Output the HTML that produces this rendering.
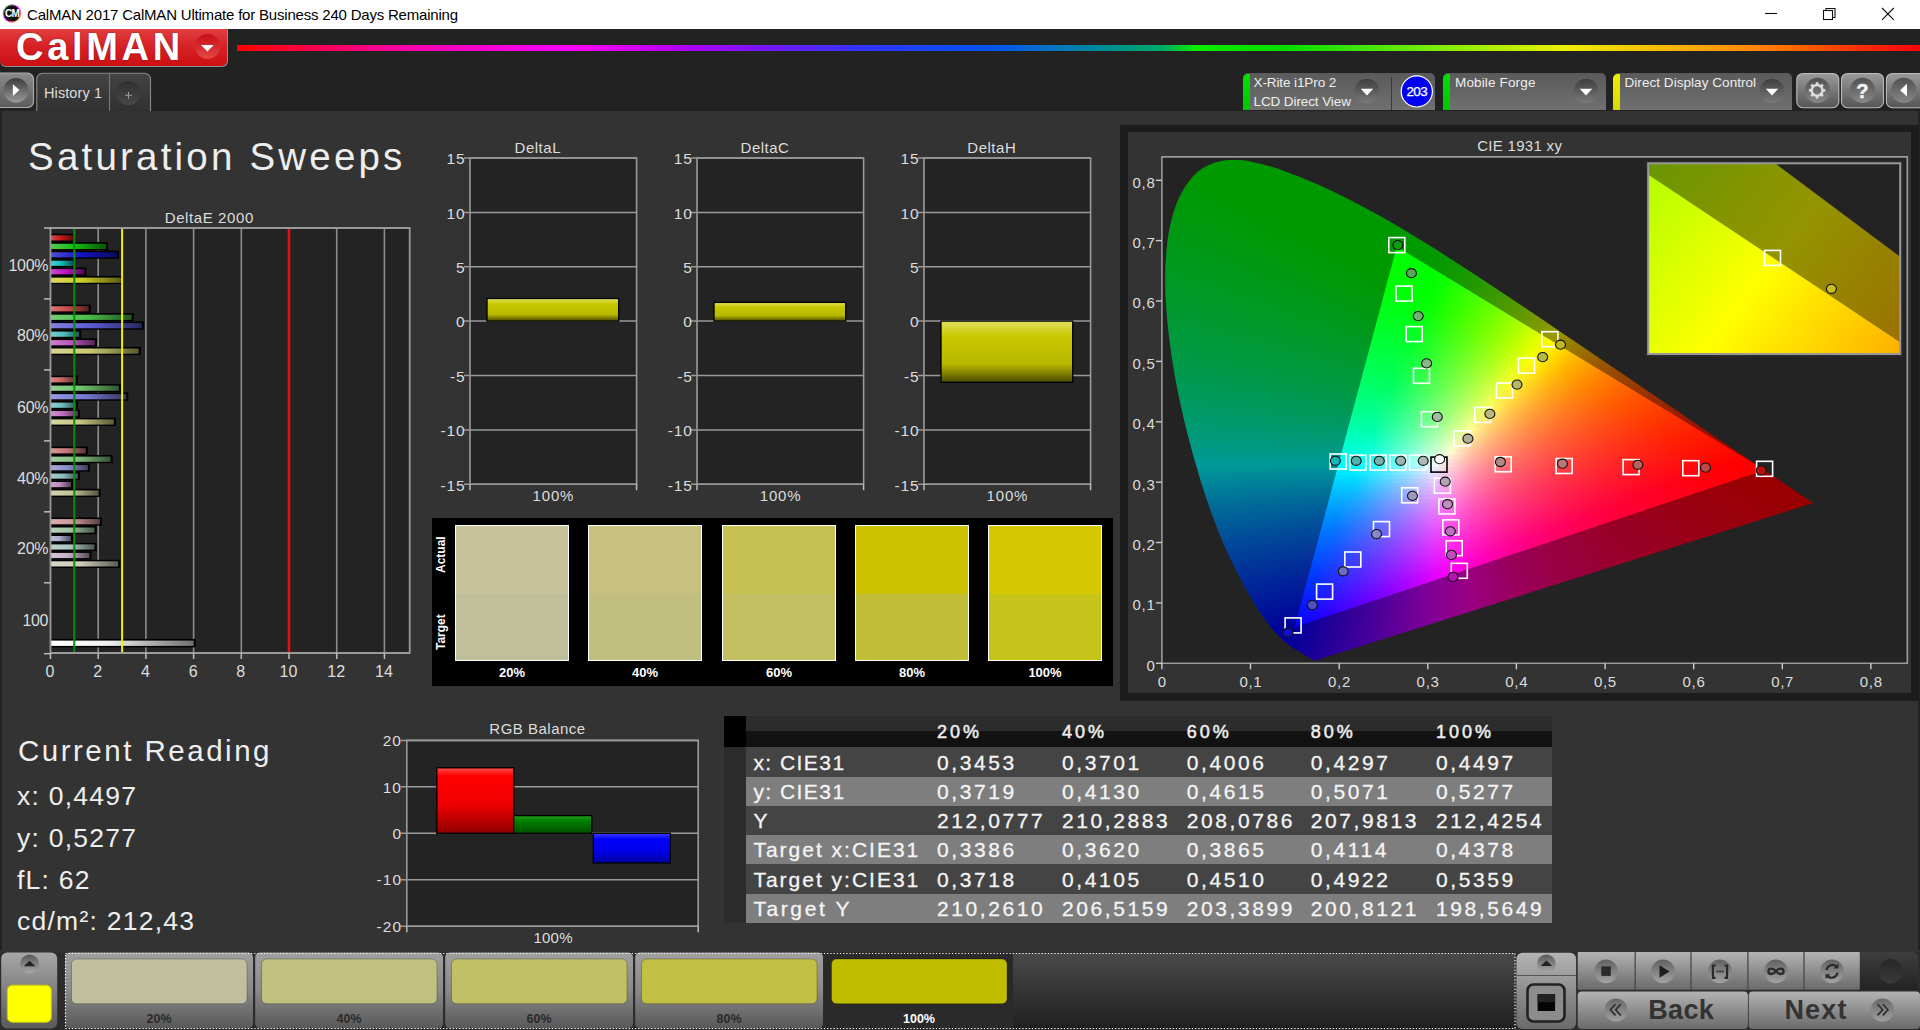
<!DOCTYPE html><html><head><meta charset="utf-8"><style>
html,body{margin:0;padding:0;width:1920px;height:1030px;overflow:hidden;background:#222;}
body{font-family:"Liberation Sans", sans-serif;position:relative;}
.t{position:absolute;white-space:nowrap;}
svg{position:absolute;left:0;top:0;}
</style></head><body>
<div style="position:absolute;left:0px;top:0px;width:1920px;height:29px;background:#fff;"></div>
<svg width="30" height="29" style="left:0;top:0"><defs><linearGradient id="icg" x1="0" y1="0" x2="1" y2="1"><stop offset="0" stop-color="#0f0"/><stop offset=".5" stop-color="#f0f"/><stop offset="1" stop-color="#ff0"/></linearGradient></defs><circle cx="12" cy="13.5" r="9.3" fill="url(#icg)"/><circle cx="12" cy="13.5" r="8" fill="#111"/><text x="12" y="17.3" font-size="10" font-weight="bold" fill="#fff" text-anchor="middle" font-family="Liberation Sans" letter-spacing="-0.8">CM</text></svg>
<div class="t" style="left:27.0px;top:7.3px;font-size:15px;line-height:15px;color:#000;letter-spacing:-0.2px;font-weight:normal;">CalMAN 2017 CalMAN Ultimate for Business 240 Days Remaining</div>
<svg width="160" height="29" style="left:1760px;top:0"><path d="M5 13.5h12" stroke="#111" stroke-width="1.1"/><rect x="63.5" y="10.5" width="9" height="9" fill="none" stroke="#111" stroke-width="1.1"/><path d="M66 10.5v-2h9v9h-2.5" fill="none" stroke="#111" stroke-width="1.1"/><path d="M122 8l11.8 11.8M133.8 8l-11.8 11.8" stroke="#111" stroke-width="1.15"/></svg>
<div style="position:absolute;left:0px;top:29px;width:1920px;height:82px;background:#222;"></div>
<div style="position:absolute;left:0px;top:29px;width:227px;height:37px;background:linear-gradient(#e23e40,#d82226 45%,#cc1014);border-radius:0 0 6px 6px;border-right:1.2px solid #8c9090;border-bottom:1.2px solid #8c9090;"></div>
<div class="t" style="left:16.0px;top:28.3px;font-size:38px;line-height:38px;color:#fff;letter-spacing:3.7px;font-weight:bold;text-shadow:0 0 2px rgba(0,0,0,.35);">CalMAN</div>
<svg width="30" height="30" style="left:193px;top:32px"><defs><linearGradient id="lgd" x1="0" y1="0" x2="0" y2="1"><stop offset="0" stop-color="#c80c18"/><stop offset="1" stop-color="#e24848"/></linearGradient></defs><circle cx="14.5" cy="14.4" r="12.5" fill="url(#lgd)"/><path d="M8 12.9h12.8l-6.4 6.6z" fill="#fff"/></svg>
<div style="position:absolute;left:237.4px;top:45px;width:1683px;height:6px;background:linear-gradient(90deg,#f00 0%,#f0a 10%,#f0f 20%,#a0f 27%,#33f 37%,#05e 45%,#0a6 55%,#0e0 57%,#0d0 62%,#8e0 72%,#ee0 79%,#f80 90%,#f00 100%);"></div>
<svg width="160" height="40" style="left:0;top:72px"><defs><linearGradient id="tb1" x1="0" y1="0" x2="0" y2="1"><stop offset="0" stop-color="#8a8a8a"/><stop offset="1" stop-color="#5c5c5c"/></linearGradient><linearGradient id="tbc" x1="0" y1="0" x2="0" y2="1"><stop offset="0" stop-color="#3c3c3c"/><stop offset="1" stop-color="#9a9a9a"/></linearGradient><linearGradient id="tb2" x1="0" y1="0" x2="0" y2="1"><stop offset="0" stop-color="#444"/><stop offset="1" stop-color="#303030"/></linearGradient><linearGradient id="tbc2" x1="0" y1="0" x2="0" y2="1"><stop offset="0" stop-color="#303030"/><stop offset="1" stop-color="#484848"/></linearGradient></defs><rect x="-6" y="1.2" width="39.5" height="34.3" rx="6" fill="url(#tb1)" stroke="#aaa" stroke-width="1.2"/><circle cx="16" cy="18.3" r="12.3" fill="url(#tbc)"/><path d="M12.9 12.2v11.8l6.5-5.9z" fill="#fff"/><path d="M36.8 40V7.2a6 6 0 0 1 6-6H144.5a6 6 0 0 1 6 6V40" fill="url(#tb2)" stroke="#8a8a8a" stroke-width="1.1"/><path d="M109.5 1v39" stroke="#777" stroke-width="1.1"/><circle cx="128.5" cy="21" r="12" fill="url(#tbc2)"/><path d="M125 23.3h7M128.5 19.8v7" stroke="#999" stroke-width="1"/></svg>
<div class="t" style="left:44.0px;top:86.2px;font-size:14.5px;line-height:14.5px;color:#ddd;letter-spacing:0.1px;font-weight:normal;">History 1</div>
<div style="position:absolute;left:1243px;top:73px;width:192px;height:37px;background:linear-gradient(#5a5a5a,#707070);border-radius:5px 5px 0 0;"></div>
<div style="position:absolute;left:1243px;top:74px;width:7px;height:36px;background:linear-gradient(#00e000,#00c800);border-radius:5px 0 0 0;"></div>
<svg width="30" height="30" style="left:1352px;top:76.4px"><defs><linearGradient id="dd1243" x1="0" y1="0" x2="0" y2="1"><stop offset="0" stop-color="#3e3e3e"/><stop offset="1" stop-color="#7a7a7a"/></linearGradient></defs><circle cx="15" cy="15" r="12.3" fill="url(#dd1243)"/><path d="M8.8 12.8h12.4l-6.2 6.6z" fill="#fff"/></svg>
<div class="t" style="left:1253.5px;top:76.0px;font-size:13.5px;line-height:13.5px;color:#eee;letter-spacing:-0.1px;font-weight:normal;">X-Rite i1Pro 2</div>
<div class="t" style="left:1253.5px;top:94.8px;font-size:13.5px;line-height:13.5px;color:#eee;letter-spacing:-0.1px;font-weight:normal;">LCD Direct View</div>
<div style="position:absolute;left:1391px;top:77px;width:1.2px;height:33px;background:#3a3a3a;"></div>
<svg width="40" height="40" style="left:1397px;top:72px"><circle cx="19.8" cy="19.4" r="15.6" fill="#0000f0" stroke="#fff" stroke-width="1.2"/><text x="19.8" y="24.2" font-size="13.5" fill="#fff" stroke="#fff" stroke-width="0.25" text-anchor="middle" font-family="Liberation Sans" letter-spacing="-0.6">203</text></svg>
<div style="position:absolute;left:1443px;top:73px;width:163px;height:37px;background:linear-gradient(#5a5a5a,#707070);border-radius:5px 5px 0 0;"></div>
<div style="position:absolute;left:1443px;top:74px;width:7px;height:36px;background:linear-gradient(#00e000,#00c800);border-radius:5px 0 0 0;"></div>
<svg width="30" height="30" style="left:1570.5px;top:76.4px"><defs><linearGradient id="dd1443" x1="0" y1="0" x2="0" y2="1"><stop offset="0" stop-color="#3e3e3e"/><stop offset="1" stop-color="#7a7a7a"/></linearGradient></defs><circle cx="15" cy="15" r="12.3" fill="url(#dd1443)"/><path d="M8.8 12.8h12.4l-6.2 6.6z" fill="#fff"/></svg>
<div class="t" style="left:1455.0px;top:76.0px;font-size:13.5px;line-height:13.5px;color:#eee;letter-spacing:0.15px;font-weight:normal;">Mobile Forge</div>
<div style="position:absolute;left:1613px;top:73px;width:179px;height:37px;background:linear-gradient(#5a5a5a,#707070);border-radius:5px 5px 0 0;"></div>
<div style="position:absolute;left:1613px;top:74px;width:7px;height:36px;background:linear-gradient(#f0f000,#d8d800);border-radius:5px 0 0 0;"></div>
<svg width="30" height="30" style="left:1757px;top:76.4px"><defs><linearGradient id="dd1613" x1="0" y1="0" x2="0" y2="1"><stop offset="0" stop-color="#3e3e3e"/><stop offset="1" stop-color="#7a7a7a"/></linearGradient></defs><circle cx="15" cy="15" r="12.3" fill="url(#dd1613)"/><path d="M8.8 12.8h12.4l-6.2 6.6z" fill="#fff"/></svg>
<div class="t" style="left:1624.5px;top:76.0px;font-size:13.5px;line-height:13.5px;color:#eee;letter-spacing:0.05px;font-weight:normal;">Direct Display Control</div>
<svg width="130" height="40" style="left:1795px;top:72px"><defs><linearGradient id="bg1" x1="0" y1="0" x2="0" y2="1"><stop offset="0" stop-color="#9a9a9a"/><stop offset="1" stop-color="#555"/></linearGradient><linearGradient id="bgc" x1="0" y1="0" x2="0" y2="1"><stop offset="0" stop-color="#505050"/><stop offset="1" stop-color="#888"/></linearGradient></defs><rect x="1.8" y="1.5" width="42" height="34.2" rx="6" fill="url(#bg1)" stroke="#bbb" stroke-width="1.1"/><rect x="46.5" y="1.5" width="42" height="34.2" rx="6" fill="url(#bg1)" stroke="#bbb" stroke-width="1.1"/><rect x="91.4" y="1.5" width="45" height="34.2" rx="6" fill="url(#bg1)" stroke="#bbb" stroke-width="1.1"/><circle cx="22.5" cy="18.4" r="12.6" fill="url(#bgc)"/><circle cx="67.5" cy="18.4" r="12.6" fill="url(#bgc)"/><circle cx="108.7" cy="18.4" r="12.6" fill="url(#bgc)"/><g transform="translate(22.1 18.4)" fill="#ddd"><circle r="5.4" fill="none" stroke="#ddd" stroke-width="2.4"/><rect x="-1.3" y="-8.2" width="2.6" height="3.4" transform="rotate(0)"/><rect x="-1.3" y="-8.2" width="2.6" height="3.4" transform="rotate(45)"/><rect x="-1.3" y="-8.2" width="2.6" height="3.4" transform="rotate(90)"/><rect x="-1.3" y="-8.2" width="2.6" height="3.4" transform="rotate(135)"/><rect x="-1.3" y="-8.2" width="2.6" height="3.4" transform="rotate(180)"/><rect x="-1.3" y="-8.2" width="2.6" height="3.4" transform="rotate(225)"/><rect x="-1.3" y="-8.2" width="2.6" height="3.4" transform="rotate(270)"/><rect x="-1.3" y="-8.2" width="2.6" height="3.4" transform="rotate(315)"/></g><text x="67.3" y="25.6" font-size="20" font-weight="bold" fill="#f2f2f2" stroke="#f2f2f2" stroke-width="0.6" text-anchor="middle" font-family="Liberation Sans">?</text><path d="M112 11.8v12.6l-6.9-6.1z" fill="#fff"/></svg>
<div style="position:absolute;left:2px;top:111px;width:1916px;height:839px;background:#333;"></div>
<div class="t" style="left:28.0px;top:138.1px;font-size:38.5px;line-height:38.5px;color:#eee;letter-spacing:3.2px;font-weight:normal;">Saturation Sweeps</div>
<svg width="440" height="700" style="left:0;top:0"><defs><linearGradient id="de1"><stop offset="0" stop-color="rgb(213, 82, 82)"/><stop offset=".45" stop-color="rgb(200, 25, 25)"/><stop offset="1" stop-color="rgb(90, 11, 11)"/></linearGradient><linearGradient id="de2"><stop offset="0" stop-color="rgb(78, 206, 78)"/><stop offset=".45" stop-color="rgb(20, 190, 20)"/><stop offset="1" stop-color="rgb(9, 85, 9)"/></linearGradient><linearGradient id="de3"><stop offset="0" stop-color="rgb(78, 78, 213)"/><stop offset=".45" stop-color="rgb(20, 20, 200)"/><stop offset="1" stop-color="rgb(9, 9, 90)"/></linearGradient><linearGradient id="de4"><stop offset="0" stop-color="rgb(78, 206, 206)"/><stop offset=".45" stop-color="rgb(20, 190, 190)"/><stop offset="1" stop-color="rgb(9, 85, 85)"/></linearGradient><linearGradient id="de5"><stop offset="0" stop-color="rgb(206, 78, 206)"/><stop offset=".45" stop-color="rgb(190, 20, 190)"/><stop offset="1" stop-color="rgb(85, 9, 85)"/></linearGradient><linearGradient id="de6"><stop offset="0" stop-color="rgb(217, 217, 93)"/><stop offset=".45" stop-color="rgb(205, 205, 40)"/><stop offset="1" stop-color="rgb(92, 92, 18)"/></linearGradient><linearGradient id="de7"><stop offset="0" stop-color="rgb(213, 120, 120)"/><stop offset=".45" stop-color="rgb(200, 75, 75)"/><stop offset="1" stop-color="rgb(90, 33, 33)"/></linearGradient><linearGradient id="de8"><stop offset="0" stop-color="rgb(120, 206, 120)"/><stop offset=".45" stop-color="rgb(75, 190, 75)"/><stop offset="1" stop-color="rgb(33, 85, 33)"/></linearGradient><linearGradient id="de9"><stop offset="0" stop-color="rgb(131, 131, 221)"/><stop offset=".45" stop-color="rgb(90, 90, 210)"/><stop offset="1" stop-color="rgb(40, 40, 94)"/></linearGradient><linearGradient id="de10"><stop offset="0" stop-color="rgb(123, 206, 206)"/><stop offset=".45" stop-color="rgb(80, 190, 190)"/><stop offset="1" stop-color="rgb(36, 85, 85)"/></linearGradient><linearGradient id="de11"><stop offset="0" stop-color="rgb(206, 127, 206)"/><stop offset=".45" stop-color="rgb(190, 85, 190)"/><stop offset="1" stop-color="rgb(85, 38, 85)"/></linearGradient><linearGradient id="de12"><stop offset="0" stop-color="rgb(213, 213, 146)"/><stop offset=".45" stop-color="rgb(200, 200, 110)"/><stop offset="1" stop-color="rgb(90, 90, 49)"/></linearGradient><linearGradient id="de13"><stop offset="0" stop-color="rgb(213, 138, 138)"/><stop offset=".45" stop-color="rgb(200, 100, 100)"/><stop offset="1" stop-color="rgb(90, 45, 45)"/></linearGradient><linearGradient id="de14"><stop offset="0" stop-color="rgb(146, 210, 146)"/><stop offset=".45" stop-color="rgb(110, 195, 110)"/><stop offset="1" stop-color="rgb(49, 87, 49)"/></linearGradient><linearGradient id="de15"><stop offset="0" stop-color="rgb(153, 153, 225)"/><stop offset=".45" stop-color="rgb(120, 120, 215)"/><stop offset="1" stop-color="rgb(54, 54, 96)"/></linearGradient><linearGradient id="de16"><stop offset="0" stop-color="rgb(146, 206, 206)"/><stop offset=".45" stop-color="rgb(110, 190, 190)"/><stop offset="1" stop-color="rgb(49, 85, 85)"/></linearGradient><linearGradient id="de17"><stop offset="0" stop-color="rgb(206, 146, 206)"/><stop offset=".45" stop-color="rgb(190, 110, 190)"/><stop offset="1" stop-color="rgb(85, 49, 85)"/></linearGradient><linearGradient id="de18"><stop offset="0" stop-color="rgb(213, 213, 161)"/><stop offset=".45" stop-color="rgb(200, 200, 130)"/><stop offset="1" stop-color="rgb(90, 90, 58)"/></linearGradient><linearGradient id="de19"><stop offset="0" stop-color="rgb(213, 153, 153)"/><stop offset=".45" stop-color="rgb(200, 120, 120)"/><stop offset="1" stop-color="rgb(90, 54, 54)"/></linearGradient><linearGradient id="de20"><stop offset="0" stop-color="rgb(161, 206, 161)"/><stop offset=".45" stop-color="rgb(130, 190, 130)"/><stop offset="1" stop-color="rgb(58, 85, 58)"/></linearGradient><linearGradient id="de21"><stop offset="0" stop-color="rgb(168, 168, 217)"/><stop offset=".45" stop-color="rgb(140, 140, 205)"/><stop offset="1" stop-color="rgb(63, 63, 92)"/></linearGradient><linearGradient id="de22"><stop offset="0" stop-color="rgb(168, 206, 206)"/><stop offset=".45" stop-color="rgb(140, 190, 190)"/><stop offset="1" stop-color="rgb(63, 85, 85)"/></linearGradient><linearGradient id="de23"><stop offset="0" stop-color="rgb(206, 168, 206)"/><stop offset=".45" stop-color="rgb(190, 140, 190)"/><stop offset="1" stop-color="rgb(85, 63, 85)"/></linearGradient><linearGradient id="de24"><stop offset="0" stop-color="rgb(210, 210, 176)"/><stop offset=".45" stop-color="rgb(195, 195, 150)"/><stop offset="1" stop-color="rgb(87, 87, 67)"/></linearGradient><linearGradient id="de25"><stop offset="0" stop-color="rgb(217, 176, 176)"/><stop offset=".45" stop-color="rgb(205, 150, 150)"/><stop offset="1" stop-color="rgb(92, 67, 67)"/></linearGradient><linearGradient id="de26"><stop offset="0" stop-color="rgb(183, 210, 183)"/><stop offset=".45" stop-color="rgb(160, 195, 160)"/><stop offset="1" stop-color="rgb(72, 87, 72)"/></linearGradient><linearGradient id="de27"><stop offset="0" stop-color="rgb(191, 191, 217)"/><stop offset=".45" stop-color="rgb(170, 170, 205)"/><stop offset="1" stop-color="rgb(76, 76, 92)"/></linearGradient><linearGradient id="de28"><stop offset="0" stop-color="rgb(191, 210, 206)"/><stop offset=".45" stop-color="rgb(170, 195, 190)"/><stop offset="1" stop-color="rgb(76, 87, 85)"/></linearGradient><linearGradient id="de29"><stop offset="0" stop-color="rgb(213, 195, 213)"/><stop offset=".45" stop-color="rgb(200, 175, 200)"/><stop offset="1" stop-color="rgb(90, 78, 90)"/></linearGradient><linearGradient id="de30"><stop offset="0" stop-color="rgb(217, 217, 202)"/><stop offset=".45" stop-color="rgb(205, 205, 185)"/><stop offset="1" stop-color="rgb(92, 92, 83)"/></linearGradient><linearGradient id="dew"><stop offset="0" stop-color="#fff"/><stop offset=".4" stop-color="#f0f0f0"/><stop offset="1" stop-color="#707070"/></linearGradient></defs><rect x="50.5" y="228" width="359.2" height="425" fill="#232323"/><path d="M98.2 228V653" stroke="#8c8c8c" stroke-width="1.6"/><path d="M145.9 228V653" stroke="#8c8c8c" stroke-width="1.6"/><path d="M193.6 228V653" stroke="#8c8c8c" stroke-width="1.6"/><path d="M241.3 228V653" stroke="#8c8c8c" stroke-width="1.6"/><path d="M289.0 228V653" stroke="#8c8c8c" stroke-width="1.6"/><path d="M336.7 228V653" stroke="#8c8c8c" stroke-width="1.6"/><path d="M384.4 228V653" stroke="#8c8c8c" stroke-width="1.6"/><rect x="50.5" y="233.7" width="24.7" height="8.2" fill="#000"/><rect x="50.5" y="235.3" width="22.7" height="5.2" fill="url(#de1)"/><rect x="50.5" y="242.1" width="57.6" height="8.2" fill="#000"/><rect x="50.5" y="243.8" width="55.6" height="5.2" fill="url(#de2)"/><rect x="50.5" y="250.6" width="68.5" height="8.2" fill="#000"/><rect x="50.5" y="252.2" width="66.5" height="5.2" fill="url(#de3)"/><rect x="50.5" y="259.1" width="24.7" height="8.2" fill="#000"/><rect x="50.5" y="260.7" width="22.7" height="5.2" fill="url(#de4)"/><rect x="50.5" y="267.5" width="35.9" height="8.2" fill="#000"/><rect x="50.5" y="269.1" width="33.9" height="5.2" fill="url(#de5)"/><rect x="50.5" y="275.9" width="72.4" height="8.2" fill="#000"/><rect x="50.5" y="277.6" width="70.4" height="5.2" fill="url(#de6)"/><rect x="50.5" y="304.6" width="40.2" height="8.2" fill="#000"/><rect x="50.5" y="306.2" width="38.2" height="5.2" fill="url(#de7)"/><rect x="50.5" y="313.1" width="83.1" height="8.2" fill="#000"/><rect x="50.5" y="314.7" width="81.1" height="5.2" fill="url(#de8)"/><rect x="50.5" y="321.5" width="93.3" height="8.2" fill="#000"/><rect x="50.5" y="323.1" width="91.3" height="5.2" fill="url(#de9)"/><rect x="50.5" y="330.0" width="30.6" height="8.2" fill="#000"/><rect x="50.5" y="331.6" width="28.6" height="5.2" fill="url(#de10)"/><rect x="50.5" y="338.4" width="46.4" height="8.2" fill="#000"/><rect x="50.5" y="340.1" width="44.4" height="5.2" fill="url(#de11)"/><rect x="50.5" y="346.9" width="90.2" height="8.2" fill="#000"/><rect x="50.5" y="348.5" width="88.2" height="5.2" fill="url(#de12)"/><rect x="50.5" y="375.6" width="27.3" height="8.2" fill="#000"/><rect x="50.5" y="377.2" width="25.3" height="5.2" fill="url(#de13)"/><rect x="50.5" y="384.0" width="70.4" height="8.2" fill="#000"/><rect x="50.5" y="385.6" width="68.4" height="5.2" fill="url(#de14)"/><rect x="50.5" y="392.5" width="77.8" height="8.2" fill="#000"/><rect x="50.5" y="394.1" width="75.8" height="5.2" fill="url(#de15)"/><rect x="50.5" y="400.9" width="27.3" height="8.2" fill="#000"/><rect x="50.5" y="402.6" width="25.3" height="5.2" fill="url(#de16)"/><rect x="50.5" y="409.4" width="29.4" height="8.2" fill="#000"/><rect x="50.5" y="411.0" width="27.4" height="5.2" fill="url(#de17)"/><rect x="50.5" y="417.8" width="65.4" height="8.2" fill="#000"/><rect x="50.5" y="419.4" width="63.4" height="5.2" fill="url(#de18)"/><rect x="50.5" y="446.6" width="37.3" height="8.2" fill="#000"/><rect x="50.5" y="448.2" width="35.3" height="5.2" fill="url(#de19)"/><rect x="50.5" y="455.0" width="62.1" height="8.2" fill="#000"/><rect x="50.5" y="456.6" width="60.1" height="5.2" fill="url(#de20)"/><rect x="50.5" y="463.4" width="39.4" height="8.2" fill="#000"/><rect x="50.5" y="465.1" width="37.4" height="5.2" fill="url(#de21)"/><rect x="50.5" y="471.9" width="29.4" height="8.2" fill="#000"/><rect x="50.5" y="473.5" width="27.4" height="5.2" fill="url(#de22)"/><rect x="50.5" y="480.4" width="22.5" height="8.2" fill="#000"/><rect x="50.5" y="482.0" width="20.5" height="5.2" fill="url(#de23)"/><rect x="50.5" y="488.8" width="50.2" height="8.2" fill="#000"/><rect x="50.5" y="490.4" width="48.2" height="5.2" fill="url(#de24)"/><rect x="50.5" y="517.5" width="51.4" height="8.2" fill="#000"/><rect x="50.5" y="519.1" width="49.4" height="5.2" fill="url(#de25)"/><rect x="50.5" y="526.0" width="46.1" height="8.2" fill="#000"/><rect x="50.5" y="527.5" width="44.1" height="5.2" fill="url(#de26)"/><rect x="50.5" y="534.4" width="22.5" height="8.2" fill="#000"/><rect x="50.5" y="536.0" width="20.5" height="5.2" fill="url(#de27)"/><rect x="50.5" y="542.9" width="46.1" height="8.2" fill="#000"/><rect x="50.5" y="544.4" width="44.1" height="5.2" fill="url(#de28)"/><rect x="50.5" y="551.3" width="40.9" height="8.2" fill="#000"/><rect x="50.5" y="552.9" width="38.9" height="5.2" fill="url(#de29)"/><rect x="50.5" y="559.8" width="69.7" height="8.2" fill="#000"/><rect x="50.5" y="561.3" width="67.7" height="5.2" fill="url(#de30)"/><rect x="50.5" y="638.8" width="145.1" height="8.6" fill="#000"/><rect x="50.5" y="640.6" width="143.1" height="5.3" fill="url(#dew)"/><path d="M74.3 228V653" stroke="#0a8a0a" stroke-width="2"/><path d="M122.1 228V653" stroke="#f0f000" stroke-width="2"/><path d="M289.0 228V653" stroke="#e01010" stroke-width="2.6"/><path d="M50.5 228H409.7V653H50.5Z" fill="none" stroke="#999" stroke-width="1.8"/><path d="M44 228.0H50.5" stroke="#bbb" stroke-width="1.5"/><path d="M44 298.9H50.5" stroke="#bbb" stroke-width="1.5"/><path d="M44 369.9H50.5" stroke="#bbb" stroke-width="1.5"/><path d="M44 440.9H50.5" stroke="#bbb" stroke-width="1.5"/><path d="M44 511.8H50.5" stroke="#bbb" stroke-width="1.5"/><path d="M44 582.8H50.5" stroke="#bbb" stroke-width="1.5"/><path d="M44 653.7H50.5" stroke="#bbb" stroke-width="1.5"/><path d="M50.5 653V659" stroke="#bbb" stroke-width="1.5"/><path d="M98.2 653V659" stroke="#bbb" stroke-width="1.5"/><path d="M145.9 653V659" stroke="#bbb" stroke-width="1.5"/><path d="M193.6 653V659" stroke="#bbb" stroke-width="1.5"/><path d="M241.3 653V659" stroke="#bbb" stroke-width="1.5"/><path d="M289.0 653V659" stroke="#bbb" stroke-width="1.5"/><path d="M336.7 653V659" stroke="#bbb" stroke-width="1.5"/><path d="M384.4 653V659" stroke="#bbb" stroke-width="1.5"/></svg>
<div class="t" style="left:-290.7px;width:1000px;text-align:center;top:210.3px;font-size:15px;line-height:15px;color:#ddd;letter-spacing:0.6px;font-weight:normal;">DeltaE 2000</div>
<div class="t" style="left:-951.8px;width:1000px;text-align:right;top:257.5px;font-size:16px;line-height:16px;color:#ddd;letter-spacing:-0.3px;font-weight:normal;">100%</div>
<div class="t" style="left:-951.8px;width:1000px;text-align:right;top:328.0px;font-size:16px;line-height:16px;color:#ddd;letter-spacing:-0.3px;font-weight:normal;">80%</div>
<div class="t" style="left:-951.8px;width:1000px;text-align:right;top:399.5px;font-size:16px;line-height:16px;color:#ddd;letter-spacing:-0.3px;font-weight:normal;">60%</div>
<div class="t" style="left:-951.8px;width:1000px;text-align:right;top:470.5px;font-size:16px;line-height:16px;color:#ddd;letter-spacing:-0.3px;font-weight:normal;">40%</div>
<div class="t" style="left:-951.8px;width:1000px;text-align:right;top:541.0px;font-size:16px;line-height:16px;color:#ddd;letter-spacing:-0.3px;font-weight:normal;">20%</div>
<div class="t" style="left:-951.8px;width:1000px;text-align:right;top:612.5px;font-size:16px;line-height:16px;color:#ddd;letter-spacing:-0.3px;font-weight:normal;">100</div>
<div class="t" style="left:-450.0px;width:1000px;text-align:center;top:663.5px;font-size:16px;line-height:16px;color:#ddd;letter-spacing:0px;font-weight:normal;">0</div>
<div class="t" style="left:-402.3px;width:1000px;text-align:center;top:663.5px;font-size:16px;line-height:16px;color:#ddd;letter-spacing:0px;font-weight:normal;">2</div>
<div class="t" style="left:-354.6px;width:1000px;text-align:center;top:663.5px;font-size:16px;line-height:16px;color:#ddd;letter-spacing:0px;font-weight:normal;">4</div>
<div class="t" style="left:-306.9px;width:1000px;text-align:center;top:663.5px;font-size:16px;line-height:16px;color:#ddd;letter-spacing:0px;font-weight:normal;">6</div>
<div class="t" style="left:-259.2px;width:1000px;text-align:center;top:663.5px;font-size:16px;line-height:16px;color:#ddd;letter-spacing:0px;font-weight:normal;">8</div>
<div class="t" style="left:-211.5px;width:1000px;text-align:center;top:663.5px;font-size:16px;line-height:16px;color:#ddd;letter-spacing:0px;font-weight:normal;">10</div>
<div class="t" style="left:-163.8px;width:1000px;text-align:center;top:663.5px;font-size:16px;line-height:16px;color:#ddd;letter-spacing:0px;font-weight:normal;">12</div>
<div class="t" style="left:-116.1px;width:1000px;text-align:center;top:663.5px;font-size:16px;line-height:16px;color:#ddd;letter-spacing:0px;font-weight:normal;">14</div>
<svg width="230" height="380" style="left:429.7px;top:130px"><defs><linearGradient id="dg469.7" x1="0" y1="0" x2="0" y2="1"><stop offset="0" stop-color="#e0e060"/><stop offset=".25" stop-color="#c8c800"/><stop offset=".7" stop-color="#b8b800"/><stop offset="1" stop-color="#4a4a00"/></linearGradient></defs><rect x="40" y="28" width="166.6" height="326.3" fill="#232323"/><path d="M34 354.3H206.6" stroke="#9a9a9a" stroke-width="1.5"/><path d="M34 299.9H206.6" stroke="#9a9a9a" stroke-width="1.5"/><path d="M34 245.5H206.6" stroke="#9a9a9a" stroke-width="1.5"/><path d="M34 191.1H206.6" stroke="#9a9a9a" stroke-width="1.5"/><path d="M34 136.8H206.6" stroke="#9a9a9a" stroke-width="1.5"/><path d="M34 82.4H206.6" stroke="#9a9a9a" stroke-width="1.5"/><path d="M34 28.0H206.6" stroke="#9a9a9a" stroke-width="1.5"/><path d="M40 28H206.6V354.3H40Z" fill="none" stroke="#9a9a9a" stroke-width="1.6"/><path d="M40 354.3v6M206.6 354.3v6" stroke="#bbb" stroke-width="1.5"/><rect x="57.0" y="168.5" width="131.7" height="22.6" fill="url(#dg469.7)" stroke="#000" stroke-width="1.3"/></svg>
<div class="t" style="left:37.8px;width:1000px;text-align:center;top:139.8px;font-size:15px;line-height:15px;color:#ddd;letter-spacing:0.5px;font-weight:normal;">DeltaL</div>
<div class="t" style="left:-534.4px;width:1000px;text-align:right;top:477.5px;font-size:15.5px;line-height:15.5px;color:#ddd;letter-spacing:0.9px;font-weight:normal;">-15</div>
<div class="t" style="left:-534.4px;width:1000px;text-align:right;top:423.1px;font-size:15.5px;line-height:15.5px;color:#ddd;letter-spacing:0.9px;font-weight:normal;">-10</div>
<div class="t" style="left:-534.4px;width:1000px;text-align:right;top:368.7px;font-size:15.5px;line-height:15.5px;color:#ddd;letter-spacing:0.9px;font-weight:normal;">-5</div>
<div class="t" style="left:-534.4px;width:1000px;text-align:right;top:314.3px;font-size:15.5px;line-height:15.5px;color:#ddd;letter-spacing:0.9px;font-weight:normal;">0</div>
<div class="t" style="left:-534.4px;width:1000px;text-align:right;top:259.9px;font-size:15.5px;line-height:15.5px;color:#ddd;letter-spacing:0.9px;font-weight:normal;">5</div>
<div class="t" style="left:-534.4px;width:1000px;text-align:right;top:205.6px;font-size:15.5px;line-height:15.5px;color:#ddd;letter-spacing:0.9px;font-weight:normal;">10</div>
<div class="t" style="left:-534.4px;width:1000px;text-align:right;top:151.2px;font-size:15.5px;line-height:15.5px;color:#ddd;letter-spacing:0.9px;font-weight:normal;">15</div>
<div class="t" style="left:53.4px;width:1000px;text-align:center;top:488.3px;font-size:15px;line-height:15px;color:#ddd;letter-spacing:0.8px;font-weight:normal;">100%</div>
<svg width="230" height="380" style="left:656.9px;top:130px"><defs><linearGradient id="dg696.9" x1="0" y1="0" x2="0" y2="1"><stop offset="0" stop-color="#e0e060"/><stop offset=".25" stop-color="#c8c800"/><stop offset=".7" stop-color="#b8b800"/><stop offset="1" stop-color="#4a4a00"/></linearGradient></defs><rect x="40" y="28" width="166.6" height="326.3" fill="#232323"/><path d="M34 354.3H206.6" stroke="#9a9a9a" stroke-width="1.5"/><path d="M34 299.9H206.6" stroke="#9a9a9a" stroke-width="1.5"/><path d="M34 245.5H206.6" stroke="#9a9a9a" stroke-width="1.5"/><path d="M34 191.1H206.6" stroke="#9a9a9a" stroke-width="1.5"/><path d="M34 136.8H206.6" stroke="#9a9a9a" stroke-width="1.5"/><path d="M34 82.4H206.6" stroke="#9a9a9a" stroke-width="1.5"/><path d="M34 28.0H206.6" stroke="#9a9a9a" stroke-width="1.5"/><path d="M40 28H206.6V354.3H40Z" fill="none" stroke="#9a9a9a" stroke-width="1.6"/><path d="M40 354.3v6M206.6 354.3v6" stroke="#bbb" stroke-width="1.5"/><rect x="57.0" y="172.4" width="131.7" height="18.7" fill="url(#dg696.9)" stroke="#000" stroke-width="1.3"/></svg>
<div class="t" style="left:265.0px;width:1000px;text-align:center;top:139.8px;font-size:15px;line-height:15px;color:#ddd;letter-spacing:0.5px;font-weight:normal;">DeltaC</div>
<div class="t" style="left:-307.2px;width:1000px;text-align:right;top:477.5px;font-size:15.5px;line-height:15.5px;color:#ddd;letter-spacing:0.9px;font-weight:normal;">-15</div>
<div class="t" style="left:-307.2px;width:1000px;text-align:right;top:423.1px;font-size:15.5px;line-height:15.5px;color:#ddd;letter-spacing:0.9px;font-weight:normal;">-10</div>
<div class="t" style="left:-307.2px;width:1000px;text-align:right;top:368.7px;font-size:15.5px;line-height:15.5px;color:#ddd;letter-spacing:0.9px;font-weight:normal;">-5</div>
<div class="t" style="left:-307.2px;width:1000px;text-align:right;top:314.3px;font-size:15.5px;line-height:15.5px;color:#ddd;letter-spacing:0.9px;font-weight:normal;">0</div>
<div class="t" style="left:-307.2px;width:1000px;text-align:right;top:259.9px;font-size:15.5px;line-height:15.5px;color:#ddd;letter-spacing:0.9px;font-weight:normal;">5</div>
<div class="t" style="left:-307.2px;width:1000px;text-align:right;top:205.6px;font-size:15.5px;line-height:15.5px;color:#ddd;letter-spacing:0.9px;font-weight:normal;">10</div>
<div class="t" style="left:-307.2px;width:1000px;text-align:right;top:151.2px;font-size:15.5px;line-height:15.5px;color:#ddd;letter-spacing:0.9px;font-weight:normal;">15</div>
<div class="t" style="left:280.6px;width:1000px;text-align:center;top:488.3px;font-size:15px;line-height:15px;color:#ddd;letter-spacing:0.8px;font-weight:normal;">100%</div>
<svg width="230" height="380" style="left:883.7px;top:130px"><defs><linearGradient id="dg923.7" x1="0" y1="0" x2="0" y2="1"><stop offset="0" stop-color="#e0e060"/><stop offset=".25" stop-color="#c8c800"/><stop offset=".7" stop-color="#b8b800"/><stop offset="1" stop-color="#4a4a00"/></linearGradient></defs><rect x="40" y="28" width="166.6" height="326.3" fill="#232323"/><path d="M34 354.3H206.6" stroke="#9a9a9a" stroke-width="1.5"/><path d="M34 299.9H206.6" stroke="#9a9a9a" stroke-width="1.5"/><path d="M34 245.5H206.6" stroke="#9a9a9a" stroke-width="1.5"/><path d="M34 191.1H206.6" stroke="#9a9a9a" stroke-width="1.5"/><path d="M34 136.8H206.6" stroke="#9a9a9a" stroke-width="1.5"/><path d="M34 82.4H206.6" stroke="#9a9a9a" stroke-width="1.5"/><path d="M34 28.0H206.6" stroke="#9a9a9a" stroke-width="1.5"/><path d="M40 28H206.6V354.3H40Z" fill="none" stroke="#9a9a9a" stroke-width="1.6"/><path d="M40 354.3v6M206.6 354.3v6" stroke="#bbb" stroke-width="1.5"/><rect x="57.0" y="191.1" width="131.7" height="61.2" fill="url(#dg923.7)" stroke="#000" stroke-width="1.3"/></svg>
<div class="t" style="left:491.8px;width:1000px;text-align:center;top:139.8px;font-size:15px;line-height:15px;color:#ddd;letter-spacing:0.5px;font-weight:normal;">DeltaH</div>
<div class="t" style="left:-80.4px;width:1000px;text-align:right;top:477.5px;font-size:15.5px;line-height:15.5px;color:#ddd;letter-spacing:0.9px;font-weight:normal;">-15</div>
<div class="t" style="left:-80.4px;width:1000px;text-align:right;top:423.1px;font-size:15.5px;line-height:15.5px;color:#ddd;letter-spacing:0.9px;font-weight:normal;">-10</div>
<div class="t" style="left:-80.4px;width:1000px;text-align:right;top:368.7px;font-size:15.5px;line-height:15.5px;color:#ddd;letter-spacing:0.9px;font-weight:normal;">-5</div>
<div class="t" style="left:-80.4px;width:1000px;text-align:right;top:314.3px;font-size:15.5px;line-height:15.5px;color:#ddd;letter-spacing:0.9px;font-weight:normal;">0</div>
<div class="t" style="left:-80.4px;width:1000px;text-align:right;top:259.9px;font-size:15.5px;line-height:15.5px;color:#ddd;letter-spacing:0.9px;font-weight:normal;">5</div>
<div class="t" style="left:-80.4px;width:1000px;text-align:right;top:205.6px;font-size:15.5px;line-height:15.5px;color:#ddd;letter-spacing:0.9px;font-weight:normal;">10</div>
<div class="t" style="left:-80.4px;width:1000px;text-align:right;top:151.2px;font-size:15.5px;line-height:15.5px;color:#ddd;letter-spacing:0.9px;font-weight:normal;">15</div>
<div class="t" style="left:507.4px;width:1000px;text-align:center;top:488.3px;font-size:15px;line-height:15px;color:#ddd;letter-spacing:0.8px;font-weight:normal;">100%</div>
<div style="position:absolute;left:432px;top:518px;width:681px;height:168px;background:#000;"></div>
<div style="position:absolute;left:455px;top:525px;width:114px;height:136px;background:linear-gradient(#c7c19c 0,#c7c19c 50.5%,#c0bf9c 50.5%,#c0bf9c 100%);box-shadow:0 0 0 1px #fff inset;"></div>
<div class="t" style="left:12.0px;width:1000px;text-align:center;top:666.0px;font-size:13px;line-height:13px;color:#fff;letter-spacing:0px;font-weight:bold;">20%</div>
<div style="position:absolute;left:588px;top:525px;width:114px;height:136px;background:linear-gradient(#c8c07e 0,#c8c07e 50.5%,#c0bf80 50.5%,#c0bf80 100%);box-shadow:0 0 0 1px #fff inset;"></div>
<div class="t" style="left:145.0px;width:1000px;text-align:center;top:666.0px;font-size:13px;line-height:13px;color:#fff;letter-spacing:0px;font-weight:bold;">40%</div>
<div style="position:absolute;left:722px;top:525px;width:114px;height:136px;background:linear-gradient(#c8c252 0,#c8c252 50.5%,#c2c062 50.5%,#c2c062 100%);box-shadow:0 0 0 1px #fff inset;"></div>
<div class="t" style="left:279.0px;width:1000px;text-align:center;top:666.0px;font-size:13px;line-height:13px;color:#fff;letter-spacing:0px;font-weight:bold;">60%</div>
<div style="position:absolute;left:855px;top:525px;width:114px;height:136px;background:linear-gradient(#cdc200 0,#cdc200 50.5%,#c3be38 50.5%,#c3be38 100%);box-shadow:0 0 0 1px #fff inset;"></div>
<div class="t" style="left:412.0px;width:1000px;text-align:center;top:666.0px;font-size:13px;line-height:13px;color:#fff;letter-spacing:0px;font-weight:bold;">80%</div>
<div style="position:absolute;left:988px;top:525px;width:114px;height:136px;background:linear-gradient(#d5c800 0,#d5c800 50.5%,#c6c41a 50.5%,#c6c41a 100%);box-shadow:0 0 0 1px #fff inset;"></div>
<div class="t" style="left:545.0px;width:1000px;text-align:center;top:666.0px;font-size:13px;line-height:13px;color:#fff;letter-spacing:0px;font-weight:bold;">100%</div>
<div class="t" style="left:434px;top:548px;width:14px;height:20px;font-size:12px;line-height:14px;color:#fff;font-weight:bold;transform-origin:0 0;transform:translate(0,25px) rotate(-90deg);">Actual</div>
<div class="t" style="left:434px;top:626px;width:14px;height:20px;font-size:12px;line-height:14px;color:#fff;font-weight:bold;transform-origin:0 0;transform:translate(0,24px) rotate(-90deg);">Target</div>
<div style="position:absolute;left:1120px;top:125px;width:799px;height:576px;background:#1c1c1c;"></div>
<div style="position:absolute;left:1128px;top:132px;width:783px;height:561px;background:#333;"></div>
<div class="t" style="left:1019.7px;width:1000px;text-align:center;top:137.8px;font-size:15px;line-height:15px;color:#ddd;letter-spacing:0.3px;font-weight:normal;">CIE 1931 xy</div>
<svg width="770" height="530" style="left:1150px;top:150px"><defs><clipPath id="clLoc"><path d="M166.2 510.3C166.1 510.3 165.7 510.4 165.5 510.4C165.3 510.4 165.2 510.4 164.9 510.4C164.6 510.4 164.2 510.3 163.8 510.2C163.5 510.1 163.2 510.0 162.8 509.8C162.5 509.6 162.1 509.4 161.6 509.1C161.1 508.9 160.5 508.5 159.8 508.1C159.2 507.7 158.5 507.2 157.6 506.7C156.8 506.2 155.8 505.7 154.7 505.0C153.5 504.3 152.2 503.5 150.7 502.6C149.2 501.7 147.6 500.8 145.7 499.6C143.9 498.4 141.8 497.1 139.5 495.4C137.2 493.6 134.9 492.0 132.0 489.2C129.1 486.4 125.7 483.1 121.9 478.4C118.1 473.7 113.9 468.4 109.0 460.9C104.2 453.4 98.9 444.6 92.8 433.2C86.8 421.7 79.6 408.5 72.8 392.1C66.0 375.8 58.8 356.5 52.1 335.2C45.5 313.8 38.2 288.6 32.7 264.1C27.2 239.6 22.1 212.6 19.2 188.2C16.3 163.9 14.5 139.2 15.4 117.9C16.2 96.6 19.0 76.1 24.2 60.3C29.4 44.5 37.5 31.4 46.4 23.0C55.3 14.6 66.6 11.3 77.8 9.9C88.9 8.4 101.2 11.6 113.1 14.4C125.0 17.2 137.4 22.2 149.0 26.7C160.6 31.2 171.8 36.2 182.9 41.4C193.9 46.6 204.6 52.1 215.4 57.9C226.2 63.6 236.8 69.7 247.5 76.0C258.1 82.2 268.6 88.7 279.2 95.3C289.8 101.9 300.3 108.6 310.8 115.5C321.4 122.3 332.0 129.3 342.6 136.2C353.1 143.2 363.6 150.3 374.1 157.3C384.6 164.3 395.2 171.4 405.5 178.4C415.9 185.4 426.2 192.4 436.3 199.2C446.4 206.1 456.4 212.9 466.1 219.5C475.9 226.1 485.5 232.7 494.8 238.9C504.0 245.2 513.1 251.3 521.7 257.2C530.3 263.0 538.6 268.7 546.3 273.9C553.9 279.1 560.9 283.8 567.6 288.4C574.3 292.9 580.7 297.3 586.4 301.1C592.1 305.0 597.3 308.4 602.0 311.6C606.7 314.8 610.9 317.7 614.7 320.3C618.5 322.9 621.7 325.1 624.8 327.1C627.8 329.2 630.4 330.9 632.8 332.6C635.3 334.2 636.6 335.1 639.3 337.0C642.0 338.8 646.5 341.9 649.1 343.7C651.8 345.5 653.7 346.8 655.4 347.9C657.0 349.0 657.8 349.5 658.9 350.3C660.0 351.0 661.2 351.9 661.9 352.3C662.6 352.8 662.9 353.0 663.1 353.1Z"/></clipPath><clipPath id="clTri"><path d="M614.6 320.1 L246.8 96.7 L144.8 477.1Z"/></clipPath><linearGradient id="D1" gradientUnits="userSpaceOnUse" x1="15" x2="663" y1="0" y2="0"><stop offset="0.000" stop-color="#009901"/><stop offset="0.067" stop-color="#009900"/><stop offset="0.133" stop-color="#009900"/><stop offset="0.200" stop-color="#009900"/><stop offset="0.267" stop-color="#009900"/><stop offset="0.333" stop-color="#009900"/><stop offset="0.400" stop-color="#009900"/><stop offset="0.467" stop-color="#009900"/><stop offset="0.533" stop-color="#129900"/><stop offset="0.600" stop-color="#2d9900"/><stop offset="0.667" stop-color="#499900"/><stop offset="0.733" stop-color="#669900"/><stop offset="0.800" stop-color="#869900"/><stop offset="0.867" stop-color="#998b00"/><stop offset="0.933" stop-color="#997200"/><stop offset="1.000" stop-color="#995f00"/></linearGradient><linearGradient id="D2" gradientUnits="userSpaceOnUse" x1="15" x2="663" y1="0" y2="0"><stop offset="0.000" stop-color="#009902"/><stop offset="0.067" stop-color="#009900"/><stop offset="0.133" stop-color="#009900"/><stop offset="0.200" stop-color="#009900"/><stop offset="0.267" stop-color="#009900"/><stop offset="0.333" stop-color="#009900"/><stop offset="0.400" stop-color="#009900"/><stop offset="0.467" stop-color="#009900"/><stop offset="0.533" stop-color="#139900"/><stop offset="0.600" stop-color="#2e9900"/><stop offset="0.667" stop-color="#4b9900"/><stop offset="0.733" stop-color="#699900"/><stop offset="0.800" stop-color="#889900"/><stop offset="0.867" stop-color="#998800"/><stop offset="0.933" stop-color="#997000"/><stop offset="1.000" stop-color="#995d00"/></linearGradient><linearGradient id="D3" gradientUnits="userSpaceOnUse" x1="15" x2="663" y1="0" y2="0"><stop offset="0.000" stop-color="#009903"/><stop offset="0.067" stop-color="#009900"/><stop offset="0.133" stop-color="#009900"/><stop offset="0.200" stop-color="#009900"/><stop offset="0.267" stop-color="#009900"/><stop offset="0.333" stop-color="#009900"/><stop offset="0.400" stop-color="#009900"/><stop offset="0.467" stop-color="#009900"/><stop offset="0.533" stop-color="#149900"/><stop offset="0.600" stop-color="#309900"/><stop offset="0.667" stop-color="#4c9900"/><stop offset="0.733" stop-color="#6a9900"/><stop offset="0.800" stop-color="#8b9900"/><stop offset="0.867" stop-color="#998600"/><stop offset="0.933" stop-color="#996d00"/><stop offset="1.000" stop-color="#995b00"/></linearGradient><linearGradient id="D4" gradientUnits="userSpaceOnUse" x1="15" x2="663" y1="0" y2="0"><stop offset="0.000" stop-color="#009904"/><stop offset="0.067" stop-color="#009900"/><stop offset="0.133" stop-color="#009900"/><stop offset="0.200" stop-color="#009900"/><stop offset="0.267" stop-color="#009900"/><stop offset="0.333" stop-color="#009900"/><stop offset="0.400" stop-color="#009900"/><stop offset="0.467" stop-color="#009900"/><stop offset="0.533" stop-color="#159900"/><stop offset="0.600" stop-color="#319900"/><stop offset="0.667" stop-color="#4e9900"/><stop offset="0.733" stop-color="#6d9900"/><stop offset="0.800" stop-color="#8e9900"/><stop offset="0.867" stop-color="#998400"/><stop offset="0.933" stop-color="#996c00"/><stop offset="1.000" stop-color="#995a00"/></linearGradient><linearGradient id="D5" gradientUnits="userSpaceOnUse" x1="15" x2="663" y1="0" y2="0"><stop offset="0.000" stop-color="#009905"/><stop offset="0.067" stop-color="#009900"/><stop offset="0.133" stop-color="#009900"/><stop offset="0.200" stop-color="#009900"/><stop offset="0.267" stop-color="#009900"/><stop offset="0.333" stop-color="#009900"/><stop offset="0.400" stop-color="#009900"/><stop offset="0.467" stop-color="#009900"/><stop offset="0.533" stop-color="#169900"/><stop offset="0.600" stop-color="#339900"/><stop offset="0.667" stop-color="#509900"/><stop offset="0.733" stop-color="#6f9900"/><stop offset="0.800" stop-color="#909900"/><stop offset="0.867" stop-color="#998100"/><stop offset="0.933" stop-color="#996a00"/><stop offset="1.000" stop-color="#995800"/></linearGradient><linearGradient id="D6" gradientUnits="userSpaceOnUse" x1="15" x2="663" y1="0" y2="0"><stop offset="0.000" stop-color="#009906"/><stop offset="0.067" stop-color="#009900"/><stop offset="0.133" stop-color="#009900"/><stop offset="0.200" stop-color="#009900"/><stop offset="0.267" stop-color="#009900"/><stop offset="0.333" stop-color="#009900"/><stop offset="0.400" stop-color="#009900"/><stop offset="0.467" stop-color="#009900"/><stop offset="0.533" stop-color="#189900"/><stop offset="0.600" stop-color="#349900"/><stop offset="0.667" stop-color="#529900"/><stop offset="0.733" stop-color="#729900"/><stop offset="0.800" stop-color="#939900"/><stop offset="0.867" stop-color="#997f00"/><stop offset="0.933" stop-color="#996800"/><stop offset="1.000" stop-color="#995700"/></linearGradient><linearGradient id="D7" gradientUnits="userSpaceOnUse" x1="15" x2="663" y1="0" y2="0"><stop offset="0.000" stop-color="#009907"/><stop offset="0.067" stop-color="#009901"/><stop offset="0.133" stop-color="#009900"/><stop offset="0.200" stop-color="#009900"/><stop offset="0.267" stop-color="#009900"/><stop offset="0.333" stop-color="#009900"/><stop offset="0.400" stop-color="#009900"/><stop offset="0.467" stop-color="#009900"/><stop offset="0.533" stop-color="#199900"/><stop offset="0.600" stop-color="#369900"/><stop offset="0.667" stop-color="#549900"/><stop offset="0.733" stop-color="#739900"/><stop offset="0.800" stop-color="#969900"/><stop offset="0.867" stop-color="#997c00"/><stop offset="0.933" stop-color="#996600"/><stop offset="1.000" stop-color="#995500"/></linearGradient><linearGradient id="D8" gradientUnits="userSpaceOnUse" x1="15" x2="663" y1="0" y2="0"><stop offset="0.000" stop-color="#009909"/><stop offset="0.067" stop-color="#009902"/><stop offset="0.133" stop-color="#009900"/><stop offset="0.200" stop-color="#009900"/><stop offset="0.267" stop-color="#009900"/><stop offset="0.333" stop-color="#009900"/><stop offset="0.400" stop-color="#009900"/><stop offset="0.467" stop-color="#009900"/><stop offset="0.533" stop-color="#1b9900"/><stop offset="0.600" stop-color="#379900"/><stop offset="0.667" stop-color="#569900"/><stop offset="0.733" stop-color="#769900"/><stop offset="0.800" stop-color="#999800"/><stop offset="0.867" stop-color="#997a00"/><stop offset="0.933" stop-color="#996400"/><stop offset="1.000" stop-color="#995300"/></linearGradient><linearGradient id="D9" gradientUnits="userSpaceOnUse" x1="15" x2="663" y1="0" y2="0"><stop offset="0.000" stop-color="#00990a"/><stop offset="0.067" stop-color="#009903"/><stop offset="0.133" stop-color="#009900"/><stop offset="0.200" stop-color="#009900"/><stop offset="0.267" stop-color="#009900"/><stop offset="0.333" stop-color="#009900"/><stop offset="0.400" stop-color="#009900"/><stop offset="0.467" stop-color="#009900"/><stop offset="0.533" stop-color="#1c9900"/><stop offset="0.600" stop-color="#399900"/><stop offset="0.667" stop-color="#589900"/><stop offset="0.733" stop-color="#799900"/><stop offset="0.800" stop-color="#999500"/><stop offset="0.867" stop-color="#997800"/><stop offset="0.933" stop-color="#996200"/><stop offset="1.000" stop-color="#995200"/></linearGradient><linearGradient id="D10" gradientUnits="userSpaceOnUse" x1="15" x2="663" y1="0" y2="0"><stop offset="0.000" stop-color="#00990b"/><stop offset="0.067" stop-color="#009904"/><stop offset="0.133" stop-color="#009900"/><stop offset="0.200" stop-color="#009900"/><stop offset="0.267" stop-color="#009900"/><stop offset="0.333" stop-color="#009900"/><stop offset="0.400" stop-color="#009900"/><stop offset="0.467" stop-color="#009900"/><stop offset="0.533" stop-color="#1d9900"/><stop offset="0.600" stop-color="#3b9900"/><stop offset="0.667" stop-color="#5a9900"/><stop offset="0.733" stop-color="#7b9900"/><stop offset="0.800" stop-color="#999300"/><stop offset="0.867" stop-color="#997500"/><stop offset="0.933" stop-color="#996000"/><stop offset="1.000" stop-color="#995000"/></linearGradient><linearGradient id="D11" gradientUnits="userSpaceOnUse" x1="15" x2="663" y1="0" y2="0"><stop offset="0.000" stop-color="#00990c"/><stop offset="0.067" stop-color="#009906"/><stop offset="0.133" stop-color="#009900"/><stop offset="0.200" stop-color="#009900"/><stop offset="0.267" stop-color="#009900"/><stop offset="0.333" stop-color="#009900"/><stop offset="0.400" stop-color="#009900"/><stop offset="0.467" stop-color="#009900"/><stop offset="0.533" stop-color="#1e9900"/><stop offset="0.600" stop-color="#3d9900"/><stop offset="0.667" stop-color="#5c9900"/><stop offset="0.733" stop-color="#7e9900"/><stop offset="0.800" stop-color="#999000"/><stop offset="0.867" stop-color="#997300"/><stop offset="0.933" stop-color="#995e00"/><stop offset="1.000" stop-color="#994e00"/></linearGradient><linearGradient id="D12" gradientUnits="userSpaceOnUse" x1="15" x2="663" y1="0" y2="0"><stop offset="0.000" stop-color="#00990d"/><stop offset="0.067" stop-color="#009907"/><stop offset="0.133" stop-color="#009900"/><stop offset="0.200" stop-color="#009900"/><stop offset="0.267" stop-color="#009900"/><stop offset="0.333" stop-color="#009900"/><stop offset="0.400" stop-color="#009900"/><stop offset="0.467" stop-color="#019900"/><stop offset="0.533" stop-color="#209900"/><stop offset="0.600" stop-color="#3e9900"/><stop offset="0.667" stop-color="#5e9900"/><stop offset="0.733" stop-color="#819900"/><stop offset="0.800" stop-color="#998d00"/><stop offset="0.867" stop-color="#997100"/><stop offset="0.933" stop-color="#995d00"/><stop offset="1.000" stop-color="#994d00"/></linearGradient><linearGradient id="D13" gradientUnits="userSpaceOnUse" x1="15" x2="663" y1="0" y2="0"><stop offset="0.000" stop-color="#00990e"/><stop offset="0.067" stop-color="#009908"/><stop offset="0.133" stop-color="#009901"/><stop offset="0.200" stop-color="#009900"/><stop offset="0.267" stop-color="#009900"/><stop offset="0.333" stop-color="#009900"/><stop offset="0.400" stop-color="#009900"/><stop offset="0.467" stop-color="#029900"/><stop offset="0.533" stop-color="#219900"/><stop offset="0.600" stop-color="#409900"/><stop offset="0.667" stop-color="#609900"/><stop offset="0.733" stop-color="#839900"/><stop offset="0.800" stop-color="#998a00"/><stop offset="0.867" stop-color="#996f00"/><stop offset="0.933" stop-color="#995b00"/><stop offset="1.000" stop-color="#994b00"/></linearGradient><linearGradient id="D14" gradientUnits="userSpaceOnUse" x1="15" x2="663" y1="0" y2="0"><stop offset="0.000" stop-color="#00990f"/><stop offset="0.067" stop-color="#009909"/><stop offset="0.133" stop-color="#009903"/><stop offset="0.200" stop-color="#009900"/><stop offset="0.267" stop-color="#009900"/><stop offset="0.333" stop-color="#009900"/><stop offset="0.400" stop-color="#009900"/><stop offset="0.467" stop-color="#039900"/><stop offset="0.533" stop-color="#239900"/><stop offset="0.600" stop-color="#429900"/><stop offset="0.667" stop-color="#639900"/><stop offset="0.733" stop-color="#869900"/><stop offset="0.800" stop-color="#998700"/><stop offset="0.867" stop-color="#996c00"/><stop offset="0.933" stop-color="#995900"/><stop offset="1.000" stop-color="#994900"/></linearGradient><linearGradient id="D15" gradientUnits="userSpaceOnUse" x1="15" x2="663" y1="0" y2="0"><stop offset="0.000" stop-color="#009910"/><stop offset="0.067" stop-color="#00990a"/><stop offset="0.133" stop-color="#009904"/><stop offset="0.200" stop-color="#009900"/><stop offset="0.267" stop-color="#009900"/><stop offset="0.333" stop-color="#009900"/><stop offset="0.400" stop-color="#009900"/><stop offset="0.467" stop-color="#059900"/><stop offset="0.533" stop-color="#249900"/><stop offset="0.600" stop-color="#449900"/><stop offset="0.667" stop-color="#659900"/><stop offset="0.733" stop-color="#899900"/><stop offset="0.800" stop-color="#998400"/><stop offset="0.867" stop-color="#996a00"/><stop offset="0.933" stop-color="#995700"/><stop offset="1.000" stop-color="#994800"/></linearGradient><linearGradient id="D16" gradientUnits="userSpaceOnUse" x1="15" x2="663" y1="0" y2="0"><stop offset="0.000" stop-color="#009912"/><stop offset="0.067" stop-color="#00990c"/><stop offset="0.133" stop-color="#009905"/><stop offset="0.200" stop-color="#009900"/><stop offset="0.267" stop-color="#009900"/><stop offset="0.333" stop-color="#009900"/><stop offset="0.400" stop-color="#009900"/><stop offset="0.467" stop-color="#069900"/><stop offset="0.533" stop-color="#269900"/><stop offset="0.600" stop-color="#469900"/><stop offset="0.667" stop-color="#679900"/><stop offset="0.733" stop-color="#8c9900"/><stop offset="0.800" stop-color="#998200"/><stop offset="0.867" stop-color="#996800"/><stop offset="0.933" stop-color="#995500"/><stop offset="1.000" stop-color="#994600"/></linearGradient><linearGradient id="D17" gradientUnits="userSpaceOnUse" x1="15" x2="663" y1="0" y2="0"><stop offset="0.000" stop-color="#009913"/><stop offset="0.067" stop-color="#00990d"/><stop offset="0.133" stop-color="#009906"/><stop offset="0.200" stop-color="#009900"/><stop offset="0.267" stop-color="#009900"/><stop offset="0.333" stop-color="#009900"/><stop offset="0.400" stop-color="#009900"/><stop offset="0.467" stop-color="#079900"/><stop offset="0.533" stop-color="#279900"/><stop offset="0.600" stop-color="#489900"/><stop offset="0.667" stop-color="#6a9900"/><stop offset="0.733" stop-color="#8f9900"/><stop offset="0.800" stop-color="#997f00"/><stop offset="0.867" stop-color="#996600"/><stop offset="0.933" stop-color="#995400"/><stop offset="1.000" stop-color="#994500"/></linearGradient><linearGradient id="D18" gradientUnits="userSpaceOnUse" x1="15" x2="663" y1="0" y2="0"><stop offset="0.000" stop-color="#009914"/><stop offset="0.067" stop-color="#00990e"/><stop offset="0.133" stop-color="#009908"/><stop offset="0.200" stop-color="#009900"/><stop offset="0.267" stop-color="#009900"/><stop offset="0.333" stop-color="#009900"/><stop offset="0.400" stop-color="#009900"/><stop offset="0.467" stop-color="#099900"/><stop offset="0.533" stop-color="#299900"/><stop offset="0.600" stop-color="#499900"/><stop offset="0.667" stop-color="#6c9900"/><stop offset="0.733" stop-color="#929900"/><stop offset="0.800" stop-color="#997c00"/><stop offset="0.867" stop-color="#996400"/><stop offset="0.933" stop-color="#995200"/><stop offset="1.000" stop-color="#994300"/></linearGradient><linearGradient id="D19" gradientUnits="userSpaceOnUse" x1="15" x2="663" y1="0" y2="0"><stop offset="0.000" stop-color="#009915"/><stop offset="0.067" stop-color="#009910"/><stop offset="0.133" stop-color="#009909"/><stop offset="0.200" stop-color="#009901"/><stop offset="0.267" stop-color="#009900"/><stop offset="0.333" stop-color="#009900"/><stop offset="0.400" stop-color="#009900"/><stop offset="0.467" stop-color="#0a9900"/><stop offset="0.533" stop-color="#2b9900"/><stop offset="0.600" stop-color="#4c9900"/><stop offset="0.667" stop-color="#6f9900"/><stop offset="0.733" stop-color="#959900"/><stop offset="0.800" stop-color="#997900"/><stop offset="0.867" stop-color="#996100"/><stop offset="0.933" stop-color="#995000"/><stop offset="1.000" stop-color="#994200"/></linearGradient><linearGradient id="D20" gradientUnits="userSpaceOnUse" x1="15" x2="663" y1="0" y2="0"><stop offset="0.000" stop-color="#009916"/><stop offset="0.067" stop-color="#009911"/><stop offset="0.133" stop-color="#00990a"/><stop offset="0.200" stop-color="#009903"/><stop offset="0.267" stop-color="#009900"/><stop offset="0.333" stop-color="#009900"/><stop offset="0.400" stop-color="#009900"/><stop offset="0.467" stop-color="#0c9900"/><stop offset="0.533" stop-color="#2c9900"/><stop offset="0.600" stop-color="#4e9900"/><stop offset="0.667" stop-color="#729900"/><stop offset="0.733" stop-color="#999900"/><stop offset="0.800" stop-color="#997700"/><stop offset="0.867" stop-color="#996000"/><stop offset="0.933" stop-color="#994e00"/><stop offset="1.000" stop-color="#994000"/></linearGradient><linearGradient id="D21" gradientUnits="userSpaceOnUse" x1="15" x2="663" y1="0" y2="0"><stop offset="0.000" stop-color="#009918"/><stop offset="0.067" stop-color="#009912"/><stop offset="0.133" stop-color="#00990c"/><stop offset="0.200" stop-color="#009904"/><stop offset="0.267" stop-color="#009900"/><stop offset="0.333" stop-color="#009900"/><stop offset="0.400" stop-color="#009900"/><stop offset="0.467" stop-color="#0d9900"/><stop offset="0.533" stop-color="#2e9900"/><stop offset="0.600" stop-color="#509900"/><stop offset="0.667" stop-color="#749900"/><stop offset="0.733" stop-color="#999600"/><stop offset="0.800" stop-color="#997500"/><stop offset="0.867" stop-color="#995e00"/><stop offset="0.933" stop-color="#994c00"/><stop offset="1.000" stop-color="#993f00"/></linearGradient><linearGradient id="D22" gradientUnits="userSpaceOnUse" x1="15" x2="663" y1="0" y2="0"><stop offset="0.000" stop-color="#009919"/><stop offset="0.067" stop-color="#009913"/><stop offset="0.133" stop-color="#00990d"/><stop offset="0.200" stop-color="#009906"/><stop offset="0.267" stop-color="#009900"/><stop offset="0.333" stop-color="#009900"/><stop offset="0.400" stop-color="#009900"/><stop offset="0.467" stop-color="#0f9900"/><stop offset="0.533" stop-color="#309900"/><stop offset="0.600" stop-color="#529900"/><stop offset="0.667" stop-color="#779900"/><stop offset="0.733" stop-color="#999200"/><stop offset="0.800" stop-color="#997200"/><stop offset="0.867" stop-color="#995b00"/><stop offset="0.933" stop-color="#994b00"/><stop offset="1.000" stop-color="#993d00"/></linearGradient><linearGradient id="D23" gradientUnits="userSpaceOnUse" x1="15" x2="663" y1="0" y2="0"><stop offset="0.000" stop-color="#00991b"/><stop offset="0.067" stop-color="#009915"/><stop offset="0.133" stop-color="#00990f"/><stop offset="0.200" stop-color="#009907"/><stop offset="0.267" stop-color="#009900"/><stop offset="0.333" stop-color="#009900"/><stop offset="0.400" stop-color="#009900"/><stop offset="0.467" stop-color="#109900"/><stop offset="0.533" stop-color="#319900"/><stop offset="0.600" stop-color="#549900"/><stop offset="0.667" stop-color="#7a9900"/><stop offset="0.733" stop-color="#998f00"/><stop offset="0.800" stop-color="#997000"/><stop offset="0.867" stop-color="#995a00"/><stop offset="0.933" stop-color="#994900"/><stop offset="1.000" stop-color="#993c00"/></linearGradient><linearGradient id="D24" gradientUnits="userSpaceOnUse" x1="15" x2="663" y1="0" y2="0"><stop offset="0.000" stop-color="#00991c"/><stop offset="0.067" stop-color="#009916"/><stop offset="0.133" stop-color="#009910"/><stop offset="0.200" stop-color="#009909"/><stop offset="0.267" stop-color="#009900"/><stop offset="0.333" stop-color="#009900"/><stop offset="0.400" stop-color="#009900"/><stop offset="0.467" stop-color="#119900"/><stop offset="0.533" stop-color="#339900"/><stop offset="0.600" stop-color="#579900"/><stop offset="0.667" stop-color="#7d9900"/><stop offset="0.733" stop-color="#998b00"/><stop offset="0.800" stop-color="#996d00"/><stop offset="0.867" stop-color="#995800"/><stop offset="0.933" stop-color="#994800"/><stop offset="1.000" stop-color="#993b00"/></linearGradient><linearGradient id="D25" gradientUnits="userSpaceOnUse" x1="15" x2="663" y1="0" y2="0"><stop offset="0.000" stop-color="#00991d"/><stop offset="0.067" stop-color="#009918"/><stop offset="0.133" stop-color="#009911"/><stop offset="0.200" stop-color="#00990a"/><stop offset="0.267" stop-color="#009902"/><stop offset="0.333" stop-color="#009900"/><stop offset="0.400" stop-color="#009900"/><stop offset="0.467" stop-color="#139900"/><stop offset="0.533" stop-color="#359900"/><stop offset="0.600" stop-color="#599900"/><stop offset="0.667" stop-color="#809900"/><stop offset="0.733" stop-color="#998800"/><stop offset="0.800" stop-color="#996a00"/><stop offset="0.867" stop-color="#995500"/><stop offset="0.933" stop-color="#994600"/><stop offset="1.000" stop-color="#993900"/></linearGradient><linearGradient id="D26" gradientUnits="userSpaceOnUse" x1="15" x2="663" y1="0" y2="0"><stop offset="0.000" stop-color="#00991e"/><stop offset="0.067" stop-color="#009919"/><stop offset="0.133" stop-color="#009913"/><stop offset="0.200" stop-color="#00990c"/><stop offset="0.267" stop-color="#009904"/><stop offset="0.333" stop-color="#009900"/><stop offset="0.400" stop-color="#009900"/><stop offset="0.467" stop-color="#149900"/><stop offset="0.533" stop-color="#379900"/><stop offset="0.600" stop-color="#5b9900"/><stop offset="0.667" stop-color="#839900"/><stop offset="0.733" stop-color="#998500"/><stop offset="0.800" stop-color="#996800"/><stop offset="0.867" stop-color="#995400"/><stop offset="0.933" stop-color="#994400"/><stop offset="1.000" stop-color="#993800"/></linearGradient><linearGradient id="D27" gradientUnits="userSpaceOnUse" x1="15" x2="663" y1="0" y2="0"><stop offset="0.000" stop-color="#00991f"/><stop offset="0.067" stop-color="#00991a"/><stop offset="0.133" stop-color="#009914"/><stop offset="0.200" stop-color="#00990d"/><stop offset="0.267" stop-color="#009905"/><stop offset="0.333" stop-color="#009900"/><stop offset="0.400" stop-color="#009900"/><stop offset="0.467" stop-color="#169900"/><stop offset="0.533" stop-color="#399900"/><stop offset="0.600" stop-color="#5e9900"/><stop offset="0.667" stop-color="#869900"/><stop offset="0.733" stop-color="#998200"/><stop offset="0.800" stop-color="#996600"/><stop offset="0.867" stop-color="#995200"/><stop offset="0.933" stop-color="#994200"/><stop offset="1.000" stop-color="#993600"/></linearGradient><linearGradient id="D28" gradientUnits="userSpaceOnUse" x1="15" x2="663" y1="0" y2="0"><stop offset="0.000" stop-color="#009921"/><stop offset="0.067" stop-color="#00991c"/><stop offset="0.133" stop-color="#009916"/><stop offset="0.200" stop-color="#00990f"/><stop offset="0.267" stop-color="#009907"/><stop offset="0.333" stop-color="#009900"/><stop offset="0.400" stop-color="#009900"/><stop offset="0.467" stop-color="#189900"/><stop offset="0.533" stop-color="#3b9900"/><stop offset="0.600" stop-color="#619900"/><stop offset="0.667" stop-color="#8a9900"/><stop offset="0.733" stop-color="#997f00"/><stop offset="0.800" stop-color="#996400"/><stop offset="0.867" stop-color="#995000"/><stop offset="0.933" stop-color="#994100"/><stop offset="1.000" stop-color="#993500"/></linearGradient><linearGradient id="D29" gradientUnits="userSpaceOnUse" x1="15" x2="663" y1="0" y2="0"><stop offset="0.000" stop-color="#009922"/><stop offset="0.067" stop-color="#00991d"/><stop offset="0.133" stop-color="#009917"/><stop offset="0.200" stop-color="#009910"/><stop offset="0.267" stop-color="#009909"/><stop offset="0.333" stop-color="#009900"/><stop offset="0.400" stop-color="#009900"/><stop offset="0.467" stop-color="#199900"/><stop offset="0.533" stop-color="#3d9900"/><stop offset="0.600" stop-color="#639900"/><stop offset="0.667" stop-color="#8d9900"/><stop offset="0.733" stop-color="#997c00"/><stop offset="0.800" stop-color="#996100"/><stop offset="0.867" stop-color="#994e00"/><stop offset="0.933" stop-color="#993f00"/><stop offset="1.000" stop-color="#993400"/></linearGradient><linearGradient id="D30" gradientUnits="userSpaceOnUse" x1="15" x2="663" y1="0" y2="0"><stop offset="0.000" stop-color="#009924"/><stop offset="0.067" stop-color="#00991e"/><stop offset="0.133" stop-color="#009918"/><stop offset="0.200" stop-color="#009912"/><stop offset="0.267" stop-color="#00990a"/><stop offset="0.333" stop-color="#009901"/><stop offset="0.400" stop-color="#009900"/><stop offset="0.467" stop-color="#1b9900"/><stop offset="0.533" stop-color="#3f9900"/><stop offset="0.600" stop-color="#669900"/><stop offset="0.667" stop-color="#919900"/><stop offset="0.733" stop-color="#997900"/><stop offset="0.800" stop-color="#995f00"/><stop offset="0.867" stop-color="#994c00"/><stop offset="0.933" stop-color="#993d00"/><stop offset="1.000" stop-color="#993200"/></linearGradient><linearGradient id="D31" gradientUnits="userSpaceOnUse" x1="15" x2="663" y1="0" y2="0"><stop offset="0.000" stop-color="#009925"/><stop offset="0.067" stop-color="#009920"/><stop offset="0.133" stop-color="#00991a"/><stop offset="0.200" stop-color="#009913"/><stop offset="0.267" stop-color="#00990c"/><stop offset="0.333" stop-color="#009903"/><stop offset="0.400" stop-color="#009900"/><stop offset="0.467" stop-color="#1c9900"/><stop offset="0.533" stop-color="#429900"/><stop offset="0.600" stop-color="#699900"/><stop offset="0.667" stop-color="#949900"/><stop offset="0.733" stop-color="#997600"/><stop offset="0.800" stop-color="#995d00"/><stop offset="0.867" stop-color="#994a00"/><stop offset="0.933" stop-color="#993c00"/><stop offset="1.000" stop-color="#993100"/></linearGradient><linearGradient id="D32" gradientUnits="userSpaceOnUse" x1="15" x2="663" y1="0" y2="0"><stop offset="0.000" stop-color="#009927"/><stop offset="0.067" stop-color="#009921"/><stop offset="0.133" stop-color="#00991c"/><stop offset="0.200" stop-color="#009915"/><stop offset="0.267" stop-color="#00990d"/><stop offset="0.333" stop-color="#009904"/><stop offset="0.400" stop-color="#009900"/><stop offset="0.467" stop-color="#1e9900"/><stop offset="0.533" stop-color="#439900"/><stop offset="0.600" stop-color="#6c9900"/><stop offset="0.667" stop-color="#989900"/><stop offset="0.733" stop-color="#997400"/><stop offset="0.800" stop-color="#995a00"/><stop offset="0.867" stop-color="#994800"/><stop offset="0.933" stop-color="#993a00"/><stop offset="1.000" stop-color="#993000"/></linearGradient><linearGradient id="D33" gradientUnits="userSpaceOnUse" x1="15" x2="663" y1="0" y2="0"><stop offset="0.000" stop-color="#009928"/><stop offset="0.067" stop-color="#009923"/><stop offset="0.133" stop-color="#00991d"/><stop offset="0.200" stop-color="#009916"/><stop offset="0.267" stop-color="#00990f"/><stop offset="0.333" stop-color="#009906"/><stop offset="0.400" stop-color="#009900"/><stop offset="0.467" stop-color="#209900"/><stop offset="0.533" stop-color="#469900"/><stop offset="0.600" stop-color="#6f9900"/><stop offset="0.667" stop-color="#999600"/><stop offset="0.733" stop-color="#997100"/><stop offset="0.800" stop-color="#995800"/><stop offset="0.867" stop-color="#994600"/><stop offset="0.933" stop-color="#993900"/><stop offset="1.000" stop-color="#992e00"/></linearGradient><linearGradient id="D34" gradientUnits="userSpaceOnUse" x1="15" x2="663" y1="0" y2="0"><stop offset="0.000" stop-color="#00992a"/><stop offset="0.067" stop-color="#009925"/><stop offset="0.133" stop-color="#00991f"/><stop offset="0.200" stop-color="#009918"/><stop offset="0.267" stop-color="#009910"/><stop offset="0.333" stop-color="#009908"/><stop offset="0.400" stop-color="#009900"/><stop offset="0.467" stop-color="#229900"/><stop offset="0.533" stop-color="#489900"/><stop offset="0.600" stop-color="#729900"/><stop offset="0.667" stop-color="#999200"/><stop offset="0.733" stop-color="#996e00"/><stop offset="0.800" stop-color="#995600"/><stop offset="0.867" stop-color="#994500"/><stop offset="0.933" stop-color="#993700"/><stop offset="1.000" stop-color="#992d00"/></linearGradient><linearGradient id="D35" gradientUnits="userSpaceOnUse" x1="15" x2="663" y1="0" y2="0"><stop offset="0.000" stop-color="#00992b"/><stop offset="0.067" stop-color="#009926"/><stop offset="0.133" stop-color="#009921"/><stop offset="0.200" stop-color="#00991a"/><stop offset="0.267" stop-color="#009912"/><stop offset="0.333" stop-color="#00990a"/><stop offset="0.400" stop-color="#009900"/><stop offset="0.467" stop-color="#249900"/><stop offset="0.533" stop-color="#4b9900"/><stop offset="0.600" stop-color="#759900"/><stop offset="0.667" stop-color="#998e00"/><stop offset="0.733" stop-color="#996c00"/><stop offset="0.800" stop-color="#995400"/><stop offset="0.867" stop-color="#994300"/><stop offset="0.933" stop-color="#993600"/><stop offset="1.000" stop-color="#992b00"/></linearGradient><linearGradient id="D36" gradientUnits="userSpaceOnUse" x1="15" x2="663" y1="0" y2="0"><stop offset="0.000" stop-color="#00992d"/><stop offset="0.067" stop-color="#009928"/><stop offset="0.133" stop-color="#009922"/><stop offset="0.200" stop-color="#00991b"/><stop offset="0.267" stop-color="#009914"/><stop offset="0.333" stop-color="#00990c"/><stop offset="0.400" stop-color="#009901"/><stop offset="0.467" stop-color="#259900"/><stop offset="0.533" stop-color="#4d9900"/><stop offset="0.600" stop-color="#789900"/><stop offset="0.667" stop-color="#998a00"/><stop offset="0.733" stop-color="#996900"/><stop offset="0.800" stop-color="#995200"/><stop offset="0.867" stop-color="#994100"/><stop offset="0.933" stop-color="#993400"/><stop offset="1.000" stop-color="#992a00"/></linearGradient><linearGradient id="D37" gradientUnits="userSpaceOnUse" x1="15" x2="663" y1="0" y2="0"><stop offset="0.000" stop-color="#00992e"/><stop offset="0.067" stop-color="#00992a"/><stop offset="0.133" stop-color="#009924"/><stop offset="0.200" stop-color="#00991d"/><stop offset="0.267" stop-color="#009916"/><stop offset="0.333" stop-color="#00990d"/><stop offset="0.400" stop-color="#009903"/><stop offset="0.467" stop-color="#279900"/><stop offset="0.533" stop-color="#509900"/><stop offset="0.600" stop-color="#7c9900"/><stop offset="0.667" stop-color="#998700"/><stop offset="0.733" stop-color="#996600"/><stop offset="0.800" stop-color="#994f00"/><stop offset="0.867" stop-color="#993f00"/><stop offset="0.933" stop-color="#993300"/><stop offset="1.000" stop-color="#992900"/></linearGradient><linearGradient id="D38" gradientUnits="userSpaceOnUse" x1="15" x2="663" y1="0" y2="0"><stop offset="0.000" stop-color="#009930"/><stop offset="0.067" stop-color="#00992b"/><stop offset="0.133" stop-color="#009925"/><stop offset="0.200" stop-color="#00991f"/><stop offset="0.267" stop-color="#009918"/><stop offset="0.333" stop-color="#00990f"/><stop offset="0.400" stop-color="#009906"/><stop offset="0.467" stop-color="#299900"/><stop offset="0.533" stop-color="#529900"/><stop offset="0.600" stop-color="#7f9900"/><stop offset="0.667" stop-color="#998400"/><stop offset="0.733" stop-color="#996300"/><stop offset="0.800" stop-color="#994e00"/><stop offset="0.867" stop-color="#993d00"/><stop offset="0.933" stop-color="#993100"/><stop offset="1.000" stop-color="#992700"/></linearGradient><linearGradient id="D39" gradientUnits="userSpaceOnUse" x1="15" x2="663" y1="0" y2="0"><stop offset="0.000" stop-color="#009932"/><stop offset="0.067" stop-color="#00992d"/><stop offset="0.133" stop-color="#009927"/><stop offset="0.200" stop-color="#009921"/><stop offset="0.267" stop-color="#009919"/><stop offset="0.333" stop-color="#009911"/><stop offset="0.400" stop-color="#029907"/><stop offset="0.467" stop-color="#2b9900"/><stop offset="0.533" stop-color="#559900"/><stop offset="0.600" stop-color="#839900"/><stop offset="0.667" stop-color="#998000"/><stop offset="0.733" stop-color="#996100"/><stop offset="0.800" stop-color="#994b00"/><stop offset="0.867" stop-color="#993c00"/><stop offset="0.933" stop-color="#993000"/><stop offset="1.000" stop-color="#992600"/></linearGradient><linearGradient id="D40" gradientUnits="userSpaceOnUse" x1="15" x2="663" y1="0" y2="0"><stop offset="0.000" stop-color="#009934"/><stop offset="0.067" stop-color="#00992e"/><stop offset="0.133" stop-color="#009929"/><stop offset="0.200" stop-color="#009922"/><stop offset="0.267" stop-color="#00991b"/><stop offset="0.333" stop-color="#009913"/><stop offset="0.400" stop-color="#049909"/><stop offset="0.467" stop-color="#2d9900"/><stop offset="0.533" stop-color="#589900"/><stop offset="0.600" stop-color="#879900"/><stop offset="0.667" stop-color="#997c00"/><stop offset="0.733" stop-color="#995e00"/><stop offset="0.800" stop-color="#994900"/><stop offset="0.867" stop-color="#993a00"/><stop offset="0.933" stop-color="#992e00"/><stop offset="1.000" stop-color="#992500"/></linearGradient><linearGradient id="D41" gradientUnits="userSpaceOnUse" x1="15" x2="663" y1="0" y2="0"><stop offset="0.000" stop-color="#009936"/><stop offset="0.067" stop-color="#009930"/><stop offset="0.133" stop-color="#00992b"/><stop offset="0.200" stop-color="#009924"/><stop offset="0.267" stop-color="#00991e"/><stop offset="0.333" stop-color="#009915"/><stop offset="0.400" stop-color="#06990c"/><stop offset="0.467" stop-color="#309900"/><stop offset="0.533" stop-color="#5b9900"/><stop offset="0.600" stop-color="#8b9900"/><stop offset="0.667" stop-color="#997900"/><stop offset="0.733" stop-color="#995b00"/><stop offset="0.800" stop-color="#994700"/><stop offset="0.867" stop-color="#993800"/><stop offset="0.933" stop-color="#992d00"/><stop offset="1.000" stop-color="#992400"/></linearGradient><linearGradient id="D42" gradientUnits="userSpaceOnUse" x1="15" x2="663" y1="0" y2="0"><stop offset="0.000" stop-color="#009937"/><stop offset="0.067" stop-color="#009932"/><stop offset="0.133" stop-color="#00992d"/><stop offset="0.200" stop-color="#009927"/><stop offset="0.267" stop-color="#00991f"/><stop offset="0.333" stop-color="#009917"/><stop offset="0.400" stop-color="#07990d"/><stop offset="0.467" stop-color="#329902"/><stop offset="0.533" stop-color="#5e9900"/><stop offset="0.600" stop-color="#8e9900"/><stop offset="0.667" stop-color="#997600"/><stop offset="0.733" stop-color="#995900"/><stop offset="0.800" stop-color="#994500"/><stop offset="0.867" stop-color="#993700"/><stop offset="0.933" stop-color="#992b00"/><stop offset="1.000" stop-color="#992200"/></linearGradient><linearGradient id="D43" gradientUnits="userSpaceOnUse" x1="15" x2="663" y1="0" y2="0"><stop offset="0.000" stop-color="#009939"/><stop offset="0.067" stop-color="#009934"/><stop offset="0.133" stop-color="#00992e"/><stop offset="0.200" stop-color="#009928"/><stop offset="0.267" stop-color="#009921"/><stop offset="0.333" stop-color="#009919"/><stop offset="0.400" stop-color="#099910"/><stop offset="0.467" stop-color="#349904"/><stop offset="0.533" stop-color="#619900"/><stop offset="0.600" stop-color="#939900"/><stop offset="0.667" stop-color="#997300"/><stop offset="0.733" stop-color="#995700"/><stop offset="0.800" stop-color="#994300"/><stop offset="0.867" stop-color="#993500"/><stop offset="0.933" stop-color="#992a00"/><stop offset="1.000" stop-color="#992100"/></linearGradient><linearGradient id="D44" gradientUnits="userSpaceOnUse" x1="15" x2="663" y1="0" y2="0"><stop offset="0.000" stop-color="#00993b"/><stop offset="0.067" stop-color="#009936"/><stop offset="0.133" stop-color="#009930"/><stop offset="0.200" stop-color="#00992a"/><stop offset="0.267" stop-color="#009924"/><stop offset="0.333" stop-color="#00991b"/><stop offset="0.400" stop-color="#0b9912"/><stop offset="0.467" stop-color="#369907"/><stop offset="0.533" stop-color="#649900"/><stop offset="0.600" stop-color="#979900"/><stop offset="0.667" stop-color="#996f00"/><stop offset="0.733" stop-color="#995400"/><stop offset="0.800" stop-color="#994100"/><stop offset="0.867" stop-color="#993300"/><stop offset="0.933" stop-color="#992800"/><stop offset="1.000" stop-color="#991f00"/></linearGradient><linearGradient id="D45" gradientUnits="userSpaceOnUse" x1="15" x2="663" y1="0" y2="0"><stop offset="0.000" stop-color="#00993d"/><stop offset="0.067" stop-color="#009938"/><stop offset="0.133" stop-color="#009933"/><stop offset="0.200" stop-color="#00992d"/><stop offset="0.267" stop-color="#009925"/><stop offset="0.333" stop-color="#00991e"/><stop offset="0.400" stop-color="#0d9914"/><stop offset="0.467" stop-color="#399909"/><stop offset="0.533" stop-color="#679900"/><stop offset="0.600" stop-color="#999600"/><stop offset="0.667" stop-color="#996c00"/><stop offset="0.733" stop-color="#995200"/><stop offset="0.800" stop-color="#993f00"/><stop offset="0.867" stop-color="#993100"/><stop offset="0.933" stop-color="#992700"/><stop offset="1.000" stop-color="#991e00"/></linearGradient><linearGradient id="D46" gradientUnits="userSpaceOnUse" x1="15" x2="663" y1="0" y2="0"><stop offset="0.000" stop-color="#00993f"/><stop offset="0.067" stop-color="#00993a"/><stop offset="0.133" stop-color="#009934"/><stop offset="0.200" stop-color="#00992e"/><stop offset="0.267" stop-color="#009928"/><stop offset="0.333" stop-color="#009920"/><stop offset="0.400" stop-color="#0f9916"/><stop offset="0.467" stop-color="#3c990c"/><stop offset="0.533" stop-color="#6b9900"/><stop offset="0.600" stop-color="#999100"/><stop offset="0.667" stop-color="#996900"/><stop offset="0.733" stop-color="#994f00"/><stop offset="0.800" stop-color="#993d00"/><stop offset="0.867" stop-color="#993000"/><stop offset="0.933" stop-color="#992500"/><stop offset="1.000" stop-color="#991d00"/></linearGradient><linearGradient id="D47" gradientUnits="userSpaceOnUse" x1="15" x2="663" y1="0" y2="0"><stop offset="0.000" stop-color="#009940"/><stop offset="0.067" stop-color="#00993c"/><stop offset="0.133" stop-color="#009936"/><stop offset="0.200" stop-color="#009931"/><stop offset="0.267" stop-color="#00992a"/><stop offset="0.333" stop-color="#009922"/><stop offset="0.400" stop-color="#109919"/><stop offset="0.467" stop-color="#3e990e"/><stop offset="0.533" stop-color="#6f9900"/><stop offset="0.600" stop-color="#998d00"/><stop offset="0.667" stop-color="#996600"/><stop offset="0.733" stop-color="#994d00"/><stop offset="0.800" stop-color="#993c00"/><stop offset="0.867" stop-color="#992e00"/><stop offset="0.933" stop-color="#992400"/><stop offset="1.000" stop-color="#991c00"/></linearGradient><linearGradient id="D48" gradientUnits="userSpaceOnUse" x1="15" x2="663" y1="0" y2="0"><stop offset="0.000" stop-color="#009943"/><stop offset="0.067" stop-color="#00993e"/><stop offset="0.133" stop-color="#009939"/><stop offset="0.200" stop-color="#009933"/><stop offset="0.267" stop-color="#00992c"/><stop offset="0.333" stop-color="#009924"/><stop offset="0.400" stop-color="#13991b"/><stop offset="0.467" stop-color="#409910"/><stop offset="0.533" stop-color="#729903"/><stop offset="0.600" stop-color="#998900"/><stop offset="0.667" stop-color="#996300"/><stop offset="0.733" stop-color="#994b00"/><stop offset="0.800" stop-color="#993900"/><stop offset="0.867" stop-color="#992d00"/><stop offset="0.933" stop-color="#992200"/><stop offset="1.000" stop-color="#991b00"/></linearGradient><linearGradient id="D49" gradientUnits="userSpaceOnUse" x1="15" x2="663" y1="0" y2="0"><stop offset="0.000" stop-color="#009945"/><stop offset="0.067" stop-color="#009940"/><stop offset="0.133" stop-color="#00993b"/><stop offset="0.200" stop-color="#009935"/><stop offset="0.267" stop-color="#00992e"/><stop offset="0.333" stop-color="#009927"/><stop offset="0.400" stop-color="#15991e"/><stop offset="0.467" stop-color="#439913"/><stop offset="0.533" stop-color="#769906"/><stop offset="0.600" stop-color="#998500"/><stop offset="0.667" stop-color="#996000"/><stop offset="0.733" stop-color="#994800"/><stop offset="0.800" stop-color="#993700"/><stop offset="0.867" stop-color="#992b00"/><stop offset="0.933" stop-color="#992100"/><stop offset="1.000" stop-color="#991900"/></linearGradient><linearGradient id="D50" gradientUnits="userSpaceOnUse" x1="15" x2="663" y1="0" y2="0"><stop offset="0.000" stop-color="#009946"/><stop offset="0.067" stop-color="#009942"/><stop offset="0.133" stop-color="#00993d"/><stop offset="0.200" stop-color="#009937"/><stop offset="0.267" stop-color="#009931"/><stop offset="0.333" stop-color="#009929"/><stop offset="0.400" stop-color="#169920"/><stop offset="0.467" stop-color="#469916"/><stop offset="0.533" stop-color="#7a9909"/><stop offset="0.600" stop-color="#998100"/><stop offset="0.667" stop-color="#995d00"/><stop offset="0.733" stop-color="#994600"/><stop offset="0.800" stop-color="#993600"/><stop offset="0.867" stop-color="#992a00"/><stop offset="0.933" stop-color="#991f00"/><stop offset="1.000" stop-color="#991800"/></linearGradient><linearGradient id="D51" gradientUnits="userSpaceOnUse" x1="15" x2="663" y1="0" y2="0"><stop offset="0.000" stop-color="#009949"/><stop offset="0.067" stop-color="#009945"/><stop offset="0.133" stop-color="#00993f"/><stop offset="0.200" stop-color="#00993a"/><stop offset="0.267" stop-color="#009933"/><stop offset="0.333" stop-color="#00992b"/><stop offset="0.400" stop-color="#199923"/><stop offset="0.467" stop-color="#499918"/><stop offset="0.533" stop-color="#7e990c"/><stop offset="0.600" stop-color="#997c00"/><stop offset="0.667" stop-color="#995a00"/><stop offset="0.733" stop-color="#994400"/><stop offset="0.800" stop-color="#993400"/><stop offset="0.867" stop-color="#992800"/><stop offset="0.933" stop-color="#991e00"/><stop offset="1.000" stop-color="#991600"/></linearGradient><linearGradient id="D52" gradientUnits="userSpaceOnUse" x1="15" x2="663" y1="0" y2="0"><stop offset="0.000" stop-color="#00994b"/><stop offset="0.067" stop-color="#009946"/><stop offset="0.133" stop-color="#009942"/><stop offset="0.200" stop-color="#00993c"/><stop offset="0.267" stop-color="#009936"/><stop offset="0.333" stop-color="#00992e"/><stop offset="0.400" stop-color="#1b9925"/><stop offset="0.467" stop-color="#4c991b"/><stop offset="0.533" stop-color="#82990f"/><stop offset="0.600" stop-color="#997900"/><stop offset="0.667" stop-color="#995700"/><stop offset="0.733" stop-color="#994200"/><stop offset="0.800" stop-color="#993200"/><stop offset="0.867" stop-color="#992600"/><stop offset="0.933" stop-color="#991d00"/><stop offset="1.000" stop-color="#991500"/></linearGradient><linearGradient id="D53" gradientUnits="userSpaceOnUse" x1="15" x2="663" y1="0" y2="0"><stop offset="0.000" stop-color="#00994d"/><stop offset="0.067" stop-color="#009949"/><stop offset="0.133" stop-color="#009944"/><stop offset="0.200" stop-color="#00993f"/><stop offset="0.267" stop-color="#009938"/><stop offset="0.333" stop-color="#009931"/><stop offset="0.400" stop-color="#1d9928"/><stop offset="0.467" stop-color="#4f991e"/><stop offset="0.533" stop-color="#879912"/><stop offset="0.600" stop-color="#997500"/><stop offset="0.667" stop-color="#995500"/><stop offset="0.733" stop-color="#993f00"/><stop offset="0.800" stop-color="#993000"/><stop offset="0.867" stop-color="#992500"/><stop offset="0.933" stop-color="#991b00"/><stop offset="1.000" stop-color="#991400"/></linearGradient><linearGradient id="D54" gradientUnits="userSpaceOnUse" x1="15" x2="663" y1="0" y2="0"><stop offset="0.000" stop-color="#00994f"/><stop offset="0.067" stop-color="#00994b"/><stop offset="0.133" stop-color="#009946"/><stop offset="0.200" stop-color="#009941"/><stop offset="0.267" stop-color="#00993b"/><stop offset="0.333" stop-color="#009934"/><stop offset="0.400" stop-color="#1f992b"/><stop offset="0.467" stop-color="#539921"/><stop offset="0.533" stop-color="#8c9915"/><stop offset="0.600" stop-color="#997103"/><stop offset="0.667" stop-color="#995200"/><stop offset="0.733" stop-color="#993d00"/><stop offset="0.800" stop-color="#992e00"/><stop offset="0.867" stop-color="#992300"/><stop offset="0.933" stop-color="#991a00"/><stop offset="1.000" stop-color="#991300"/></linearGradient><linearGradient id="D55" gradientUnits="userSpaceOnUse" x1="15" x2="663" y1="0" y2="0"><stop offset="0.000" stop-color="#009952"/><stop offset="0.067" stop-color="#00994e"/><stop offset="0.133" stop-color="#009949"/><stop offset="0.200" stop-color="#009943"/><stop offset="0.267" stop-color="#00993d"/><stop offset="0.333" stop-color="#009936"/><stop offset="0.400" stop-color="#22992e"/><stop offset="0.467" stop-color="#579924"/><stop offset="0.533" stop-color="#919918"/><stop offset="0.600" stop-color="#996d06"/><stop offset="0.667" stop-color="#994f00"/><stop offset="0.733" stop-color="#993b00"/><stop offset="0.800" stop-color="#992d00"/><stop offset="0.867" stop-color="#992100"/><stop offset="0.933" stop-color="#991900"/><stop offset="1.000" stop-color="#991200"/></linearGradient><linearGradient id="D56" gradientUnits="userSpaceOnUse" x1="15" x2="663" y1="0" y2="0"><stop offset="0.000" stop-color="#009954"/><stop offset="0.067" stop-color="#009950"/><stop offset="0.133" stop-color="#00994c"/><stop offset="0.200" stop-color="#009946"/><stop offset="0.267" stop-color="#009940"/><stop offset="0.333" stop-color="#009939"/><stop offset="0.400" stop-color="#249931"/><stop offset="0.467" stop-color="#5a9927"/><stop offset="0.533" stop-color="#96991b"/><stop offset="0.600" stop-color="#996a07"/><stop offset="0.667" stop-color="#994c00"/><stop offset="0.733" stop-color="#993900"/><stop offset="0.800" stop-color="#992b00"/><stop offset="0.867" stop-color="#992000"/><stop offset="0.933" stop-color="#991800"/><stop offset="1.000" stop-color="#991000"/></linearGradient><linearGradient id="D57" gradientUnits="userSpaceOnUse" x1="15" x2="663" y1="0" y2="0"><stop offset="0.000" stop-color="#009957"/><stop offset="0.067" stop-color="#009953"/><stop offset="0.133" stop-color="#00994e"/><stop offset="0.200" stop-color="#009949"/><stop offset="0.267" stop-color="#009943"/><stop offset="0.333" stop-color="#00993c"/><stop offset="0.400" stop-color="#279934"/><stop offset="0.467" stop-color="#5e992a"/><stop offset="0.533" stop-color="#99961e"/><stop offset="0.600" stop-color="#99660a"/><stop offset="0.667" stop-color="#994a00"/><stop offset="0.733" stop-color="#993700"/><stop offset="0.800" stop-color="#992900"/><stop offset="0.867" stop-color="#991e00"/><stop offset="0.933" stop-color="#991600"/><stop offset="1.000" stop-color="#990f00"/></linearGradient><linearGradient id="D58" gradientUnits="userSpaceOnUse" x1="15" x2="663" y1="0" y2="0"><stop offset="0.000" stop-color="#009959"/><stop offset="0.067" stop-color="#009955"/><stop offset="0.133" stop-color="#009951"/><stop offset="0.200" stop-color="#00994c"/><stop offset="0.267" stop-color="#009946"/><stop offset="0.333" stop-color="#00993f"/><stop offset="0.400" stop-color="#2a9937"/><stop offset="0.467" stop-color="#61992e"/><stop offset="0.533" stop-color="#999120"/><stop offset="0.600" stop-color="#99630c"/><stop offset="0.667" stop-color="#994700"/><stop offset="0.733" stop-color="#993400"/><stop offset="0.800" stop-color="#992700"/><stop offset="0.867" stop-color="#991d00"/><stop offset="0.933" stop-color="#991500"/><stop offset="1.000" stop-color="#990e00"/></linearGradient><linearGradient id="D59" gradientUnits="userSpaceOnUse" x1="15" x2="663" y1="0" y2="0"><stop offset="0.000" stop-color="#00995c"/><stop offset="0.067" stop-color="#009958"/><stop offset="0.133" stop-color="#009954"/><stop offset="0.200" stop-color="#00994f"/><stop offset="0.267" stop-color="#009949"/><stop offset="0.333" stop-color="#009943"/><stop offset="0.400" stop-color="#2d993b"/><stop offset="0.467" stop-color="#669931"/><stop offset="0.533" stop-color="#998b22"/><stop offset="0.600" stop-color="#99600e"/><stop offset="0.667" stop-color="#994500"/><stop offset="0.733" stop-color="#993300"/><stop offset="0.800" stop-color="#992500"/><stop offset="0.867" stop-color="#991b00"/><stop offset="0.933" stop-color="#991300"/><stop offset="1.000" stop-color="#990d00"/></linearGradient><linearGradient id="D60" gradientUnits="userSpaceOnUse" x1="15" x2="663" y1="0" y2="0"><stop offset="0.000" stop-color="#00995e"/><stop offset="0.067" stop-color="#00995b"/><stop offset="0.133" stop-color="#009957"/><stop offset="0.200" stop-color="#009952"/><stop offset="0.267" stop-color="#00994c"/><stop offset="0.333" stop-color="#009946"/><stop offset="0.400" stop-color="#30993f"/><stop offset="0.467" stop-color="#6a9935"/><stop offset="0.533" stop-color="#998725"/><stop offset="0.600" stop-color="#995c10"/><stop offset="0.667" stop-color="#994203"/><stop offset="0.733" stop-color="#993000"/><stop offset="0.800" stop-color="#992400"/><stop offset="0.867" stop-color="#991900"/><stop offset="0.933" stop-color="#991200"/><stop offset="1.000" stop-color="#990b00"/></linearGradient><linearGradient id="D61" gradientUnits="userSpaceOnUse" x1="15" x2="663" y1="0" y2="0"><stop offset="0.000" stop-color="#009961"/><stop offset="0.067" stop-color="#00995e"/><stop offset="0.133" stop-color="#00995a"/><stop offset="0.200" stop-color="#009955"/><stop offset="0.267" stop-color="#009950"/><stop offset="0.333" stop-color="#009949"/><stop offset="0.400" stop-color="#339942"/><stop offset="0.467" stop-color="#6f9939"/><stop offset="0.533" stop-color="#998227"/><stop offset="0.600" stop-color="#995812"/><stop offset="0.667" stop-color="#993f04"/><stop offset="0.733" stop-color="#992e00"/><stop offset="0.800" stop-color="#992200"/><stop offset="0.867" stop-color="#991800"/><stop offset="0.933" stop-color="#991000"/><stop offset="1.000" stop-color="#990a00"/></linearGradient><linearGradient id="D62" gradientUnits="userSpaceOnUse" x1="15" x2="663" y1="0" y2="0"><stop offset="0.000" stop-color="#009964"/><stop offset="0.067" stop-color="#009961"/><stop offset="0.133" stop-color="#00995d"/><stop offset="0.200" stop-color="#009958"/><stop offset="0.267" stop-color="#009953"/><stop offset="0.333" stop-color="#00994d"/><stop offset="0.400" stop-color="#369946"/><stop offset="0.467" stop-color="#73993d"/><stop offset="0.533" stop-color="#997d29"/><stop offset="0.600" stop-color="#995513"/><stop offset="0.667" stop-color="#993d06"/><stop offset="0.733" stop-color="#992c00"/><stop offset="0.800" stop-color="#992000"/><stop offset="0.867" stop-color="#991600"/><stop offset="0.933" stop-color="#990f00"/><stop offset="1.000" stop-color="#990900"/></linearGradient><linearGradient id="D63" gradientUnits="userSpaceOnUse" x1="15" x2="663" y1="0" y2="0"><stop offset="0.000" stop-color="#009967"/><stop offset="0.067" stop-color="#009964"/><stop offset="0.133" stop-color="#009960"/><stop offset="0.200" stop-color="#00995b"/><stop offset="0.267" stop-color="#009957"/><stop offset="0.333" stop-color="#009951"/><stop offset="0.400" stop-color="#39994a"/><stop offset="0.467" stop-color="#789941"/><stop offset="0.533" stop-color="#99782b"/><stop offset="0.600" stop-color="#995215"/><stop offset="0.667" stop-color="#993a08"/><stop offset="0.733" stop-color="#992a00"/><stop offset="0.800" stop-color="#991e00"/><stop offset="0.867" stop-color="#991500"/><stop offset="0.933" stop-color="#990d00"/><stop offset="1.000" stop-color="#990700"/></linearGradient><linearGradient id="D64" gradientUnits="userSpaceOnUse" x1="15" x2="663" y1="0" y2="0"><stop offset="0.000" stop-color="#00996a"/><stop offset="0.067" stop-color="#009967"/><stop offset="0.133" stop-color="#009963"/><stop offset="0.200" stop-color="#00995f"/><stop offset="0.267" stop-color="#00995a"/><stop offset="0.333" stop-color="#009955"/><stop offset="0.400" stop-color="#3c994e"/><stop offset="0.467" stop-color="#7d9946"/><stop offset="0.533" stop-color="#99732d"/><stop offset="0.600" stop-color="#994f17"/><stop offset="0.667" stop-color="#993809"/><stop offset="0.733" stop-color="#992800"/><stop offset="0.800" stop-color="#991c00"/><stop offset="0.867" stop-color="#991300"/><stop offset="0.933" stop-color="#990c00"/><stop offset="1.000" stop-color="#990600"/></linearGradient><linearGradient id="D65" gradientUnits="userSpaceOnUse" x1="15" x2="663" y1="0" y2="0"><stop offset="0.000" stop-color="#00996d"/><stop offset="0.067" stop-color="#00996a"/><stop offset="0.133" stop-color="#009967"/><stop offset="0.200" stop-color="#009963"/><stop offset="0.267" stop-color="#00995e"/><stop offset="0.333" stop-color="#019959"/><stop offset="0.400" stop-color="#409952"/><stop offset="0.467" stop-color="#82994a"/><stop offset="0.533" stop-color="#996f2e"/><stop offset="0.600" stop-color="#994c19"/><stop offset="0.667" stop-color="#99360b"/><stop offset="0.733" stop-color="#992601"/><stop offset="0.800" stop-color="#991b00"/><stop offset="0.867" stop-color="#991200"/><stop offset="0.933" stop-color="#990b00"/><stop offset="1.000" stop-color="#990500"/></linearGradient><linearGradient id="D66" gradientUnits="userSpaceOnUse" x1="15" x2="663" y1="0" y2="0"><stop offset="0.000" stop-color="#009970"/><stop offset="0.067" stop-color="#00996d"/><stop offset="0.133" stop-color="#00996a"/><stop offset="0.200" stop-color="#009966"/><stop offset="0.267" stop-color="#009962"/><stop offset="0.333" stop-color="#04995d"/><stop offset="0.400" stop-color="#439957"/><stop offset="0.467" stop-color="#88994f"/><stop offset="0.533" stop-color="#996b30"/><stop offset="0.600" stop-color="#99491b"/><stop offset="0.667" stop-color="#99330d"/><stop offset="0.733" stop-color="#992402"/><stop offset="0.800" stop-color="#991900"/><stop offset="0.867" stop-color="#991000"/><stop offset="0.933" stop-color="#990a00"/><stop offset="1.000" stop-color="#990400"/></linearGradient><linearGradient id="D67" gradientUnits="userSpaceOnUse" x1="15" x2="663" y1="0" y2="0"><stop offset="0.000" stop-color="#009973"/><stop offset="0.067" stop-color="#009970"/><stop offset="0.133" stop-color="#00996d"/><stop offset="0.200" stop-color="#00996a"/><stop offset="0.267" stop-color="#009966"/><stop offset="0.333" stop-color="#079961"/><stop offset="0.400" stop-color="#47995b"/><stop offset="0.467" stop-color="#8e9954"/><stop offset="0.533" stop-color="#996632"/><stop offset="0.600" stop-color="#99461c"/><stop offset="0.667" stop-color="#99310e"/><stop offset="0.733" stop-color="#992204"/><stop offset="0.800" stop-color="#991800"/><stop offset="0.867" stop-color="#990f00"/><stop offset="0.933" stop-color="#990800"/><stop offset="1.000" stop-color="#990200"/></linearGradient><linearGradient id="D68" gradientUnits="userSpaceOnUse" x1="15" x2="663" y1="0" y2="0"><stop offset="0.000" stop-color="#009976"/><stop offset="0.067" stop-color="#009974"/><stop offset="0.133" stop-color="#009972"/><stop offset="0.200" stop-color="#00996e"/><stop offset="0.267" stop-color="#00996a"/><stop offset="0.333" stop-color="#0a9966"/><stop offset="0.400" stop-color="#4b9960"/><stop offset="0.467" stop-color="#94995a"/><stop offset="0.533" stop-color="#996234"/><stop offset="0.600" stop-color="#99431e"/><stop offset="0.667" stop-color="#992e10"/><stop offset="0.733" stop-color="#992105"/><stop offset="0.800" stop-color="#991600"/><stop offset="0.867" stop-color="#990d00"/><stop offset="0.933" stop-color="#990700"/><stop offset="1.000" stop-color="#990100"/></linearGradient><linearGradient id="D69" gradientUnits="userSpaceOnUse" x1="15" x2="663" y1="0" y2="0"><stop offset="0.000" stop-color="#00997a"/><stop offset="0.067" stop-color="#009978"/><stop offset="0.133" stop-color="#009975"/><stop offset="0.200" stop-color="#009972"/><stop offset="0.267" stop-color="#00996f"/><stop offset="0.333" stop-color="#0d996b"/><stop offset="0.400" stop-color="#4f9966"/><stop offset="0.467" stop-color="#99965e"/><stop offset="0.533" stop-color="#995e36"/><stop offset="0.600" stop-color="#99401f"/><stop offset="0.667" stop-color="#992c11"/><stop offset="0.733" stop-color="#991e07"/><stop offset="0.800" stop-color="#991400"/><stop offset="0.867" stop-color="#990c00"/><stop offset="0.933" stop-color="#990600"/><stop offset="1.000" stop-color="#990000"/></linearGradient><linearGradient id="D70" gradientUnits="userSpaceOnUse" x1="15" x2="663" y1="0" y2="0"><stop offset="0.000" stop-color="#00997e"/><stop offset="0.067" stop-color="#00997b"/><stop offset="0.133" stop-color="#009979"/><stop offset="0.200" stop-color="#009976"/><stop offset="0.267" stop-color="#009973"/><stop offset="0.333" stop-color="#0f9970"/><stop offset="0.400" stop-color="#54996b"/><stop offset="0.467" stop-color="#999060"/><stop offset="0.533" stop-color="#995a37"/><stop offset="0.600" stop-color="#993d21"/><stop offset="0.667" stop-color="#992a12"/><stop offset="0.733" stop-color="#991c08"/><stop offset="0.800" stop-color="#991300"/><stop offset="0.867" stop-color="#990a00"/><stop offset="0.933" stop-color="#990400"/><stop offset="1.000" stop-color="#990000"/></linearGradient><linearGradient id="D71" gradientUnits="userSpaceOnUse" x1="15" x2="663" y1="0" y2="0"><stop offset="0.000" stop-color="#009981"/><stop offset="0.067" stop-color="#00997f"/><stop offset="0.133" stop-color="#00997e"/><stop offset="0.200" stop-color="#00997b"/><stop offset="0.267" stop-color="#009978"/><stop offset="0.333" stop-color="#129975"/><stop offset="0.400" stop-color="#589971"/><stop offset="0.467" stop-color="#998a61"/><stop offset="0.533" stop-color="#995639"/><stop offset="0.600" stop-color="#993a22"/><stop offset="0.667" stop-color="#992714"/><stop offset="0.733" stop-color="#991b09"/><stop offset="0.800" stop-color="#991101"/><stop offset="0.867" stop-color="#990900"/><stop offset="0.933" stop-color="#990300"/><stop offset="1.000" stop-color="#990000"/></linearGradient><linearGradient id="D72" gradientUnits="userSpaceOnUse" x1="15" x2="663" y1="0" y2="0"><stop offset="0.000" stop-color="#009985"/><stop offset="0.067" stop-color="#009983"/><stop offset="0.133" stop-color="#009982"/><stop offset="0.200" stop-color="#00997f"/><stop offset="0.267" stop-color="#00997e"/><stop offset="0.333" stop-color="#15997b"/><stop offset="0.400" stop-color="#5d9977"/><stop offset="0.467" stop-color="#998362"/><stop offset="0.533" stop-color="#99523a"/><stop offset="0.600" stop-color="#993724"/><stop offset="0.667" stop-color="#992515"/><stop offset="0.733" stop-color="#99190a"/><stop offset="0.800" stop-color="#990f02"/><stop offset="0.867" stop-color="#990700"/><stop offset="0.933" stop-color="#990100"/><stop offset="1.000" stop-color="#990000"/></linearGradient><linearGradient id="D73" gradientUnits="userSpaceOnUse" x1="15" x2="663" y1="0" y2="0"><stop offset="0.000" stop-color="#009988"/><stop offset="0.067" stop-color="#009987"/><stop offset="0.133" stop-color="#009986"/><stop offset="0.200" stop-color="#009984"/><stop offset="0.267" stop-color="#009982"/><stop offset="0.333" stop-color="#189980"/><stop offset="0.400" stop-color="#63997d"/><stop offset="0.467" stop-color="#997d64"/><stop offset="0.533" stop-color="#994e3c"/><stop offset="0.600" stop-color="#993425"/><stop offset="0.667" stop-color="#992316"/><stop offset="0.733" stop-color="#99170c"/><stop offset="0.800" stop-color="#990d03"/><stop offset="0.867" stop-color="#990600"/><stop offset="0.933" stop-color="#990000"/><stop offset="1.000" stop-color="#990000"/></linearGradient><linearGradient id="D74" gradientUnits="userSpaceOnUse" x1="15" x2="663" y1="0" y2="0"><stop offset="0.000" stop-color="#00998d"/><stop offset="0.067" stop-color="#00998b"/><stop offset="0.133" stop-color="#00998b"/><stop offset="0.200" stop-color="#00998a"/><stop offset="0.267" stop-color="#009988"/><stop offset="0.333" stop-color="#1c9986"/><stop offset="0.400" stop-color="#689984"/><stop offset="0.467" stop-color="#997865"/><stop offset="0.533" stop-color="#994b3d"/><stop offset="0.600" stop-color="#993127"/><stop offset="0.667" stop-color="#992118"/><stop offset="0.733" stop-color="#99150d"/><stop offset="0.800" stop-color="#990c04"/><stop offset="0.867" stop-color="#990400"/><stop offset="0.933" stop-color="#990000"/><stop offset="1.000" stop-color="#990000"/></linearGradient><linearGradient id="D75" gradientUnits="userSpaceOnUse" x1="15" x2="663" y1="0" y2="0"><stop offset="0.000" stop-color="#009991"/><stop offset="0.067" stop-color="#009990"/><stop offset="0.133" stop-color="#009990"/><stop offset="0.200" stop-color="#00998f"/><stop offset="0.267" stop-color="#00998e"/><stop offset="0.333" stop-color="#1f998d"/><stop offset="0.400" stop-color="#6e998b"/><stop offset="0.467" stop-color="#997266"/><stop offset="0.533" stop-color="#99473f"/><stop offset="0.600" stop-color="#992e28"/><stop offset="0.667" stop-color="#991f19"/><stop offset="0.733" stop-color="#99130e"/><stop offset="0.800" stop-color="#990a06"/><stop offset="0.867" stop-color="#990300"/><stop offset="0.933" stop-color="#990000"/><stop offset="1.000" stop-color="#990000"/></linearGradient><linearGradient id="D76" gradientUnits="userSpaceOnUse" x1="15" x2="663" y1="0" y2="0"><stop offset="0.000" stop-color="#009995"/><stop offset="0.067" stop-color="#009995"/><stop offset="0.133" stop-color="#009994"/><stop offset="0.200" stop-color="#009994"/><stop offset="0.267" stop-color="#009994"/><stop offset="0.333" stop-color="#239993"/><stop offset="0.400" stop-color="#749993"/><stop offset="0.467" stop-color="#996c67"/><stop offset="0.533" stop-color="#994340"/><stop offset="0.600" stop-color="#992c29"/><stop offset="0.667" stop-color="#991c1a"/><stop offset="0.733" stop-color="#99110f"/><stop offset="0.800" stop-color="#990907"/><stop offset="0.867" stop-color="#990100"/><stop offset="0.933" stop-color="#990000"/><stop offset="1.000" stop-color="#990000"/></linearGradient><linearGradient id="D77" gradientUnits="userSpaceOnUse" x1="15" x2="663" y1="0" y2="0"><stop offset="0.000" stop-color="#009899"/><stop offset="0.067" stop-color="#009899"/><stop offset="0.133" stop-color="#009799"/><stop offset="0.200" stop-color="#009799"/><stop offset="0.267" stop-color="#009799"/><stop offset="0.333" stop-color="#269799"/><stop offset="0.400" stop-color="#799699"/><stop offset="0.467" stop-color="#996769"/><stop offset="0.533" stop-color="#994042"/><stop offset="0.600" stop-color="#99292b"/><stop offset="0.667" stop-color="#991a1b"/><stop offset="0.733" stop-color="#990f10"/><stop offset="0.800" stop-color="#990708"/><stop offset="0.867" stop-color="#990001"/><stop offset="0.933" stop-color="#990000"/><stop offset="1.000" stop-color="#990000"/></linearGradient><linearGradient id="D78" gradientUnits="userSpaceOnUse" x1="15" x2="663" y1="0" y2="0"><stop offset="0.000" stop-color="#009399"/><stop offset="0.067" stop-color="#009399"/><stop offset="0.133" stop-color="#009399"/><stop offset="0.200" stop-color="#009199"/><stop offset="0.267" stop-color="#009199"/><stop offset="0.333" stop-color="#289099"/><stop offset="0.400" stop-color="#798e99"/><stop offset="0.467" stop-color="#99616a"/><stop offset="0.533" stop-color="#993c43"/><stop offset="0.600" stop-color="#99272c"/><stop offset="0.667" stop-color="#99181c"/><stop offset="0.733" stop-color="#990d12"/><stop offset="0.800" stop-color="#990509"/><stop offset="0.867" stop-color="#990002"/><stop offset="0.933" stop-color="#990000"/><stop offset="1.000" stop-color="#990000"/></linearGradient><linearGradient id="D79" gradientUnits="userSpaceOnUse" x1="15" x2="663" y1="0" y2="0"><stop offset="0.000" stop-color="#008f99"/><stop offset="0.067" stop-color="#008e99"/><stop offset="0.133" stop-color="#008d99"/><stop offset="0.200" stop-color="#008c99"/><stop offset="0.267" stop-color="#008b99"/><stop offset="0.333" stop-color="#2a8999"/><stop offset="0.400" stop-color="#798799"/><stop offset="0.467" stop-color="#995d6b"/><stop offset="0.533" stop-color="#993944"/><stop offset="0.600" stop-color="#99242d"/><stop offset="0.667" stop-color="#99161e"/><stop offset="0.733" stop-color="#990c13"/><stop offset="0.800" stop-color="#99030a"/><stop offset="0.867" stop-color="#990003"/><stop offset="0.933" stop-color="#990000"/><stop offset="1.000" stop-color="#990000"/></linearGradient><linearGradient id="D80" gradientUnits="userSpaceOnUse" x1="15" x2="663" y1="0" y2="0"><stop offset="0.000" stop-color="#008b99"/><stop offset="0.067" stop-color="#008a99"/><stop offset="0.133" stop-color="#008899"/><stop offset="0.200" stop-color="#008799"/><stop offset="0.267" stop-color="#008599"/><stop offset="0.333" stop-color="#2c8299"/><stop offset="0.400" stop-color="#797f99"/><stop offset="0.467" stop-color="#99576c"/><stop offset="0.533" stop-color="#993645"/><stop offset="0.600" stop-color="#99212e"/><stop offset="0.667" stop-color="#99131f"/><stop offset="0.733" stop-color="#990a14"/><stop offset="0.800" stop-color="#99010b"/><stop offset="0.867" stop-color="#990004"/><stop offset="0.933" stop-color="#990000"/><stop offset="1.000" stop-color="#990000"/></linearGradient><linearGradient id="D81" gradientUnits="userSpaceOnUse" x1="15" x2="663" y1="0" y2="0"><stop offset="0.000" stop-color="#008799"/><stop offset="0.067" stop-color="#008599"/><stop offset="0.133" stop-color="#008499"/><stop offset="0.200" stop-color="#008299"/><stop offset="0.267" stop-color="#007f99"/><stop offset="0.333" stop-color="#2e7c99"/><stop offset="0.400" stop-color="#797899"/><stop offset="0.467" stop-color="#99526d"/><stop offset="0.533" stop-color="#993246"/><stop offset="0.600" stop-color="#991f30"/><stop offset="0.667" stop-color="#991220"/><stop offset="0.733" stop-color="#990715"/><stop offset="0.800" stop-color="#99000c"/><stop offset="0.867" stop-color="#990005"/><stop offset="0.933" stop-color="#990000"/><stop offset="1.000" stop-color="#990000"/></linearGradient><linearGradient id="D82" gradientUnits="userSpaceOnUse" x1="15" x2="663" y1="0" y2="0"><stop offset="0.000" stop-color="#008399"/><stop offset="0.067" stop-color="#008199"/><stop offset="0.133" stop-color="#007f99"/><stop offset="0.200" stop-color="#007c99"/><stop offset="0.267" stop-color="#007999"/><stop offset="0.333" stop-color="#2f7699"/><stop offset="0.400" stop-color="#797299"/><stop offset="0.467" stop-color="#994e6f"/><stop offset="0.533" stop-color="#992e48"/><stop offset="0.600" stop-color="#991c31"/><stop offset="0.667" stop-color="#990f21"/><stop offset="0.733" stop-color="#990616"/><stop offset="0.800" stop-color="#99000d"/><stop offset="0.867" stop-color="#990006"/><stop offset="0.933" stop-color="#990000"/><stop offset="1.000" stop-color="#990000"/></linearGradient><linearGradient id="D83" gradientUnits="userSpaceOnUse" x1="15" x2="663" y1="0" y2="0"><stop offset="0.000" stop-color="#007f99"/><stop offset="0.067" stop-color="#007d99"/><stop offset="0.133" stop-color="#007b99"/><stop offset="0.200" stop-color="#007899"/><stop offset="0.267" stop-color="#007499"/><stop offset="0.333" stop-color="#317099"/><stop offset="0.400" stop-color="#7a6b99"/><stop offset="0.467" stop-color="#994970"/><stop offset="0.533" stop-color="#992b49"/><stop offset="0.600" stop-color="#991932"/><stop offset="0.667" stop-color="#990d22"/><stop offset="0.733" stop-color="#990417"/><stop offset="0.800" stop-color="#99000e"/><stop offset="0.867" stop-color="#990007"/><stop offset="0.933" stop-color="#990001"/><stop offset="1.000" stop-color="#990000"/></linearGradient><linearGradient id="D84" gradientUnits="userSpaceOnUse" x1="15" x2="663" y1="0" y2="0"><stop offset="0.000" stop-color="#007b99"/><stop offset="0.067" stop-color="#007999"/><stop offset="0.133" stop-color="#007699"/><stop offset="0.200" stop-color="#007399"/><stop offset="0.267" stop-color="#006f99"/><stop offset="0.333" stop-color="#336a99"/><stop offset="0.400" stop-color="#7a6499"/><stop offset="0.467" stop-color="#994570"/><stop offset="0.533" stop-color="#99284a"/><stop offset="0.600" stop-color="#991733"/><stop offset="0.667" stop-color="#990b24"/><stop offset="0.733" stop-color="#990118"/><stop offset="0.800" stop-color="#99000f"/><stop offset="0.867" stop-color="#990008"/><stop offset="0.933" stop-color="#990002"/><stop offset="1.000" stop-color="#990000"/></linearGradient><linearGradient id="D85" gradientUnits="userSpaceOnUse" x1="15" x2="663" y1="0" y2="0"><stop offset="0.000" stop-color="#007899"/><stop offset="0.067" stop-color="#007599"/><stop offset="0.133" stop-color="#007299"/><stop offset="0.200" stop-color="#006e99"/><stop offset="0.267" stop-color="#006a99"/><stop offset="0.333" stop-color="#346599"/><stop offset="0.400" stop-color="#7a5e99"/><stop offset="0.467" stop-color="#994072"/><stop offset="0.533" stop-color="#99254b"/><stop offset="0.600" stop-color="#991534"/><stop offset="0.667" stop-color="#990924"/><stop offset="0.733" stop-color="#990019"/><stop offset="0.800" stop-color="#990010"/><stop offset="0.867" stop-color="#990009"/><stop offset="0.933" stop-color="#990003"/><stop offset="1.000" stop-color="#990000"/></linearGradient><linearGradient id="D86" gradientUnits="userSpaceOnUse" x1="15" x2="663" y1="0" y2="0"><stop offset="0.000" stop-color="#007399"/><stop offset="0.067" stop-color="#007199"/><stop offset="0.133" stop-color="#006d99"/><stop offset="0.200" stop-color="#006a99"/><stop offset="0.267" stop-color="#006599"/><stop offset="0.333" stop-color="#356099"/><stop offset="0.400" stop-color="#7a5899"/><stop offset="0.467" stop-color="#993c72"/><stop offset="0.533" stop-color="#99224c"/><stop offset="0.600" stop-color="#991235"/><stop offset="0.667" stop-color="#990725"/><stop offset="0.733" stop-color="#99001a"/><stop offset="0.800" stop-color="#990011"/><stop offset="0.867" stop-color="#99000a"/><stop offset="0.933" stop-color="#990004"/><stop offset="1.000" stop-color="#990000"/></linearGradient><linearGradient id="D87" gradientUnits="userSpaceOnUse" x1="15" x2="663" y1="0" y2="0"><stop offset="0.000" stop-color="#007099"/><stop offset="0.067" stop-color="#006d99"/><stop offset="0.133" stop-color="#006999"/><stop offset="0.200" stop-color="#006599"/><stop offset="0.267" stop-color="#006099"/><stop offset="0.333" stop-color="#375a99"/><stop offset="0.400" stop-color="#7a5299"/><stop offset="0.467" stop-color="#993773"/><stop offset="0.533" stop-color="#991f4e"/><stop offset="0.600" stop-color="#990f36"/><stop offset="0.667" stop-color="#990427"/><stop offset="0.733" stop-color="#99001b"/><stop offset="0.800" stop-color="#990012"/><stop offset="0.867" stop-color="#99000b"/><stop offset="0.933" stop-color="#990004"/><stop offset="1.000" stop-color="#990000"/></linearGradient><linearGradient id="D88" gradientUnits="userSpaceOnUse" x1="15" x2="663" y1="0" y2="0"><stop offset="0.000" stop-color="#006c99"/><stop offset="0.067" stop-color="#006999"/><stop offset="0.133" stop-color="#006699"/><stop offset="0.200" stop-color="#006199"/><stop offset="0.267" stop-color="#005b99"/><stop offset="0.333" stop-color="#385599"/><stop offset="0.400" stop-color="#7a4d99"/><stop offset="0.467" stop-color="#993374"/><stop offset="0.533" stop-color="#991c4e"/><stop offset="0.600" stop-color="#990d37"/><stop offset="0.667" stop-color="#990227"/><stop offset="0.733" stop-color="#99001c"/><stop offset="0.800" stop-color="#990013"/><stop offset="0.867" stop-color="#99000c"/><stop offset="0.933" stop-color="#990006"/><stop offset="1.000" stop-color="#990000"/></linearGradient><linearGradient id="D89" gradientUnits="userSpaceOnUse" x1="15" x2="663" y1="0" y2="0"><stop offset="0.000" stop-color="#006999"/><stop offset="0.067" stop-color="#006699"/><stop offset="0.133" stop-color="#006199"/><stop offset="0.200" stop-color="#005d99"/><stop offset="0.267" stop-color="#005799"/><stop offset="0.333" stop-color="#395099"/><stop offset="0.400" stop-color="#7b4899"/><stop offset="0.467" stop-color="#992f75"/><stop offset="0.533" stop-color="#99194f"/><stop offset="0.600" stop-color="#990a39"/><stop offset="0.667" stop-color="#990028"/><stop offset="0.733" stop-color="#99001d"/><stop offset="0.800" stop-color="#990014"/><stop offset="0.867" stop-color="#99000c"/><stop offset="0.933" stop-color="#990006"/><stop offset="1.000" stop-color="#990001"/></linearGradient><linearGradient id="D90" gradientUnits="userSpaceOnUse" x1="15" x2="663" y1="0" y2="0"><stop offset="0.000" stop-color="#006699"/><stop offset="0.067" stop-color="#006299"/><stop offset="0.133" stop-color="#005e99"/><stop offset="0.200" stop-color="#005899"/><stop offset="0.267" stop-color="#005299"/><stop offset="0.333" stop-color="#3a4b99"/><stop offset="0.400" stop-color="#7b4399"/><stop offset="0.467" stop-color="#992b76"/><stop offset="0.533" stop-color="#991651"/><stop offset="0.600" stop-color="#990839"/><stop offset="0.667" stop-color="#99002a"/><stop offset="0.733" stop-color="#99001e"/><stop offset="0.800" stop-color="#990015"/><stop offset="0.867" stop-color="#99000d"/><stop offset="0.933" stop-color="#990007"/><stop offset="1.000" stop-color="#990001"/></linearGradient><linearGradient id="D91" gradientUnits="userSpaceOnUse" x1="15" x2="663" y1="0" y2="0"><stop offset="0.000" stop-color="#006299"/><stop offset="0.067" stop-color="#005e99"/><stop offset="0.133" stop-color="#005a99"/><stop offset="0.200" stop-color="#005499"/><stop offset="0.267" stop-color="#004e99"/><stop offset="0.333" stop-color="#3c4699"/><stop offset="0.400" stop-color="#7b3d99"/><stop offset="0.467" stop-color="#992777"/><stop offset="0.533" stop-color="#991352"/><stop offset="0.600" stop-color="#99053a"/><stop offset="0.667" stop-color="#99002a"/><stop offset="0.733" stop-color="#99001f"/><stop offset="0.800" stop-color="#990016"/><stop offset="0.867" stop-color="#99000e"/><stop offset="0.933" stop-color="#990008"/><stop offset="1.000" stop-color="#990003"/></linearGradient><linearGradient id="D92" gradientUnits="userSpaceOnUse" x1="15" x2="663" y1="0" y2="0"><stop offset="0.000" stop-color="#005f99"/><stop offset="0.067" stop-color="#005b99"/><stop offset="0.133" stop-color="#005699"/><stop offset="0.200" stop-color="#005199"/><stop offset="0.267" stop-color="#034a99"/><stop offset="0.333" stop-color="#3d4299"/><stop offset="0.400" stop-color="#7b3999"/><stop offset="0.467" stop-color="#992378"/><stop offset="0.533" stop-color="#991052"/><stop offset="0.600" stop-color="#99033c"/><stop offset="0.667" stop-color="#99002b"/><stop offset="0.733" stop-color="#99001f"/><stop offset="0.800" stop-color="#990016"/><stop offset="0.867" stop-color="#99000f"/><stop offset="0.933" stop-color="#990009"/><stop offset="1.000" stop-color="#990003"/></linearGradient><linearGradient id="D93" gradientUnits="userSpaceOnUse" x1="15" x2="663" y1="0" y2="0"><stop offset="0.000" stop-color="#005b99"/><stop offset="0.067" stop-color="#005799"/><stop offset="0.133" stop-color="#005299"/><stop offset="0.200" stop-color="#004c99"/><stop offset="0.267" stop-color="#054699"/><stop offset="0.333" stop-color="#3e3e99"/><stop offset="0.400" stop-color="#7b3499"/><stop offset="0.467" stop-color="#991f78"/><stop offset="0.533" stop-color="#990d54"/><stop offset="0.600" stop-color="#99003c"/><stop offset="0.667" stop-color="#99002d"/><stop offset="0.733" stop-color="#990021"/><stop offset="0.800" stop-color="#990017"/><stop offset="0.867" stop-color="#990010"/><stop offset="0.933" stop-color="#99000a"/><stop offset="1.000" stop-color="#990004"/></linearGradient><linearGradient id="D94" gradientUnits="userSpaceOnUse" x1="15" x2="663" y1="0" y2="0"><stop offset="0.000" stop-color="#005899"/><stop offset="0.067" stop-color="#005499"/><stop offset="0.133" stop-color="#004f99"/><stop offset="0.200" stop-color="#004999"/><stop offset="0.267" stop-color="#074299"/><stop offset="0.333" stop-color="#3f3999"/><stop offset="0.400" stop-color="#7b2f99"/><stop offset="0.467" stop-color="#991b79"/><stop offset="0.533" stop-color="#990a54"/><stop offset="0.600" stop-color="#99003d"/><stop offset="0.667" stop-color="#99002d"/><stop offset="0.733" stop-color="#990021"/><stop offset="0.800" stop-color="#990018"/><stop offset="0.867" stop-color="#990010"/><stop offset="0.933" stop-color="#99000a"/><stop offset="1.000" stop-color="#990005"/></linearGradient><linearGradient id="D95" gradientUnits="userSpaceOnUse" x1="15" x2="663" y1="0" y2="0"><stop offset="0.000" stop-color="#005599"/><stop offset="0.067" stop-color="#005199"/><stop offset="0.133" stop-color="#004b99"/><stop offset="0.200" stop-color="#004599"/><stop offset="0.267" stop-color="#093e99"/><stop offset="0.333" stop-color="#403599"/><stop offset="0.400" stop-color="#7b2b99"/><stop offset="0.467" stop-color="#99187a"/><stop offset="0.533" stop-color="#990655"/><stop offset="0.600" stop-color="#99003e"/><stop offset="0.667" stop-color="#99002e"/><stop offset="0.733" stop-color="#990022"/><stop offset="0.800" stop-color="#990019"/><stop offset="0.867" stop-color="#990012"/><stop offset="0.933" stop-color="#99000b"/><stop offset="1.000" stop-color="#990006"/></linearGradient><linearGradient id="D96" gradientUnits="userSpaceOnUse" x1="15" x2="663" y1="0" y2="0"><stop offset="0.000" stop-color="#005299"/><stop offset="0.067" stop-color="#004e99"/><stop offset="0.133" stop-color="#004899"/><stop offset="0.200" stop-color="#004299"/><stop offset="0.267" stop-color="#0c3a99"/><stop offset="0.333" stop-color="#413199"/><stop offset="0.400" stop-color="#7b2699"/><stop offset="0.467" stop-color="#99137b"/><stop offset="0.533" stop-color="#990356"/><stop offset="0.600" stop-color="#99003f"/><stop offset="0.667" stop-color="#99002f"/><stop offset="0.733" stop-color="#990023"/><stop offset="0.800" stop-color="#99001a"/><stop offset="0.867" stop-color="#990012"/><stop offset="0.933" stop-color="#99000c"/><stop offset="1.000" stop-color="#990007"/></linearGradient><linearGradient id="D97" gradientUnits="userSpaceOnUse" x1="15" x2="663" y1="0" y2="0"><stop offset="0.000" stop-color="#004f99"/><stop offset="0.067" stop-color="#004b99"/><stop offset="0.133" stop-color="#004599"/><stop offset="0.200" stop-color="#003e99"/><stop offset="0.267" stop-color="#0d3699"/><stop offset="0.333" stop-color="#422d99"/><stop offset="0.400" stop-color="#7b2299"/><stop offset="0.467" stop-color="#99107b"/><stop offset="0.533" stop-color="#990057"/><stop offset="0.600" stop-color="#990040"/><stop offset="0.667" stop-color="#990030"/><stop offset="0.733" stop-color="#990024"/><stop offset="0.800" stop-color="#99001b"/><stop offset="0.867" stop-color="#990013"/><stop offset="0.933" stop-color="#99000d"/><stop offset="1.000" stop-color="#990007"/></linearGradient><linearGradient id="D98" gradientUnits="userSpaceOnUse" x1="15" x2="663" y1="0" y2="0"><stop offset="0.000" stop-color="#004c99"/><stop offset="0.067" stop-color="#004799"/><stop offset="0.133" stop-color="#004299"/><stop offset="0.200" stop-color="#003a99"/><stop offset="0.267" stop-color="#0f3399"/><stop offset="0.333" stop-color="#432999"/><stop offset="0.400" stop-color="#7b1e99"/><stop offset="0.467" stop-color="#990c7c"/><stop offset="0.533" stop-color="#990058"/><stop offset="0.600" stop-color="#990041"/><stop offset="0.667" stop-color="#990031"/><stop offset="0.733" stop-color="#990025"/><stop offset="0.800" stop-color="#99001b"/><stop offset="0.867" stop-color="#990014"/><stop offset="0.933" stop-color="#99000d"/><stop offset="1.000" stop-color="#990008"/></linearGradient><linearGradient id="D99" gradientUnits="userSpaceOnUse" x1="15" x2="663" y1="0" y2="0"><stop offset="0.000" stop-color="#004999"/><stop offset="0.067" stop-color="#004499"/><stop offset="0.133" stop-color="#003e99"/><stop offset="0.200" stop-color="#003799"/><stop offset="0.267" stop-color="#102f99"/><stop offset="0.333" stop-color="#442599"/><stop offset="0.400" stop-color="#7b1999"/><stop offset="0.467" stop-color="#99087c"/><stop offset="0.533" stop-color="#990059"/><stop offset="0.600" stop-color="#990042"/><stop offset="0.667" stop-color="#990032"/><stop offset="0.733" stop-color="#990025"/><stop offset="0.800" stop-color="#99001c"/><stop offset="0.867" stop-color="#990015"/><stop offset="0.933" stop-color="#99000e"/><stop offset="1.000" stop-color="#990009"/></linearGradient><linearGradient id="D100" gradientUnits="userSpaceOnUse" x1="15" x2="663" y1="0" y2="0"><stop offset="0.000" stop-color="#004699"/><stop offset="0.067" stop-color="#004199"/><stop offset="0.133" stop-color="#003b99"/><stop offset="0.200" stop-color="#003499"/><stop offset="0.267" stop-color="#122b99"/><stop offset="0.333" stop-color="#452199"/><stop offset="0.400" stop-color="#7b1599"/><stop offset="0.467" stop-color="#99047e"/><stop offset="0.533" stop-color="#99005a"/><stop offset="0.600" stop-color="#990043"/><stop offset="0.667" stop-color="#990033"/><stop offset="0.733" stop-color="#990027"/><stop offset="0.800" stop-color="#99001d"/><stop offset="0.867" stop-color="#990015"/><stop offset="0.933" stop-color="#99000f"/><stop offset="1.000" stop-color="#990009"/></linearGradient><linearGradient id="D101" gradientUnits="userSpaceOnUse" x1="15" x2="663" y1="0" y2="0"><stop offset="0.000" stop-color="#004499"/><stop offset="0.067" stop-color="#003e99"/><stop offset="0.133" stop-color="#003899"/><stop offset="0.200" stop-color="#003099"/><stop offset="0.267" stop-color="#142899"/><stop offset="0.333" stop-color="#461e99"/><stop offset="0.400" stop-color="#7b1199"/><stop offset="0.467" stop-color="#99007e"/><stop offset="0.533" stop-color="#99005b"/><stop offset="0.600" stop-color="#990043"/><stop offset="0.667" stop-color="#990033"/><stop offset="0.733" stop-color="#990027"/><stop offset="0.800" stop-color="#99001e"/><stop offset="0.867" stop-color="#990016"/><stop offset="0.933" stop-color="#990010"/><stop offset="1.000" stop-color="#99000a"/></linearGradient><linearGradient id="D102" gradientUnits="userSpaceOnUse" x1="15" x2="663" y1="0" y2="0"><stop offset="0.000" stop-color="#004199"/><stop offset="0.067" stop-color="#003b99"/><stop offset="0.133" stop-color="#003599"/><stop offset="0.200" stop-color="#002d99"/><stop offset="0.267" stop-color="#152499"/><stop offset="0.333" stop-color="#461a99"/><stop offset="0.400" stop-color="#7b0d99"/><stop offset="0.467" stop-color="#99007f"/><stop offset="0.533" stop-color="#99005b"/><stop offset="0.600" stop-color="#990045"/><stop offset="0.667" stop-color="#990034"/><stop offset="0.733" stop-color="#990028"/><stop offset="0.800" stop-color="#99001f"/><stop offset="0.867" stop-color="#990017"/><stop offset="0.933" stop-color="#990010"/><stop offset="1.000" stop-color="#99000b"/></linearGradient><linearGradient id="D103" gradientUnits="userSpaceOnUse" x1="15" x2="663" y1="0" y2="0"><stop offset="0.000" stop-color="#003e99"/><stop offset="0.067" stop-color="#003999"/><stop offset="0.133" stop-color="#003299"/><stop offset="0.200" stop-color="#002a99"/><stop offset="0.267" stop-color="#172199"/><stop offset="0.333" stop-color="#471699"/><stop offset="0.400" stop-color="#7c0999"/><stop offset="0.467" stop-color="#99007f"/><stop offset="0.533" stop-color="#99005c"/><stop offset="0.600" stop-color="#990045"/><stop offset="0.667" stop-color="#990035"/><stop offset="0.733" stop-color="#990029"/><stop offset="0.800" stop-color="#99001f"/><stop offset="0.867" stop-color="#990018"/><stop offset="0.933" stop-color="#990011"/><stop offset="1.000" stop-color="#99000c"/></linearGradient><linearGradient id="D104" gradientUnits="userSpaceOnUse" x1="15" x2="663" y1="0" y2="0"><stop offset="0.000" stop-color="#003c99"/><stop offset="0.067" stop-color="#003699"/><stop offset="0.133" stop-color="#002f99"/><stop offset="0.200" stop-color="#002799"/><stop offset="0.267" stop-color="#181e99"/><stop offset="0.333" stop-color="#481399"/><stop offset="0.400" stop-color="#7c0599"/><stop offset="0.467" stop-color="#990080"/><stop offset="0.533" stop-color="#99005d"/><stop offset="0.600" stop-color="#990046"/><stop offset="0.667" stop-color="#990036"/><stop offset="0.733" stop-color="#99002a"/><stop offset="0.800" stop-color="#990020"/><stop offset="0.867" stop-color="#990018"/><stop offset="0.933" stop-color="#990012"/><stop offset="1.000" stop-color="#99000c"/></linearGradient><linearGradient id="D105" gradientUnits="userSpaceOnUse" x1="15" x2="663" y1="0" y2="0"><stop offset="0.000" stop-color="#003999"/><stop offset="0.067" stop-color="#003399"/><stop offset="0.133" stop-color="#002c99"/><stop offset="0.200" stop-color="#002499"/><stop offset="0.267" stop-color="#1a1b99"/><stop offset="0.333" stop-color="#490f99"/><stop offset="0.400" stop-color="#7c0099"/><stop offset="0.467" stop-color="#990081"/><stop offset="0.533" stop-color="#99005e"/><stop offset="0.600" stop-color="#990047"/><stop offset="0.667" stop-color="#990037"/><stop offset="0.733" stop-color="#99002a"/><stop offset="0.800" stop-color="#990021"/><stop offset="0.867" stop-color="#990019"/><stop offset="0.933" stop-color="#990012"/><stop offset="1.000" stop-color="#99000d"/></linearGradient><linearGradient id="D106" gradientUnits="userSpaceOnUse" x1="15" x2="663" y1="0" y2="0"><stop offset="0.000" stop-color="#003699"/><stop offset="0.067" stop-color="#003099"/><stop offset="0.133" stop-color="#002999"/><stop offset="0.200" stop-color="#002199"/><stop offset="0.267" stop-color="#1b1799"/><stop offset="0.333" stop-color="#490c99"/><stop offset="0.400" stop-color="#7c0099"/><stop offset="0.467" stop-color="#990081"/><stop offset="0.533" stop-color="#99005e"/><stop offset="0.600" stop-color="#990048"/><stop offset="0.667" stop-color="#990037"/><stop offset="0.733" stop-color="#99002b"/><stop offset="0.800" stop-color="#990021"/><stop offset="0.867" stop-color="#990019"/><stop offset="0.933" stop-color="#990013"/><stop offset="1.000" stop-color="#99000d"/></linearGradient><linearGradient id="D107" gradientUnits="userSpaceOnUse" x1="15" x2="663" y1="0" y2="0"><stop offset="0.000" stop-color="#003499"/><stop offset="0.067" stop-color="#002d99"/><stop offset="0.133" stop-color="#002699"/><stop offset="0.200" stop-color="#001e99"/><stop offset="0.267" stop-color="#1c1499"/><stop offset="0.333" stop-color="#4a0899"/><stop offset="0.400" stop-color="#7c0099"/><stop offset="0.467" stop-color="#990082"/><stop offset="0.533" stop-color="#99005f"/><stop offset="0.600" stop-color="#990048"/><stop offset="0.667" stop-color="#990038"/><stop offset="0.733" stop-color="#99002c"/><stop offset="0.800" stop-color="#990022"/><stop offset="0.867" stop-color="#99001b"/><stop offset="0.933" stop-color="#990014"/><stop offset="1.000" stop-color="#99000e"/></linearGradient><linearGradient id="D108" gradientUnits="userSpaceOnUse" x1="15" x2="663" y1="0" y2="0"><stop offset="0.000" stop-color="#003199"/><stop offset="0.067" stop-color="#002b99"/><stop offset="0.133" stop-color="#002499"/><stop offset="0.200" stop-color="#001b99"/><stop offset="0.267" stop-color="#1e1199"/><stop offset="0.333" stop-color="#4b0499"/><stop offset="0.400" stop-color="#7c0099"/><stop offset="0.467" stop-color="#990082"/><stop offset="0.533" stop-color="#990060"/><stop offset="0.600" stop-color="#990049"/><stop offset="0.667" stop-color="#990039"/><stop offset="0.733" stop-color="#99002d"/><stop offset="0.800" stop-color="#990023"/><stop offset="0.867" stop-color="#99001b"/><stop offset="0.933" stop-color="#990015"/><stop offset="1.000" stop-color="#99000f"/></linearGradient><linearGradient id="D109" gradientUnits="userSpaceOnUse" x1="15" x2="663" y1="0" y2="0"><stop offset="0.000" stop-color="#002f99"/><stop offset="0.067" stop-color="#002899"/><stop offset="0.133" stop-color="#002199"/><stop offset="0.200" stop-color="#001899"/><stop offset="0.267" stop-color="#1f0d99"/><stop offset="0.333" stop-color="#4c0199"/><stop offset="0.400" stop-color="#7c0099"/><stop offset="0.467" stop-color="#990082"/><stop offset="0.533" stop-color="#990061"/><stop offset="0.600" stop-color="#99004a"/><stop offset="0.667" stop-color="#99003a"/><stop offset="0.733" stop-color="#99002d"/><stop offset="0.800" stop-color="#990024"/><stop offset="0.867" stop-color="#99001c"/><stop offset="0.933" stop-color="#990015"/><stop offset="1.000" stop-color="#99000f"/></linearGradient><linearGradient id="D110" gradientUnits="userSpaceOnUse" x1="15" x2="663" y1="0" y2="0"><stop offset="0.000" stop-color="#002c99"/><stop offset="0.067" stop-color="#002599"/><stop offset="0.133" stop-color="#001e99"/><stop offset="0.200" stop-color="#001599"/><stop offset="0.267" stop-color="#200a99"/><stop offset="0.333" stop-color="#4c0099"/><stop offset="0.400" stop-color="#7c0099"/><stop offset="0.467" stop-color="#990083"/><stop offset="0.533" stop-color="#990061"/><stop offset="0.600" stop-color="#99004b"/><stop offset="0.667" stop-color="#99003a"/><stop offset="0.733" stop-color="#99002e"/><stop offset="0.800" stop-color="#990024"/><stop offset="0.867" stop-color="#99001c"/><stop offset="0.933" stop-color="#990016"/><stop offset="1.000" stop-color="#990010"/></linearGradient><linearGradient id="D111" gradientUnits="userSpaceOnUse" x1="15" x2="663" y1="0" y2="0"><stop offset="0.000" stop-color="#002a99"/><stop offset="0.067" stop-color="#002399"/><stop offset="0.133" stop-color="#001b99"/><stop offset="0.200" stop-color="#001299"/><stop offset="0.267" stop-color="#210799"/><stop offset="0.333" stop-color="#4d0099"/><stop offset="0.400" stop-color="#7c0099"/><stop offset="0.467" stop-color="#990084"/><stop offset="0.533" stop-color="#990062"/><stop offset="0.600" stop-color="#99004c"/><stop offset="0.667" stop-color="#99003b"/><stop offset="0.733" stop-color="#99002f"/><stop offset="0.800" stop-color="#990025"/><stop offset="0.867" stop-color="#99001d"/><stop offset="0.933" stop-color="#990016"/><stop offset="1.000" stop-color="#990011"/></linearGradient><linearGradient id="D112" gradientUnits="userSpaceOnUse" x1="15" x2="663" y1="0" y2="0"><stop offset="0.000" stop-color="#002799"/><stop offset="0.067" stop-color="#002199"/><stop offset="0.133" stop-color="#001999"/><stop offset="0.200" stop-color="#000f99"/><stop offset="0.267" stop-color="#220499"/><stop offset="0.333" stop-color="#4e0099"/><stop offset="0.400" stop-color="#7c0099"/><stop offset="0.467" stop-color="#990084"/><stop offset="0.533" stop-color="#990063"/><stop offset="0.600" stop-color="#99004c"/><stop offset="0.667" stop-color="#99003c"/><stop offset="0.733" stop-color="#990030"/><stop offset="0.800" stop-color="#990026"/><stop offset="0.867" stop-color="#99001e"/><stop offset="0.933" stop-color="#990017"/><stop offset="1.000" stop-color="#990012"/></linearGradient><linearGradient id="D113" gradientUnits="userSpaceOnUse" x1="15" x2="663" y1="0" y2="0"><stop offset="0.000" stop-color="#002599"/><stop offset="0.067" stop-color="#001e99"/><stop offset="0.133" stop-color="#001699"/><stop offset="0.200" stop-color="#000c99"/><stop offset="0.267" stop-color="#240199"/><stop offset="0.333" stop-color="#4e0099"/><stop offset="0.400" stop-color="#7c0099"/><stop offset="0.467" stop-color="#990085"/><stop offset="0.533" stop-color="#990063"/><stop offset="0.600" stop-color="#99004d"/><stop offset="0.667" stop-color="#99003d"/><stop offset="0.733" stop-color="#990030"/><stop offset="0.800" stop-color="#990027"/><stop offset="0.867" stop-color="#99001e"/><stop offset="0.933" stop-color="#990018"/><stop offset="1.000" stop-color="#990012"/></linearGradient><linearGradient id="D114" gradientUnits="userSpaceOnUse" x1="15" x2="663" y1="0" y2="0"><stop offset="0.000" stop-color="#002299"/><stop offset="0.067" stop-color="#001b99"/><stop offset="0.133" stop-color="#001399"/><stop offset="0.200" stop-color="#000a99"/><stop offset="0.267" stop-color="#250099"/><stop offset="0.333" stop-color="#4f0099"/><stop offset="0.400" stop-color="#7c0099"/><stop offset="0.467" stop-color="#990085"/><stop offset="0.533" stop-color="#990064"/><stop offset="0.600" stop-color="#99004e"/><stop offset="0.667" stop-color="#99003d"/><stop offset="0.733" stop-color="#990031"/><stop offset="0.800" stop-color="#990027"/><stop offset="0.867" stop-color="#99001f"/><stop offset="0.933" stop-color="#990018"/><stop offset="1.000" stop-color="#990013"/></linearGradient><linearGradient id="D115" gradientUnits="userSpaceOnUse" x1="15" x2="663" y1="0" y2="0"><stop offset="0.000" stop-color="#002199"/><stop offset="0.067" stop-color="#001999"/><stop offset="0.133" stop-color="#001099"/><stop offset="0.200" stop-color="#000799"/><stop offset="0.267" stop-color="#260099"/><stop offset="0.333" stop-color="#4f0099"/><stop offset="0.400" stop-color="#7c0099"/><stop offset="0.467" stop-color="#990085"/><stop offset="0.533" stop-color="#990065"/><stop offset="0.600" stop-color="#99004e"/><stop offset="0.667" stop-color="#99003e"/><stop offset="0.733" stop-color="#990031"/><stop offset="0.800" stop-color="#990028"/><stop offset="0.867" stop-color="#99001f"/><stop offset="0.933" stop-color="#990019"/><stop offset="1.000" stop-color="#990013"/></linearGradient><linearGradient id="D116" gradientUnits="userSpaceOnUse" x1="15" x2="663" y1="0" y2="0"><stop offset="0.000" stop-color="#001e99"/><stop offset="0.067" stop-color="#001699"/><stop offset="0.133" stop-color="#000e99"/><stop offset="0.200" stop-color="#000499"/><stop offset="0.267" stop-color="#270099"/><stop offset="0.333" stop-color="#500099"/><stop offset="0.400" stop-color="#7c0099"/><stop offset="0.467" stop-color="#990086"/><stop offset="0.533" stop-color="#990066"/><stop offset="0.600" stop-color="#99004f"/><stop offset="0.667" stop-color="#99003f"/><stop offset="0.733" stop-color="#990033"/><stop offset="0.800" stop-color="#990028"/><stop offset="0.867" stop-color="#990021"/><stop offset="0.933" stop-color="#990019"/><stop offset="1.000" stop-color="#990014"/></linearGradient><linearGradient id="D117" gradientUnits="userSpaceOnUse" x1="15" x2="663" y1="0" y2="0"><stop offset="0.000" stop-color="#001c99"/><stop offset="0.067" stop-color="#001499"/><stop offset="0.133" stop-color="#000c99"/><stop offset="0.200" stop-color="#000199"/><stop offset="0.267" stop-color="#280099"/><stop offset="0.333" stop-color="#510099"/><stop offset="0.400" stop-color="#7c0099"/><stop offset="0.467" stop-color="#990087"/><stop offset="0.533" stop-color="#990066"/><stop offset="0.600" stop-color="#990050"/><stop offset="0.667" stop-color="#99003f"/><stop offset="0.733" stop-color="#990033"/><stop offset="0.800" stop-color="#990029"/><stop offset="0.867" stop-color="#990021"/><stop offset="0.933" stop-color="#99001a"/><stop offset="1.000" stop-color="#990015"/></linearGradient><linearGradient id="D118" gradientUnits="userSpaceOnUse" x1="15" x2="663" y1="0" y2="0"><stop offset="0.000" stop-color="#001999"/><stop offset="0.067" stop-color="#001299"/><stop offset="0.133" stop-color="#000999"/><stop offset="0.200" stop-color="#010099"/><stop offset="0.267" stop-color="#290099"/><stop offset="0.333" stop-color="#510099"/><stop offset="0.400" stop-color="#7c0099"/><stop offset="0.467" stop-color="#990087"/><stop offset="0.533" stop-color="#990067"/><stop offset="0.600" stop-color="#990051"/><stop offset="0.667" stop-color="#990040"/><stop offset="0.733" stop-color="#990034"/><stop offset="0.800" stop-color="#99002a"/><stop offset="0.867" stop-color="#990022"/><stop offset="0.933" stop-color="#99001b"/><stop offset="1.000" stop-color="#990015"/></linearGradient><linearGradient id="D119" gradientUnits="userSpaceOnUse" x1="15" x2="663" y1="0" y2="0"><stop offset="0.000" stop-color="#001799"/><stop offset="0.067" stop-color="#000f99"/><stop offset="0.133" stop-color="#000699"/><stop offset="0.200" stop-color="#030099"/><stop offset="0.267" stop-color="#2a0099"/><stop offset="0.333" stop-color="#520099"/><stop offset="0.400" stop-color="#7c0099"/><stop offset="0.467" stop-color="#990088"/><stop offset="0.533" stop-color="#990067"/><stop offset="0.600" stop-color="#990051"/><stop offset="0.667" stop-color="#990041"/><stop offset="0.733" stop-color="#990034"/><stop offset="0.800" stop-color="#99002a"/><stop offset="0.867" stop-color="#990022"/><stop offset="0.933" stop-color="#99001b"/><stop offset="1.000" stop-color="#990016"/></linearGradient><linearGradient id="D120" gradientUnits="userSpaceOnUse" x1="15" x2="663" y1="0" y2="0"><stop offset="0.000" stop-color="#001599"/><stop offset="0.067" stop-color="#000d99"/><stop offset="0.133" stop-color="#000499"/><stop offset="0.200" stop-color="#040099"/><stop offset="0.267" stop-color="#2b0099"/><stop offset="0.333" stop-color="#520099"/><stop offset="0.400" stop-color="#7c0099"/><stop offset="0.467" stop-color="#990088"/><stop offset="0.533" stop-color="#990068"/><stop offset="0.600" stop-color="#990052"/><stop offset="0.667" stop-color="#990042"/><stop offset="0.733" stop-color="#990035"/><stop offset="0.800" stop-color="#99002b"/><stop offset="0.867" stop-color="#990023"/><stop offset="0.933" stop-color="#99001c"/><stop offset="1.000" stop-color="#990016"/></linearGradient><linearGradient id="D121" gradientUnits="userSpaceOnUse" x1="15" x2="663" y1="0" y2="0"><stop offset="0.000" stop-color="#001399"/><stop offset="0.067" stop-color="#000a99"/><stop offset="0.133" stop-color="#000199"/><stop offset="0.200" stop-color="#060099"/><stop offset="0.267" stop-color="#2c0099"/><stop offset="0.333" stop-color="#520099"/><stop offset="0.400" stop-color="#7c0099"/><stop offset="0.467" stop-color="#990088"/><stop offset="0.533" stop-color="#990069"/><stop offset="0.600" stop-color="#990052"/><stop offset="0.667" stop-color="#990042"/><stop offset="0.733" stop-color="#990036"/><stop offset="0.800" stop-color="#99002b"/><stop offset="0.867" stop-color="#990024"/><stop offset="0.933" stop-color="#99001c"/><stop offset="1.000" stop-color="#990017"/></linearGradient><linearGradient id="D122" gradientUnits="userSpaceOnUse" x1="15" x2="663" y1="0" y2="0"><stop offset="0.000" stop-color="#001099"/><stop offset="0.067" stop-color="#000999"/><stop offset="0.133" stop-color="#000099"/><stop offset="0.200" stop-color="#070099"/><stop offset="0.267" stop-color="#2d0099"/><stop offset="0.333" stop-color="#530099"/><stop offset="0.400" stop-color="#7c0099"/><stop offset="0.467" stop-color="#990089"/><stop offset="0.533" stop-color="#990069"/><stop offset="0.600" stop-color="#990053"/><stop offset="0.667" stop-color="#990043"/><stop offset="0.733" stop-color="#990036"/><stop offset="0.800" stop-color="#99002c"/><stop offset="0.867" stop-color="#990024"/><stop offset="0.933" stop-color="#99001d"/><stop offset="1.000" stop-color="#990017"/></linearGradient><linearGradient id="D123" gradientUnits="userSpaceOnUse" x1="15" x2="663" y1="0" y2="0"><stop offset="0.000" stop-color="#000f99"/><stop offset="0.067" stop-color="#000699"/><stop offset="0.133" stop-color="#000099"/><stop offset="0.200" stop-color="#090099"/><stop offset="0.267" stop-color="#2e0099"/><stop offset="0.333" stop-color="#540099"/><stop offset="0.400" stop-color="#7c0099"/><stop offset="0.467" stop-color="#990089"/><stop offset="0.533" stop-color="#99006a"/><stop offset="0.600" stop-color="#990054"/><stop offset="0.667" stop-color="#990043"/><stop offset="0.733" stop-color="#990037"/><stop offset="0.800" stop-color="#99002d"/><stop offset="0.867" stop-color="#990025"/><stop offset="0.933" stop-color="#99001e"/><stop offset="1.000" stop-color="#990018"/></linearGradient><linearGradient id="D124" gradientUnits="userSpaceOnUse" x1="15" x2="663" y1="0" y2="0"><stop offset="0.000" stop-color="#000c99"/><stop offset="0.067" stop-color="#000399"/><stop offset="0.133" stop-color="#000099"/><stop offset="0.200" stop-color="#0a0099"/><stop offset="0.267" stop-color="#2e0099"/><stop offset="0.333" stop-color="#540099"/><stop offset="0.400" stop-color="#7c0099"/><stop offset="0.467" stop-color="#99008a"/><stop offset="0.533" stop-color="#99006a"/><stop offset="0.600" stop-color="#990054"/><stop offset="0.667" stop-color="#990044"/><stop offset="0.733" stop-color="#990037"/><stop offset="0.800" stop-color="#99002d"/><stop offset="0.867" stop-color="#990025"/><stop offset="0.933" stop-color="#99001e"/><stop offset="1.000" stop-color="#990018"/></linearGradient><linearGradient id="D125" gradientUnits="userSpaceOnUse" x1="15" x2="663" y1="0" y2="0"><stop offset="0.000" stop-color="#000a99"/><stop offset="0.067" stop-color="#000199"/><stop offset="0.133" stop-color="#000099"/><stop offset="0.200" stop-color="#0c0099"/><stop offset="0.267" stop-color="#300099"/><stop offset="0.333" stop-color="#550099"/><stop offset="0.400" stop-color="#7c0099"/><stop offset="0.467" stop-color="#99008a"/><stop offset="0.533" stop-color="#99006b"/><stop offset="0.600" stop-color="#990055"/><stop offset="0.667" stop-color="#990045"/><stop offset="0.733" stop-color="#990038"/><stop offset="0.800" stop-color="#99002e"/><stop offset="0.867" stop-color="#990026"/><stop offset="0.933" stop-color="#99001f"/><stop offset="1.000" stop-color="#990019"/></linearGradient><linearGradient id="D126" gradientUnits="userSpaceOnUse" x1="15" x2="663" y1="0" y2="0"><stop offset="0.000" stop-color="#000899"/><stop offset="0.067" stop-color="#000099"/><stop offset="0.133" stop-color="#000099"/><stop offset="0.200" stop-color="#0d0099"/><stop offset="0.267" stop-color="#300099"/><stop offset="0.333" stop-color="#550099"/><stop offset="0.400" stop-color="#7c0099"/><stop offset="0.467" stop-color="#99008a"/><stop offset="0.533" stop-color="#99006b"/><stop offset="0.600" stop-color="#990055"/><stop offset="0.667" stop-color="#990045"/><stop offset="0.733" stop-color="#990039"/><stop offset="0.800" stop-color="#99002e"/><stop offset="0.867" stop-color="#990027"/><stop offset="0.933" stop-color="#99001f"/><stop offset="1.000" stop-color="#990019"/></linearGradient><linearGradient id="B1" gradientUnits="userSpaceOnUse" x1="145" x2="615" y1="0" y2="0"><stop offset="0.000" stop-color="#00ff0c"/><stop offset="0.042" stop-color="#00ff06"/><stop offset="0.083" stop-color="#00ff00"/><stop offset="0.125" stop-color="#00ff00"/><stop offset="0.167" stop-color="#00ff00"/><stop offset="0.208" stop-color="#00ff00"/><stop offset="0.250" stop-color="#00ff00"/><stop offset="0.292" stop-color="#00ff00"/><stop offset="0.333" stop-color="#04ff00"/><stop offset="0.375" stop-color="#1fff00"/><stop offset="0.417" stop-color="#38ff00"/><stop offset="0.458" stop-color="#51ff00"/><stop offset="0.500" stop-color="#6bff00"/><stop offset="0.542" stop-color="#86ff00"/><stop offset="0.583" stop-color="#a1ff00"/><stop offset="0.625" stop-color="#bdff00"/><stop offset="0.667" stop-color="#dbff00"/><stop offset="0.708" stop-color="#faff00"/><stop offset="0.750" stop-color="#ffe700"/><stop offset="0.792" stop-color="#ffce00"/><stop offset="0.833" stop-color="#ffb900"/><stop offset="0.875" stop-color="#ffa700"/><stop offset="0.917" stop-color="#ff9800"/><stop offset="0.958" stop-color="#ff8a00"/><stop offset="1.000" stop-color="#ff7e00"/></linearGradient><linearGradient id="B2" gradientUnits="userSpaceOnUse" x1="145" x2="615" y1="0" y2="0"><stop offset="0.000" stop-color="#00ff0f"/><stop offset="0.042" stop-color="#00ff09"/><stop offset="0.083" stop-color="#00ff02"/><stop offset="0.125" stop-color="#00ff00"/><stop offset="0.167" stop-color="#00ff00"/><stop offset="0.208" stop-color="#00ff00"/><stop offset="0.250" stop-color="#00ff00"/><stop offset="0.292" stop-color="#00ff00"/><stop offset="0.333" stop-color="#06ff00"/><stop offset="0.375" stop-color="#21ff00"/><stop offset="0.417" stop-color="#3bff00"/><stop offset="0.458" stop-color="#54ff00"/><stop offset="0.500" stop-color="#6fff00"/><stop offset="0.542" stop-color="#89ff00"/><stop offset="0.583" stop-color="#a5ff00"/><stop offset="0.625" stop-color="#c2ff00"/><stop offset="0.667" stop-color="#e0ff00"/><stop offset="0.708" stop-color="#fffe00"/><stop offset="0.750" stop-color="#ffe100"/><stop offset="0.792" stop-color="#ffc900"/><stop offset="0.833" stop-color="#ffb500"/><stop offset="0.875" stop-color="#ffa400"/><stop offset="0.917" stop-color="#ff9400"/><stop offset="0.958" stop-color="#ff8700"/><stop offset="1.000" stop-color="#ff7b00"/></linearGradient><linearGradient id="B3" gradientUnits="userSpaceOnUse" x1="145" x2="615" y1="0" y2="0"><stop offset="0.000" stop-color="#00ff11"/><stop offset="0.042" stop-color="#00ff0b"/><stop offset="0.083" stop-color="#00ff05"/><stop offset="0.125" stop-color="#00ff00"/><stop offset="0.167" stop-color="#00ff00"/><stop offset="0.208" stop-color="#00ff00"/><stop offset="0.250" stop-color="#00ff00"/><stop offset="0.292" stop-color="#00ff00"/><stop offset="0.333" stop-color="#09ff00"/><stop offset="0.375" stop-color="#24ff00"/><stop offset="0.417" stop-color="#3dff00"/><stop offset="0.458" stop-color="#57ff00"/><stop offset="0.500" stop-color="#72ff00"/><stop offset="0.542" stop-color="#8dff00"/><stop offset="0.583" stop-color="#aaff00"/><stop offset="0.625" stop-color="#c7ff00"/><stop offset="0.667" stop-color="#e5ff00"/><stop offset="0.708" stop-color="#fff900"/><stop offset="0.750" stop-color="#ffdc00"/><stop offset="0.792" stop-color="#ffc500"/><stop offset="0.833" stop-color="#ffb100"/><stop offset="0.875" stop-color="#ffa000"/><stop offset="0.917" stop-color="#ff9100"/><stop offset="0.958" stop-color="#ff8400"/><stop offset="1.000" stop-color="#ff7900"/></linearGradient><linearGradient id="B4" gradientUnits="userSpaceOnUse" x1="145" x2="615" y1="0" y2="0"><stop offset="0.000" stop-color="#00ff14"/><stop offset="0.042" stop-color="#00ff0e"/><stop offset="0.083" stop-color="#00ff07"/><stop offset="0.125" stop-color="#00ff00"/><stop offset="0.167" stop-color="#00ff00"/><stop offset="0.208" stop-color="#00ff00"/><stop offset="0.250" stop-color="#00ff00"/><stop offset="0.292" stop-color="#00ff00"/><stop offset="0.333" stop-color="#0bff00"/><stop offset="0.375" stop-color="#26ff00"/><stop offset="0.417" stop-color="#40ff00"/><stop offset="0.458" stop-color="#5bff00"/><stop offset="0.500" stop-color="#76ff00"/><stop offset="0.542" stop-color="#91ff00"/><stop offset="0.583" stop-color="#aeff00"/><stop offset="0.625" stop-color="#ccff00"/><stop offset="0.667" stop-color="#ebff00"/><stop offset="0.708" stop-color="#fff300"/><stop offset="0.750" stop-color="#ffd800"/><stop offset="0.792" stop-color="#ffc100"/><stop offset="0.833" stop-color="#ffad00"/><stop offset="0.875" stop-color="#ff9c00"/><stop offset="0.917" stop-color="#ff8e00"/><stop offset="0.958" stop-color="#ff8100"/><stop offset="1.000" stop-color="#ff7600"/></linearGradient><linearGradient id="B5" gradientUnits="userSpaceOnUse" x1="145" x2="615" y1="0" y2="0"><stop offset="0.000" stop-color="#00ff16"/><stop offset="0.042" stop-color="#00ff10"/><stop offset="0.083" stop-color="#00ff0a"/><stop offset="0.125" stop-color="#00ff03"/><stop offset="0.167" stop-color="#00ff00"/><stop offset="0.208" stop-color="#00ff00"/><stop offset="0.250" stop-color="#00ff00"/><stop offset="0.292" stop-color="#00ff00"/><stop offset="0.333" stop-color="#0eff00"/><stop offset="0.375" stop-color="#29ff00"/><stop offset="0.417" stop-color="#43ff00"/><stop offset="0.458" stop-color="#5eff00"/><stop offset="0.500" stop-color="#79ff00"/><stop offset="0.542" stop-color="#95ff00"/><stop offset="0.583" stop-color="#b3ff00"/><stop offset="0.625" stop-color="#d1ff00"/><stop offset="0.667" stop-color="#f1ff00"/><stop offset="0.708" stop-color="#ffed00"/><stop offset="0.750" stop-color="#ffd300"/><stop offset="0.792" stop-color="#ffbc00"/><stop offset="0.833" stop-color="#ffa900"/><stop offset="0.875" stop-color="#ff9900"/><stop offset="0.917" stop-color="#ff8b00"/><stop offset="0.958" stop-color="#ff7e00"/><stop offset="1.000" stop-color="#ff7300"/></linearGradient><linearGradient id="B6" gradientUnits="userSpaceOnUse" x1="145" x2="615" y1="0" y2="0"><stop offset="0.000" stop-color="#00ff18"/><stop offset="0.042" stop-color="#00ff13"/><stop offset="0.083" stop-color="#00ff0d"/><stop offset="0.125" stop-color="#00ff06"/><stop offset="0.167" stop-color="#00ff00"/><stop offset="0.208" stop-color="#00ff00"/><stop offset="0.250" stop-color="#00ff00"/><stop offset="0.292" stop-color="#00ff00"/><stop offset="0.333" stop-color="#10ff00"/><stop offset="0.375" stop-color="#2bff00"/><stop offset="0.417" stop-color="#46ff00"/><stop offset="0.458" stop-color="#61ff00"/><stop offset="0.500" stop-color="#7dff00"/><stop offset="0.542" stop-color="#99ff00"/><stop offset="0.583" stop-color="#b7ff00"/><stop offset="0.625" stop-color="#d6ff00"/><stop offset="0.667" stop-color="#f6ff00"/><stop offset="0.708" stop-color="#ffe800"/><stop offset="0.750" stop-color="#ffce00"/><stop offset="0.792" stop-color="#ffb800"/><stop offset="0.833" stop-color="#ffa500"/><stop offset="0.875" stop-color="#ff9500"/><stop offset="0.917" stop-color="#ff8700"/><stop offset="0.958" stop-color="#ff7b00"/><stop offset="1.000" stop-color="#ff7000"/></linearGradient><linearGradient id="B7" gradientUnits="userSpaceOnUse" x1="145" x2="615" y1="0" y2="0"><stop offset="0.000" stop-color="#00ff1b"/><stop offset="0.042" stop-color="#00ff15"/><stop offset="0.083" stop-color="#00ff0f"/><stop offset="0.125" stop-color="#00ff09"/><stop offset="0.167" stop-color="#00ff01"/><stop offset="0.208" stop-color="#00ff00"/><stop offset="0.250" stop-color="#00ff00"/><stop offset="0.292" stop-color="#00ff00"/><stop offset="0.333" stop-color="#13ff00"/><stop offset="0.375" stop-color="#2eff00"/><stop offset="0.417" stop-color="#49ff00"/><stop offset="0.458" stop-color="#65ff00"/><stop offset="0.500" stop-color="#81ff00"/><stop offset="0.542" stop-color="#9eff00"/><stop offset="0.583" stop-color="#bcff00"/><stop offset="0.625" stop-color="#dbff00"/><stop offset="0.667" stop-color="#fcff00"/><stop offset="0.708" stop-color="#ffe300"/><stop offset="0.750" stop-color="#ffc900"/><stop offset="0.792" stop-color="#ffb400"/><stop offset="0.833" stop-color="#ffa100"/><stop offset="0.875" stop-color="#ff9200"/><stop offset="0.917" stop-color="#ff8400"/><stop offset="0.958" stop-color="#ff7800"/><stop offset="1.000" stop-color="#ff6d00"/></linearGradient><linearGradient id="B8" gradientUnits="userSpaceOnUse" x1="145" x2="615" y1="0" y2="0"><stop offset="0.000" stop-color="#00ff1e"/><stop offset="0.042" stop-color="#00ff18"/><stop offset="0.083" stop-color="#00ff12"/><stop offset="0.125" stop-color="#00ff0c"/><stop offset="0.167" stop-color="#00ff04"/><stop offset="0.208" stop-color="#00ff00"/><stop offset="0.250" stop-color="#00ff00"/><stop offset="0.292" stop-color="#00ff00"/><stop offset="0.333" stop-color="#15ff00"/><stop offset="0.375" stop-color="#31ff00"/><stop offset="0.417" stop-color="#4cff00"/><stop offset="0.458" stop-color="#68ff00"/><stop offset="0.500" stop-color="#85ff00"/><stop offset="0.542" stop-color="#a2ff00"/><stop offset="0.583" stop-color="#c1ff00"/><stop offset="0.625" stop-color="#e1ff00"/><stop offset="0.667" stop-color="#fffb00"/><stop offset="0.708" stop-color="#ffdd00"/><stop offset="0.750" stop-color="#ffc400"/><stop offset="0.792" stop-color="#ffaf00"/><stop offset="0.833" stop-color="#ff9e00"/><stop offset="0.875" stop-color="#ff8e00"/><stop offset="0.917" stop-color="#ff8100"/><stop offset="0.958" stop-color="#ff7500"/><stop offset="1.000" stop-color="#ff6b00"/></linearGradient><linearGradient id="B9" gradientUnits="userSpaceOnUse" x1="145" x2="615" y1="0" y2="0"><stop offset="0.000" stop-color="#00ff20"/><stop offset="0.042" stop-color="#00ff1b"/><stop offset="0.083" stop-color="#00ff15"/><stop offset="0.125" stop-color="#00ff0e"/><stop offset="0.167" stop-color="#00ff07"/><stop offset="0.208" stop-color="#00ff00"/><stop offset="0.250" stop-color="#00ff00"/><stop offset="0.292" stop-color="#00ff00"/><stop offset="0.333" stop-color="#18ff00"/><stop offset="0.375" stop-color="#34ff00"/><stop offset="0.417" stop-color="#4fff00"/><stop offset="0.458" stop-color="#6cff00"/><stop offset="0.500" stop-color="#89ff00"/><stop offset="0.542" stop-color="#a7ff00"/><stop offset="0.583" stop-color="#c6ff00"/><stop offset="0.625" stop-color="#e7ff00"/><stop offset="0.667" stop-color="#fff500"/><stop offset="0.708" stop-color="#ffd800"/><stop offset="0.750" stop-color="#ffc000"/><stop offset="0.792" stop-color="#ffab00"/><stop offset="0.833" stop-color="#ff9a00"/><stop offset="0.875" stop-color="#ff8b00"/><stop offset="0.917" stop-color="#ff7e00"/><stop offset="0.958" stop-color="#ff7200"/><stop offset="1.000" stop-color="#ff6800"/></linearGradient><linearGradient id="B10" gradientUnits="userSpaceOnUse" x1="145" x2="615" y1="0" y2="0"><stop offset="0.000" stop-color="#00ff23"/><stop offset="0.042" stop-color="#00ff1d"/><stop offset="0.083" stop-color="#00ff17"/><stop offset="0.125" stop-color="#00ff11"/><stop offset="0.167" stop-color="#00ff0a"/><stop offset="0.208" stop-color="#00ff02"/><stop offset="0.250" stop-color="#00ff00"/><stop offset="0.292" stop-color="#00ff00"/><stop offset="0.333" stop-color="#1bff00"/><stop offset="0.375" stop-color="#37ff00"/><stop offset="0.417" stop-color="#53ff00"/><stop offset="0.458" stop-color="#6fff00"/><stop offset="0.500" stop-color="#8dff00"/><stop offset="0.542" stop-color="#abff00"/><stop offset="0.583" stop-color="#cbff00"/><stop offset="0.625" stop-color="#edff00"/><stop offset="0.667" stop-color="#ffef00"/><stop offset="0.708" stop-color="#ffd300"/><stop offset="0.750" stop-color="#ffbb00"/><stop offset="0.792" stop-color="#ffa700"/><stop offset="0.833" stop-color="#ff9600"/><stop offset="0.875" stop-color="#ff8800"/><stop offset="0.917" stop-color="#ff7b00"/><stop offset="0.958" stop-color="#ff6f00"/><stop offset="1.000" stop-color="#ff6500"/></linearGradient><linearGradient id="B11" gradientUnits="userSpaceOnUse" x1="145" x2="615" y1="0" y2="0"><stop offset="0.000" stop-color="#00ff25"/><stop offset="0.042" stop-color="#00ff20"/><stop offset="0.083" stop-color="#00ff1a"/><stop offset="0.125" stop-color="#00ff14"/><stop offset="0.167" stop-color="#00ff0d"/><stop offset="0.208" stop-color="#00ff06"/><stop offset="0.250" stop-color="#00ff00"/><stop offset="0.292" stop-color="#00ff00"/><stop offset="0.333" stop-color="#1dff00"/><stop offset="0.375" stop-color="#3aff00"/><stop offset="0.417" stop-color="#56ff00"/><stop offset="0.458" stop-color="#73ff00"/><stop offset="0.500" stop-color="#91ff00"/><stop offset="0.542" stop-color="#b0ff00"/><stop offset="0.583" stop-color="#d1ff00"/><stop offset="0.625" stop-color="#f3ff00"/><stop offset="0.667" stop-color="#ffea00"/><stop offset="0.708" stop-color="#ffce00"/><stop offset="0.750" stop-color="#ffb700"/><stop offset="0.792" stop-color="#ffa300"/><stop offset="0.833" stop-color="#ff9300"/><stop offset="0.875" stop-color="#ff8400"/><stop offset="0.917" stop-color="#ff7800"/><stop offset="0.958" stop-color="#ff6d00"/><stop offset="1.000" stop-color="#ff6300"/></linearGradient><linearGradient id="B12" gradientUnits="userSpaceOnUse" x1="145" x2="615" y1="0" y2="0"><stop offset="0.000" stop-color="#00ff28"/><stop offset="0.042" stop-color="#00ff23"/><stop offset="0.083" stop-color="#00ff1d"/><stop offset="0.125" stop-color="#00ff17"/><stop offset="0.167" stop-color="#00ff10"/><stop offset="0.208" stop-color="#00ff09"/><stop offset="0.250" stop-color="#00ff00"/><stop offset="0.292" stop-color="#01ff00"/><stop offset="0.333" stop-color="#20ff00"/><stop offset="0.375" stop-color="#3dff00"/><stop offset="0.417" stop-color="#59ff00"/><stop offset="0.458" stop-color="#77ff00"/><stop offset="0.500" stop-color="#95ff00"/><stop offset="0.542" stop-color="#b5ff00"/><stop offset="0.583" stop-color="#d6ff00"/><stop offset="0.625" stop-color="#f9ff00"/><stop offset="0.667" stop-color="#ffe400"/><stop offset="0.708" stop-color="#ffc900"/><stop offset="0.750" stop-color="#ffb200"/><stop offset="0.792" stop-color="#ff9f00"/><stop offset="0.833" stop-color="#ff8f00"/><stop offset="0.875" stop-color="#ff8100"/><stop offset="0.917" stop-color="#ff7500"/><stop offset="0.958" stop-color="#ff6a00"/><stop offset="1.000" stop-color="#ff6000"/></linearGradient><linearGradient id="B13" gradientUnits="userSpaceOnUse" x1="145" x2="615" y1="0" y2="0"><stop offset="0.000" stop-color="#00ff2b"/><stop offset="0.042" stop-color="#00ff25"/><stop offset="0.083" stop-color="#00ff20"/><stop offset="0.125" stop-color="#00ff1a"/><stop offset="0.167" stop-color="#00ff13"/><stop offset="0.208" stop-color="#00ff0c"/><stop offset="0.250" stop-color="#00ff04"/><stop offset="0.292" stop-color="#04ff00"/><stop offset="0.333" stop-color="#23ff00"/><stop offset="0.375" stop-color="#40ff00"/><stop offset="0.417" stop-color="#5dff00"/><stop offset="0.458" stop-color="#7bff00"/><stop offset="0.500" stop-color="#9aff00"/><stop offset="0.542" stop-color="#baff00"/><stop offset="0.583" stop-color="#dcff00"/><stop offset="0.625" stop-color="#ffff00"/><stop offset="0.667" stop-color="#ffde00"/><stop offset="0.708" stop-color="#ffc400"/><stop offset="0.750" stop-color="#ffae00"/><stop offset="0.792" stop-color="#ff9b00"/><stop offset="0.833" stop-color="#ff8b00"/><stop offset="0.875" stop-color="#ff7e00"/><stop offset="0.917" stop-color="#ff7200"/><stop offset="0.958" stop-color="#ff6700"/><stop offset="1.000" stop-color="#ff5d00"/></linearGradient><linearGradient id="B14" gradientUnits="userSpaceOnUse" x1="145" x2="615" y1="0" y2="0"><stop offset="0.000" stop-color="#00ff2e"/><stop offset="0.042" stop-color="#00ff28"/><stop offset="0.083" stop-color="#00ff23"/><stop offset="0.125" stop-color="#00ff1d"/><stop offset="0.167" stop-color="#00ff16"/><stop offset="0.208" stop-color="#00ff0f"/><stop offset="0.250" stop-color="#00ff07"/><stop offset="0.292" stop-color="#07ff00"/><stop offset="0.333" stop-color="#26ff00"/><stop offset="0.375" stop-color="#43ff00"/><stop offset="0.417" stop-color="#61ff00"/><stop offset="0.458" stop-color="#7fff00"/><stop offset="0.500" stop-color="#9fff00"/><stop offset="0.542" stop-color="#c0ff00"/><stop offset="0.583" stop-color="#e2ff00"/><stop offset="0.625" stop-color="#fff800"/><stop offset="0.667" stop-color="#ffd900"/><stop offset="0.708" stop-color="#ffbf00"/><stop offset="0.750" stop-color="#ffa900"/><stop offset="0.792" stop-color="#ff9700"/><stop offset="0.833" stop-color="#ff8800"/><stop offset="0.875" stop-color="#ff7a00"/><stop offset="0.917" stop-color="#ff6f00"/><stop offset="0.958" stop-color="#ff6400"/><stop offset="1.000" stop-color="#ff5b00"/></linearGradient><linearGradient id="B15" gradientUnits="userSpaceOnUse" x1="145" x2="615" y1="0" y2="0"><stop offset="0.000" stop-color="#00ff31"/><stop offset="0.042" stop-color="#00ff2b"/><stop offset="0.083" stop-color="#00ff26"/><stop offset="0.125" stop-color="#00ff20"/><stop offset="0.167" stop-color="#00ff19"/><stop offset="0.208" stop-color="#00ff12"/><stop offset="0.250" stop-color="#00ff0a"/><stop offset="0.292" stop-color="#0aff02"/><stop offset="0.333" stop-color="#29ff00"/><stop offset="0.375" stop-color="#46ff00"/><stop offset="0.417" stop-color="#64ff00"/><stop offset="0.458" stop-color="#83ff00"/><stop offset="0.500" stop-color="#a3ff00"/><stop offset="0.542" stop-color="#c5ff00"/><stop offset="0.583" stop-color="#e8ff00"/><stop offset="0.625" stop-color="#fff200"/><stop offset="0.667" stop-color="#ffd300"/><stop offset="0.708" stop-color="#ffba00"/><stop offset="0.750" stop-color="#ffa500"/><stop offset="0.792" stop-color="#ff9400"/><stop offset="0.833" stop-color="#ff8400"/><stop offset="0.875" stop-color="#ff7700"/><stop offset="0.917" stop-color="#ff6c00"/><stop offset="0.958" stop-color="#ff6100"/><stop offset="1.000" stop-color="#ff5800"/></linearGradient><linearGradient id="B16" gradientUnits="userSpaceOnUse" x1="145" x2="615" y1="0" y2="0"><stop offset="0.000" stop-color="#00ff33"/><stop offset="0.042" stop-color="#00ff2e"/><stop offset="0.083" stop-color="#00ff29"/><stop offset="0.125" stop-color="#00ff23"/><stop offset="0.167" stop-color="#00ff1c"/><stop offset="0.208" stop-color="#00ff15"/><stop offset="0.250" stop-color="#00ff0e"/><stop offset="0.292" stop-color="#0dff05"/><stop offset="0.333" stop-color="#2cff00"/><stop offset="0.375" stop-color="#4aff00"/><stop offset="0.417" stop-color="#68ff00"/><stop offset="0.458" stop-color="#88ff00"/><stop offset="0.500" stop-color="#a8ff00"/><stop offset="0.542" stop-color="#cbff00"/><stop offset="0.583" stop-color="#eeff00"/><stop offset="0.625" stop-color="#ffeb00"/><stop offset="0.667" stop-color="#ffce00"/><stop offset="0.708" stop-color="#ffb500"/><stop offset="0.750" stop-color="#ffa100"/><stop offset="0.792" stop-color="#ff9000"/><stop offset="0.833" stop-color="#ff8100"/><stop offset="0.875" stop-color="#ff7400"/><stop offset="0.917" stop-color="#ff6900"/><stop offset="0.958" stop-color="#ff5f00"/><stop offset="1.000" stop-color="#ff5600"/></linearGradient><linearGradient id="B17" gradientUnits="userSpaceOnUse" x1="145" x2="615" y1="0" y2="0"><stop offset="0.000" stop-color="#00ff36"/><stop offset="0.042" stop-color="#00ff31"/><stop offset="0.083" stop-color="#00ff2c"/><stop offset="0.125" stop-color="#00ff26"/><stop offset="0.167" stop-color="#00ff1f"/><stop offset="0.208" stop-color="#00ff18"/><stop offset="0.250" stop-color="#00ff11"/><stop offset="0.292" stop-color="#10ff09"/><stop offset="0.333" stop-color="#2fff00"/><stop offset="0.375" stop-color="#4dff00"/><stop offset="0.417" stop-color="#6cff00"/><stop offset="0.458" stop-color="#8cff00"/><stop offset="0.500" stop-color="#aeff00"/><stop offset="0.542" stop-color="#d0ff00"/><stop offset="0.583" stop-color="#f5ff00"/><stop offset="0.625" stop-color="#ffe500"/><stop offset="0.667" stop-color="#ffc800"/><stop offset="0.708" stop-color="#ffb100"/><stop offset="0.750" stop-color="#ff9d00"/><stop offset="0.792" stop-color="#ff8c00"/><stop offset="0.833" stop-color="#ff7d00"/><stop offset="0.875" stop-color="#ff7100"/><stop offset="0.917" stop-color="#ff6600"/><stop offset="0.958" stop-color="#ff5c00"/><stop offset="1.000" stop-color="#ff5300"/></linearGradient><linearGradient id="B18" gradientUnits="userSpaceOnUse" x1="145" x2="615" y1="0" y2="0"><stop offset="0.000" stop-color="#00ff39"/><stop offset="0.042" stop-color="#00ff34"/><stop offset="0.083" stop-color="#00ff2f"/><stop offset="0.125" stop-color="#00ff29"/><stop offset="0.167" stop-color="#00ff22"/><stop offset="0.208" stop-color="#00ff1c"/><stop offset="0.250" stop-color="#00ff14"/><stop offset="0.292" stop-color="#13ff0c"/><stop offset="0.333" stop-color="#32ff03"/><stop offset="0.375" stop-color="#51ff00"/><stop offset="0.417" stop-color="#70ff00"/><stop offset="0.458" stop-color="#91ff00"/><stop offset="0.500" stop-color="#b3ff00"/><stop offset="0.542" stop-color="#d6ff00"/><stop offset="0.583" stop-color="#fcff00"/><stop offset="0.625" stop-color="#ffdf00"/><stop offset="0.667" stop-color="#ffc300"/><stop offset="0.708" stop-color="#ffac00"/><stop offset="0.750" stop-color="#ff9900"/><stop offset="0.792" stop-color="#ff8800"/><stop offset="0.833" stop-color="#ff7a00"/><stop offset="0.875" stop-color="#ff6e00"/><stop offset="0.917" stop-color="#ff6300"/><stop offset="0.958" stop-color="#ff5900"/><stop offset="1.000" stop-color="#ff5100"/></linearGradient><linearGradient id="B19" gradientUnits="userSpaceOnUse" x1="145" x2="615" y1="0" y2="0"><stop offset="0.000" stop-color="#00ff3d"/><stop offset="0.042" stop-color="#00ff37"/><stop offset="0.083" stop-color="#00ff32"/><stop offset="0.125" stop-color="#00ff2c"/><stop offset="0.167" stop-color="#00ff26"/><stop offset="0.208" stop-color="#00ff1f"/><stop offset="0.250" stop-color="#00ff18"/><stop offset="0.292" stop-color="#15ff10"/><stop offset="0.333" stop-color="#35ff07"/><stop offset="0.375" stop-color="#54ff00"/><stop offset="0.417" stop-color="#74ff00"/><stop offset="0.458" stop-color="#96ff00"/><stop offset="0.500" stop-color="#b8ff00"/><stop offset="0.542" stop-color="#ddff00"/><stop offset="0.583" stop-color="#fffb00"/><stop offset="0.625" stop-color="#ffd900"/><stop offset="0.667" stop-color="#ffbe00"/><stop offset="0.708" stop-color="#ffa700"/><stop offset="0.750" stop-color="#ff9400"/><stop offset="0.792" stop-color="#ff8400"/><stop offset="0.833" stop-color="#ff7700"/><stop offset="0.875" stop-color="#ff6b00"/><stop offset="0.917" stop-color="#ff6000"/><stop offset="0.958" stop-color="#ff5600"/><stop offset="1.000" stop-color="#ff4e00"/></linearGradient><linearGradient id="B20" gradientUnits="userSpaceOnUse" x1="145" x2="615" y1="0" y2="0"><stop offset="0.000" stop-color="#00ff40"/><stop offset="0.042" stop-color="#00ff3b"/><stop offset="0.083" stop-color="#00ff35"/><stop offset="0.125" stop-color="#00ff2f"/><stop offset="0.167" stop-color="#00ff29"/><stop offset="0.208" stop-color="#00ff22"/><stop offset="0.250" stop-color="#00ff1b"/><stop offset="0.292" stop-color="#18ff13"/><stop offset="0.333" stop-color="#38ff0b"/><stop offset="0.375" stop-color="#58ff00"/><stop offset="0.417" stop-color="#79ff00"/><stop offset="0.458" stop-color="#9bff00"/><stop offset="0.500" stop-color="#beff00"/><stop offset="0.542" stop-color="#e3ff00"/><stop offset="0.583" stop-color="#fff400"/><stop offset="0.625" stop-color="#ffd300"/><stop offset="0.667" stop-color="#ffb900"/><stop offset="0.708" stop-color="#ffa300"/><stop offset="0.750" stop-color="#ff9000"/><stop offset="0.792" stop-color="#ff8100"/><stop offset="0.833" stop-color="#ff7300"/><stop offset="0.875" stop-color="#ff6700"/><stop offset="0.917" stop-color="#ff5d00"/><stop offset="0.958" stop-color="#ff5400"/><stop offset="1.000" stop-color="#ff4b00"/></linearGradient><linearGradient id="B21" gradientUnits="userSpaceOnUse" x1="145" x2="615" y1="0" y2="0"><stop offset="0.000" stop-color="#00ff43"/><stop offset="0.042" stop-color="#00ff3e"/><stop offset="0.083" stop-color="#00ff38"/><stop offset="0.125" stop-color="#00ff33"/><stop offset="0.167" stop-color="#00ff2c"/><stop offset="0.208" stop-color="#00ff26"/><stop offset="0.250" stop-color="#00ff1f"/><stop offset="0.292" stop-color="#1bff17"/><stop offset="0.333" stop-color="#3cff0e"/><stop offset="0.375" stop-color="#5cff05"/><stop offset="0.417" stop-color="#7dff00"/><stop offset="0.458" stop-color="#a0ff00"/><stop offset="0.500" stop-color="#c4ff00"/><stop offset="0.542" stop-color="#eaff00"/><stop offset="0.583" stop-color="#ffed00"/><stop offset="0.625" stop-color="#ffcd00"/><stop offset="0.667" stop-color="#ffb400"/><stop offset="0.708" stop-color="#ff9e00"/><stop offset="0.750" stop-color="#ff8c00"/><stop offset="0.792" stop-color="#ff7d00"/><stop offset="0.833" stop-color="#ff7000"/><stop offset="0.875" stop-color="#ff6400"/><stop offset="0.917" stop-color="#ff5a00"/><stop offset="0.958" stop-color="#ff5100"/><stop offset="1.000" stop-color="#ff4900"/></linearGradient><linearGradient id="B22" gradientUnits="userSpaceOnUse" x1="145" x2="615" y1="0" y2="0"><stop offset="0.000" stop-color="#00ff46"/><stop offset="0.042" stop-color="#00ff41"/><stop offset="0.083" stop-color="#00ff3c"/><stop offset="0.125" stop-color="#00ff36"/><stop offset="0.167" stop-color="#00ff30"/><stop offset="0.208" stop-color="#00ff29"/><stop offset="0.250" stop-color="#00ff22"/><stop offset="0.292" stop-color="#1fff1b"/><stop offset="0.333" stop-color="#3fff12"/><stop offset="0.375" stop-color="#60ff09"/><stop offset="0.417" stop-color="#82ff00"/><stop offset="0.458" stop-color="#a5ff00"/><stop offset="0.500" stop-color="#caff00"/><stop offset="0.542" stop-color="#f1ff00"/><stop offset="0.583" stop-color="#ffe700"/><stop offset="0.625" stop-color="#ffc800"/><stop offset="0.667" stop-color="#ffaf00"/><stop offset="0.708" stop-color="#ff9a00"/><stop offset="0.750" stop-color="#ff8800"/><stop offset="0.792" stop-color="#ff7a00"/><stop offset="0.833" stop-color="#ff6d00"/><stop offset="0.875" stop-color="#ff6100"/><stop offset="0.917" stop-color="#ff5700"/><stop offset="0.958" stop-color="#ff4f00"/><stop offset="1.000" stop-color="#ff4700"/></linearGradient><linearGradient id="B23" gradientUnits="userSpaceOnUse" x1="145" x2="615" y1="0" y2="0"><stop offset="0.000" stop-color="#00ff4a"/><stop offset="0.042" stop-color="#00ff45"/><stop offset="0.083" stop-color="#00ff3f"/><stop offset="0.125" stop-color="#00ff39"/><stop offset="0.167" stop-color="#00ff33"/><stop offset="0.208" stop-color="#00ff2d"/><stop offset="0.250" stop-color="#00ff26"/><stop offset="0.292" stop-color="#22ff1e"/><stop offset="0.333" stop-color="#43ff16"/><stop offset="0.375" stop-color="#64ff0d"/><stop offset="0.417" stop-color="#87ff02"/><stop offset="0.458" stop-color="#aaff00"/><stop offset="0.500" stop-color="#d0ff00"/><stop offset="0.542" stop-color="#f8ff00"/><stop offset="0.583" stop-color="#ffe000"/><stop offset="0.625" stop-color="#ffc200"/><stop offset="0.667" stop-color="#ffaa00"/><stop offset="0.708" stop-color="#ff9600"/><stop offset="0.750" stop-color="#ff8500"/><stop offset="0.792" stop-color="#ff7600"/><stop offset="0.833" stop-color="#ff6900"/><stop offset="0.875" stop-color="#ff5e00"/><stop offset="0.917" stop-color="#ff5500"/><stop offset="0.958" stop-color="#ff4c00"/><stop offset="1.000" stop-color="#ff4400"/></linearGradient><linearGradient id="B24" gradientUnits="userSpaceOnUse" x1="145" x2="615" y1="0" y2="0"><stop offset="0.000" stop-color="#00ff4d"/><stop offset="0.042" stop-color="#00ff48"/><stop offset="0.083" stop-color="#00ff43"/><stop offset="0.125" stop-color="#00ff3d"/><stop offset="0.167" stop-color="#00ff37"/><stop offset="0.208" stop-color="#00ff31"/><stop offset="0.250" stop-color="#02ff2a"/><stop offset="0.292" stop-color="#25ff22"/><stop offset="0.333" stop-color="#46ff1a"/><stop offset="0.375" stop-color="#68ff11"/><stop offset="0.417" stop-color="#8bff07"/><stop offset="0.458" stop-color="#b0ff00"/><stop offset="0.500" stop-color="#d7ff00"/><stop offset="0.542" stop-color="#ffff00"/><stop offset="0.583" stop-color="#ffda00"/><stop offset="0.625" stop-color="#ffbd00"/><stop offset="0.667" stop-color="#ffa500"/><stop offset="0.708" stop-color="#ff9100"/><stop offset="0.750" stop-color="#ff8100"/><stop offset="0.792" stop-color="#ff7300"/><stop offset="0.833" stop-color="#ff6600"/><stop offset="0.875" stop-color="#ff5b00"/><stop offset="0.917" stop-color="#ff5200"/><stop offset="0.958" stop-color="#ff4900"/><stop offset="1.000" stop-color="#ff4200"/></linearGradient><linearGradient id="B25" gradientUnits="userSpaceOnUse" x1="145" x2="615" y1="0" y2="0"><stop offset="0.000" stop-color="#00ff51"/><stop offset="0.042" stop-color="#00ff4c"/><stop offset="0.083" stop-color="#00ff46"/><stop offset="0.125" stop-color="#00ff41"/><stop offset="0.167" stop-color="#00ff3b"/><stop offset="0.208" stop-color="#00ff34"/><stop offset="0.250" stop-color="#05ff2d"/><stop offset="0.292" stop-color="#28ff26"/><stop offset="0.333" stop-color="#4aff1e"/><stop offset="0.375" stop-color="#6dff15"/><stop offset="0.417" stop-color="#91ff0b"/><stop offset="0.458" stop-color="#b6ff00"/><stop offset="0.500" stop-color="#ddff00"/><stop offset="0.542" stop-color="#fff700"/><stop offset="0.583" stop-color="#ffd300"/><stop offset="0.625" stop-color="#ffb700"/><stop offset="0.667" stop-color="#ffa000"/><stop offset="0.708" stop-color="#ff8d00"/><stop offset="0.750" stop-color="#ff7d00"/><stop offset="0.792" stop-color="#ff6f00"/><stop offset="0.833" stop-color="#ff6300"/><stop offset="0.875" stop-color="#ff5800"/><stop offset="0.917" stop-color="#ff4f00"/><stop offset="0.958" stop-color="#ff4700"/><stop offset="1.000" stop-color="#ff3f00"/></linearGradient><linearGradient id="B26" gradientUnits="userSpaceOnUse" x1="145" x2="615" y1="0" y2="0"><stop offset="0.000" stop-color="#00ff54"/><stop offset="0.042" stop-color="#00ff4f"/><stop offset="0.083" stop-color="#00ff4a"/><stop offset="0.125" stop-color="#00ff44"/><stop offset="0.167" stop-color="#00ff3f"/><stop offset="0.208" stop-color="#00ff38"/><stop offset="0.250" stop-color="#08ff31"/><stop offset="0.292" stop-color="#2cff2a"/><stop offset="0.333" stop-color="#4eff22"/><stop offset="0.375" stop-color="#71ff19"/><stop offset="0.417" stop-color="#96ff10"/><stop offset="0.458" stop-color="#bcff04"/><stop offset="0.500" stop-color="#e4ff00"/><stop offset="0.542" stop-color="#fff000"/><stop offset="0.583" stop-color="#ffcd00"/><stop offset="0.625" stop-color="#ffb200"/><stop offset="0.667" stop-color="#ff9b00"/><stop offset="0.708" stop-color="#ff8900"/><stop offset="0.750" stop-color="#ff7900"/><stop offset="0.792" stop-color="#ff6c00"/><stop offset="0.833" stop-color="#ff6000"/><stop offset="0.875" stop-color="#ff5500"/><stop offset="0.917" stop-color="#ff4c00"/><stop offset="0.958" stop-color="#ff4400"/><stop offset="1.000" stop-color="#ff3d00"/></linearGradient><linearGradient id="B27" gradientUnits="userSpaceOnUse" x1="145" x2="615" y1="0" y2="0"><stop offset="0.000" stop-color="#00ff58"/><stop offset="0.042" stop-color="#00ff53"/><stop offset="0.083" stop-color="#00ff4e"/><stop offset="0.125" stop-color="#00ff48"/><stop offset="0.167" stop-color="#00ff42"/><stop offset="0.208" stop-color="#00ff3c"/><stop offset="0.250" stop-color="#0cff35"/><stop offset="0.292" stop-color="#2fff2e"/><stop offset="0.333" stop-color="#52ff26"/><stop offset="0.375" stop-color="#76ff1e"/><stop offset="0.417" stop-color="#9bff14"/><stop offset="0.458" stop-color="#c2ff09"/><stop offset="0.500" stop-color="#ecff00"/><stop offset="0.542" stop-color="#ffe900"/><stop offset="0.583" stop-color="#ffc700"/><stop offset="0.625" stop-color="#ffad00"/><stop offset="0.667" stop-color="#ff9700"/><stop offset="0.708" stop-color="#ff8500"/><stop offset="0.750" stop-color="#ff7500"/><stop offset="0.792" stop-color="#ff6800"/><stop offset="0.833" stop-color="#ff5d00"/><stop offset="0.875" stop-color="#ff5300"/><stop offset="0.917" stop-color="#ff4a00"/><stop offset="0.958" stop-color="#ff4200"/><stop offset="1.000" stop-color="#ff3a00"/></linearGradient><linearGradient id="B28" gradientUnits="userSpaceOnUse" x1="145" x2="615" y1="0" y2="0"><stop offset="0.000" stop-color="#00ff5c"/><stop offset="0.042" stop-color="#00ff57"/><stop offset="0.083" stop-color="#00ff52"/><stop offset="0.125" stop-color="#00ff4c"/><stop offset="0.167" stop-color="#00ff46"/><stop offset="0.208" stop-color="#00ff40"/><stop offset="0.250" stop-color="#0fff3a"/><stop offset="0.292" stop-color="#33ff32"/><stop offset="0.333" stop-color="#56ff2a"/><stop offset="0.375" stop-color="#7bff22"/><stop offset="0.417" stop-color="#a1ff18"/><stop offset="0.458" stop-color="#c9ff0e"/><stop offset="0.500" stop-color="#f3ff01"/><stop offset="0.542" stop-color="#ffe100"/><stop offset="0.583" stop-color="#ffc100"/><stop offset="0.625" stop-color="#ffa700"/><stop offset="0.667" stop-color="#ff9200"/><stop offset="0.708" stop-color="#ff8100"/><stop offset="0.750" stop-color="#ff7200"/><stop offset="0.792" stop-color="#ff6500"/><stop offset="0.833" stop-color="#ff5a00"/><stop offset="0.875" stop-color="#ff5000"/><stop offset="0.917" stop-color="#ff4700"/><stop offset="0.958" stop-color="#ff3f00"/><stop offset="1.000" stop-color="#ff3800"/></linearGradient><linearGradient id="B29" gradientUnits="userSpaceOnUse" x1="145" x2="615" y1="0" y2="0"><stop offset="0.000" stop-color="#00ff60"/><stop offset="0.042" stop-color="#00ff5b"/><stop offset="0.083" stop-color="#00ff56"/><stop offset="0.125" stop-color="#00ff50"/><stop offset="0.167" stop-color="#00ff4b"/><stop offset="0.208" stop-color="#00ff44"/><stop offset="0.250" stop-color="#12ff3e"/><stop offset="0.292" stop-color="#37ff37"/><stop offset="0.333" stop-color="#5bff2f"/><stop offset="0.375" stop-color="#80ff26"/><stop offset="0.417" stop-color="#a7ff1d"/><stop offset="0.458" stop-color="#d0ff13"/><stop offset="0.500" stop-color="#fbff06"/><stop offset="0.542" stop-color="#ffdb00"/><stop offset="0.583" stop-color="#ffbb00"/><stop offset="0.625" stop-color="#ffa200"/><stop offset="0.667" stop-color="#ff8e00"/><stop offset="0.708" stop-color="#ff7d00"/><stop offset="0.750" stop-color="#ff6e00"/><stop offset="0.792" stop-color="#ff6100"/><stop offset="0.833" stop-color="#ff5600"/><stop offset="0.875" stop-color="#ff4d00"/><stop offset="0.917" stop-color="#ff4400"/><stop offset="0.958" stop-color="#ff3d00"/><stop offset="1.000" stop-color="#ff3600"/></linearGradient><linearGradient id="B30" gradientUnits="userSpaceOnUse" x1="145" x2="615" y1="0" y2="0"><stop offset="0.000" stop-color="#00ff64"/><stop offset="0.042" stop-color="#00ff5f"/><stop offset="0.083" stop-color="#00ff5a"/><stop offset="0.125" stop-color="#00ff55"/><stop offset="0.167" stop-color="#00ff4f"/><stop offset="0.208" stop-color="#00ff49"/><stop offset="0.250" stop-color="#16ff42"/><stop offset="0.292" stop-color="#3aff3b"/><stop offset="0.333" stop-color="#5fff33"/><stop offset="0.375" stop-color="#85ff2b"/><stop offset="0.417" stop-color="#adff22"/><stop offset="0.458" stop-color="#d7ff17"/><stop offset="0.500" stop-color="#fffb0b"/><stop offset="0.542" stop-color="#ffd400"/><stop offset="0.583" stop-color="#ffb500"/><stop offset="0.625" stop-color="#ff9d00"/><stop offset="0.667" stop-color="#ff8900"/><stop offset="0.708" stop-color="#ff7900"/><stop offset="0.750" stop-color="#ff6a00"/><stop offset="0.792" stop-color="#ff5e00"/><stop offset="0.833" stop-color="#ff5300"/><stop offset="0.875" stop-color="#ff4a00"/><stop offset="0.917" stop-color="#ff4200"/><stop offset="0.958" stop-color="#ff3a00"/><stop offset="1.000" stop-color="#ff3300"/></linearGradient><linearGradient id="B31" gradientUnits="userSpaceOnUse" x1="145" x2="615" y1="0" y2="0"><stop offset="0.000" stop-color="#00ff68"/><stop offset="0.042" stop-color="#00ff63"/><stop offset="0.083" stop-color="#00ff5e"/><stop offset="0.125" stop-color="#00ff59"/><stop offset="0.167" stop-color="#00ff53"/><stop offset="0.208" stop-color="#00ff4d"/><stop offset="0.250" stop-color="#19ff47"/><stop offset="0.292" stop-color="#3eff40"/><stop offset="0.333" stop-color="#64ff38"/><stop offset="0.375" stop-color="#8bff30"/><stop offset="0.417" stop-color="#b3ff27"/><stop offset="0.458" stop-color="#deff1c"/><stop offset="0.500" stop-color="#fff310"/><stop offset="0.542" stop-color="#ffcd03"/><stop offset="0.583" stop-color="#ffb000"/><stop offset="0.625" stop-color="#ff9800"/><stop offset="0.667" stop-color="#ff8500"/><stop offset="0.708" stop-color="#ff7500"/><stop offset="0.750" stop-color="#ff6700"/><stop offset="0.792" stop-color="#ff5b00"/><stop offset="0.833" stop-color="#ff5000"/><stop offset="0.875" stop-color="#ff4700"/><stop offset="0.917" stop-color="#ff3f00"/><stop offset="0.958" stop-color="#ff3700"/><stop offset="1.000" stop-color="#ff3100"/></linearGradient><linearGradient id="B32" gradientUnits="userSpaceOnUse" x1="145" x2="615" y1="0" y2="0"><stop offset="0.000" stop-color="#00ff6c"/><stop offset="0.042" stop-color="#00ff67"/><stop offset="0.083" stop-color="#00ff62"/><stop offset="0.125" stop-color="#00ff5d"/><stop offset="0.167" stop-color="#00ff58"/><stop offset="0.208" stop-color="#00ff52"/><stop offset="0.250" stop-color="#1dff4b"/><stop offset="0.292" stop-color="#42ff44"/><stop offset="0.333" stop-color="#69ff3d"/><stop offset="0.375" stop-color="#90ff35"/><stop offset="0.417" stop-color="#baff2c"/><stop offset="0.458" stop-color="#e6ff22"/><stop offset="0.500" stop-color="#ffeb14"/><stop offset="0.542" stop-color="#ffc707"/><stop offset="0.583" stop-color="#ffaa00"/><stop offset="0.625" stop-color="#ff9300"/><stop offset="0.667" stop-color="#ff8100"/><stop offset="0.708" stop-color="#ff7100"/><stop offset="0.750" stop-color="#ff6300"/><stop offset="0.792" stop-color="#ff5800"/><stop offset="0.833" stop-color="#ff4d00"/><stop offset="0.875" stop-color="#ff4400"/><stop offset="0.917" stop-color="#ff3c00"/><stop offset="0.958" stop-color="#ff3500"/><stop offset="1.000" stop-color="#ff2e00"/></linearGradient><linearGradient id="B33" gradientUnits="userSpaceOnUse" x1="145" x2="615" y1="0" y2="0"><stop offset="0.000" stop-color="#00ff70"/><stop offset="0.042" stop-color="#00ff6c"/><stop offset="0.083" stop-color="#00ff67"/><stop offset="0.125" stop-color="#00ff62"/><stop offset="0.167" stop-color="#00ff5c"/><stop offset="0.208" stop-color="#00ff57"/><stop offset="0.250" stop-color="#20ff50"/><stop offset="0.292" stop-color="#47ff49"/><stop offset="0.333" stop-color="#6eff42"/><stop offset="0.375" stop-color="#96ff3a"/><stop offset="0.417" stop-color="#c1ff31"/><stop offset="0.458" stop-color="#eeff27"/><stop offset="0.500" stop-color="#ffe319"/><stop offset="0.542" stop-color="#ffc00b"/><stop offset="0.583" stop-color="#ffa500"/><stop offset="0.625" stop-color="#ff8f00"/><stop offset="0.667" stop-color="#ff7c00"/><stop offset="0.708" stop-color="#ff6d00"/><stop offset="0.750" stop-color="#ff6000"/><stop offset="0.792" stop-color="#ff5400"/><stop offset="0.833" stop-color="#ff4a00"/><stop offset="0.875" stop-color="#ff4100"/><stop offset="0.917" stop-color="#ff3a00"/><stop offset="0.958" stop-color="#ff3300"/><stop offset="1.000" stop-color="#ff2c00"/></linearGradient><linearGradient id="B34" gradientUnits="userSpaceOnUse" x1="145" x2="615" y1="0" y2="0"><stop offset="0.000" stop-color="#00ff75"/><stop offset="0.042" stop-color="#00ff70"/><stop offset="0.083" stop-color="#00ff6c"/><stop offset="0.125" stop-color="#00ff67"/><stop offset="0.167" stop-color="#00ff61"/><stop offset="0.208" stop-color="#00ff5b"/><stop offset="0.250" stop-color="#24ff55"/><stop offset="0.292" stop-color="#4bff4e"/><stop offset="0.333" stop-color="#73ff47"/><stop offset="0.375" stop-color="#9cff3f"/><stop offset="0.417" stop-color="#c8ff36"/><stop offset="0.458" stop-color="#f6ff2c"/><stop offset="0.500" stop-color="#ffdb1d"/><stop offset="0.542" stop-color="#ffba0f"/><stop offset="0.583" stop-color="#ff9f04"/><stop offset="0.625" stop-color="#ff8a00"/><stop offset="0.667" stop-color="#ff7800"/><stop offset="0.708" stop-color="#ff6900"/><stop offset="0.750" stop-color="#ff5c00"/><stop offset="0.792" stop-color="#ff5100"/><stop offset="0.833" stop-color="#ff4700"/><stop offset="0.875" stop-color="#ff3f00"/><stop offset="0.917" stop-color="#ff3700"/><stop offset="0.958" stop-color="#ff3000"/><stop offset="1.000" stop-color="#ff2a00"/></linearGradient><linearGradient id="B35" gradientUnits="userSpaceOnUse" x1="145" x2="615" y1="0" y2="0"><stop offset="0.000" stop-color="#00ff79"/><stop offset="0.042" stop-color="#00ff75"/><stop offset="0.083" stop-color="#00ff70"/><stop offset="0.125" stop-color="#00ff6b"/><stop offset="0.167" stop-color="#00ff66"/><stop offset="0.208" stop-color="#00ff60"/><stop offset="0.250" stop-color="#28ff5a"/><stop offset="0.292" stop-color="#50ff54"/><stop offset="0.333" stop-color="#78ff4c"/><stop offset="0.375" stop-color="#a2ff44"/><stop offset="0.417" stop-color="#cfff3c"/><stop offset="0.458" stop-color="#ffff32"/><stop offset="0.500" stop-color="#ffd421"/><stop offset="0.542" stop-color="#ffb413"/><stop offset="0.583" stop-color="#ff9a08"/><stop offset="0.625" stop-color="#ff8500"/><stop offset="0.667" stop-color="#ff7400"/><stop offset="0.708" stop-color="#ff6500"/><stop offset="0.750" stop-color="#ff5900"/><stop offset="0.792" stop-color="#ff4e00"/><stop offset="0.833" stop-color="#ff4400"/><stop offset="0.875" stop-color="#ff3c00"/><stop offset="0.917" stop-color="#ff3400"/><stop offset="0.958" stop-color="#ff2e00"/><stop offset="1.000" stop-color="#ff2700"/></linearGradient><linearGradient id="B36" gradientUnits="userSpaceOnUse" x1="145" x2="615" y1="0" y2="0"><stop offset="0.000" stop-color="#00ff7e"/><stop offset="0.042" stop-color="#00ff7a"/><stop offset="0.083" stop-color="#00ff75"/><stop offset="0.125" stop-color="#00ff70"/><stop offset="0.167" stop-color="#00ff6b"/><stop offset="0.208" stop-color="#02ff66"/><stop offset="0.250" stop-color="#2cff60"/><stop offset="0.292" stop-color="#54ff59"/><stop offset="0.333" stop-color="#7eff52"/><stop offset="0.375" stop-color="#a9ff4a"/><stop offset="0.417" stop-color="#d7ff41"/><stop offset="0.458" stop-color="#fff636"/><stop offset="0.500" stop-color="#ffcd24"/><stop offset="0.542" stop-color="#ffad16"/><stop offset="0.583" stop-color="#ff950b"/><stop offset="0.625" stop-color="#ff8001"/><stop offset="0.667" stop-color="#ff7000"/><stop offset="0.708" stop-color="#ff6100"/><stop offset="0.750" stop-color="#ff5500"/><stop offset="0.792" stop-color="#ff4b00"/><stop offset="0.833" stop-color="#ff4100"/><stop offset="0.875" stop-color="#ff3900"/><stop offset="0.917" stop-color="#ff3200"/><stop offset="0.958" stop-color="#ff2b00"/><stop offset="1.000" stop-color="#ff2500"/></linearGradient><linearGradient id="B37" gradientUnits="userSpaceOnUse" x1="145" x2="615" y1="0" y2="0"><stop offset="0.000" stop-color="#00ff83"/><stop offset="0.042" stop-color="#00ff7f"/><stop offset="0.083" stop-color="#00ff7a"/><stop offset="0.125" stop-color="#00ff76"/><stop offset="0.167" stop-color="#00ff70"/><stop offset="0.208" stop-color="#06ff6b"/><stop offset="0.250" stop-color="#30ff65"/><stop offset="0.292" stop-color="#59ff5f"/><stop offset="0.333" stop-color="#83ff58"/><stop offset="0.375" stop-color="#b0ff50"/><stop offset="0.417" stop-color="#dfff47"/><stop offset="0.458" stop-color="#ffed3a"/><stop offset="0.500" stop-color="#ffc628"/><stop offset="0.542" stop-color="#ffa71a"/><stop offset="0.583" stop-color="#ff8f0e"/><stop offset="0.625" stop-color="#ff7c05"/><stop offset="0.667" stop-color="#ff6c00"/><stop offset="0.708" stop-color="#ff5e00"/><stop offset="0.750" stop-color="#ff5200"/><stop offset="0.792" stop-color="#ff4800"/><stop offset="0.833" stop-color="#ff3e00"/><stop offset="0.875" stop-color="#ff3600"/><stop offset="0.917" stop-color="#ff2f00"/><stop offset="0.958" stop-color="#ff2900"/><stop offset="1.000" stop-color="#ff2300"/></linearGradient><linearGradient id="B38" gradientUnits="userSpaceOnUse" x1="145" x2="615" y1="0" y2="0"><stop offset="0.000" stop-color="#00ff88"/><stop offset="0.042" stop-color="#00ff84"/><stop offset="0.083" stop-color="#00ff80"/><stop offset="0.125" stop-color="#00ff7b"/><stop offset="0.167" stop-color="#00ff76"/><stop offset="0.208" stop-color="#0aff71"/><stop offset="0.250" stop-color="#34ff6b"/><stop offset="0.292" stop-color="#5eff64"/><stop offset="0.333" stop-color="#89ff5e"/><stop offset="0.375" stop-color="#b7ff56"/><stop offset="0.417" stop-color="#e8ff4e"/><stop offset="0.458" stop-color="#ffe53d"/><stop offset="0.500" stop-color="#ffbf2b"/><stop offset="0.542" stop-color="#ffa21d"/><stop offset="0.583" stop-color="#ff8a12"/><stop offset="0.625" stop-color="#ff7708"/><stop offset="0.667" stop-color="#ff6700"/><stop offset="0.708" stop-color="#ff5a00"/><stop offset="0.750" stop-color="#ff4f00"/><stop offset="0.792" stop-color="#ff4400"/><stop offset="0.833" stop-color="#ff3c00"/><stop offset="0.875" stop-color="#ff3400"/><stop offset="0.917" stop-color="#ff2d00"/><stop offset="0.958" stop-color="#ff2600"/><stop offset="1.000" stop-color="#ff2000"/></linearGradient><linearGradient id="B39" gradientUnits="userSpaceOnUse" x1="145" x2="615" y1="0" y2="0"><stop offset="0.000" stop-color="#00ff8d"/><stop offset="0.042" stop-color="#00ff89"/><stop offset="0.083" stop-color="#00ff85"/><stop offset="0.125" stop-color="#00ff80"/><stop offset="0.167" stop-color="#00ff7c"/><stop offset="0.208" stop-color="#0eff76"/><stop offset="0.250" stop-color="#39ff71"/><stop offset="0.292" stop-color="#63ff6b"/><stop offset="0.333" stop-color="#90ff64"/><stop offset="0.375" stop-color="#bfff5c"/><stop offset="0.417" stop-color="#f1ff54"/><stop offset="0.458" stop-color="#ffdd41"/><stop offset="0.500" stop-color="#ffb82f"/><stop offset="0.542" stop-color="#ff9c20"/><stop offset="0.583" stop-color="#ff8515"/><stop offset="0.625" stop-color="#ff730b"/><stop offset="0.667" stop-color="#ff6302"/><stop offset="0.708" stop-color="#ff5600"/><stop offset="0.750" stop-color="#ff4b00"/><stop offset="0.792" stop-color="#ff4100"/><stop offset="0.833" stop-color="#ff3900"/><stop offset="0.875" stop-color="#ff3100"/><stop offset="0.917" stop-color="#ff2a00"/><stop offset="0.958" stop-color="#ff2400"/><stop offset="1.000" stop-color="#ff1e00"/></linearGradient><linearGradient id="B40" gradientUnits="userSpaceOnUse" x1="145" x2="615" y1="0" y2="0"><stop offset="0.000" stop-color="#00ff92"/><stop offset="0.042" stop-color="#00ff8f"/><stop offset="0.083" stop-color="#00ff8b"/><stop offset="0.125" stop-color="#00ff86"/><stop offset="0.167" stop-color="#00ff81"/><stop offset="0.208" stop-color="#12ff7c"/><stop offset="0.250" stop-color="#3dff77"/><stop offset="0.292" stop-color="#69ff71"/><stop offset="0.333" stop-color="#96ff6a"/><stop offset="0.375" stop-color="#c7ff63"/><stop offset="0.417" stop-color="#faff5b"/><stop offset="0.458" stop-color="#ffd444"/><stop offset="0.500" stop-color="#ffb132"/><stop offset="0.542" stop-color="#ff9624"/><stop offset="0.583" stop-color="#ff8018"/><stop offset="0.625" stop-color="#ff6e0e"/><stop offset="0.667" stop-color="#ff5f05"/><stop offset="0.708" stop-color="#ff5300"/><stop offset="0.750" stop-color="#ff4800"/><stop offset="0.792" stop-color="#ff3e00"/><stop offset="0.833" stop-color="#ff3600"/><stop offset="0.875" stop-color="#ff2e00"/><stop offset="0.917" stop-color="#ff2800"/><stop offset="0.958" stop-color="#ff2100"/><stop offset="1.000" stop-color="#ff1c00"/></linearGradient><linearGradient id="B41" gradientUnits="userSpaceOnUse" x1="145" x2="615" y1="0" y2="0"><stop offset="0.000" stop-color="#00ff98"/><stop offset="0.042" stop-color="#00ff94"/><stop offset="0.083" stop-color="#00ff90"/><stop offset="0.125" stop-color="#00ff8c"/><stop offset="0.167" stop-color="#00ff88"/><stop offset="0.208" stop-color="#16ff83"/><stop offset="0.250" stop-color="#42ff7d"/><stop offset="0.292" stop-color="#6fff77"/><stop offset="0.333" stop-color="#9dff71"/><stop offset="0.375" stop-color="#cfff6a"/><stop offset="0.417" stop-color="#fffa60"/><stop offset="0.458" stop-color="#ffcd48"/><stop offset="0.500" stop-color="#ffab35"/><stop offset="0.542" stop-color="#ff9027"/><stop offset="0.583" stop-color="#ff7b1b"/><stop offset="0.625" stop-color="#ff6a11"/><stop offset="0.667" stop-color="#ff5c08"/><stop offset="0.708" stop-color="#ff4f00"/><stop offset="0.750" stop-color="#ff4500"/><stop offset="0.792" stop-color="#ff3b00"/><stop offset="0.833" stop-color="#ff3300"/><stop offset="0.875" stop-color="#ff2c00"/><stop offset="0.917" stop-color="#ff2500"/><stop offset="0.958" stop-color="#ff1f00"/><stop offset="1.000" stop-color="#ff1a00"/></linearGradient><linearGradient id="B42" gradientUnits="userSpaceOnUse" x1="145" x2="615" y1="0" y2="0"><stop offset="0.000" stop-color="#00ff9e"/><stop offset="0.042" stop-color="#00ff9a"/><stop offset="0.083" stop-color="#00ff96"/><stop offset="0.125" stop-color="#00ff92"/><stop offset="0.167" stop-color="#00ff8e"/><stop offset="0.208" stop-color="#1aff89"/><stop offset="0.250" stop-color="#47ff84"/><stop offset="0.292" stop-color="#75ff7e"/><stop offset="0.333" stop-color="#a4ff78"/><stop offset="0.375" stop-color="#d7ff71"/><stop offset="0.417" stop-color="#fff063"/><stop offset="0.458" stop-color="#ffc54b"/><stop offset="0.500" stop-color="#ffa438"/><stop offset="0.542" stop-color="#ff8b2a"/><stop offset="0.583" stop-color="#ff771e"/><stop offset="0.625" stop-color="#ff6614"/><stop offset="0.667" stop-color="#ff580b"/><stop offset="0.708" stop-color="#ff4c03"/><stop offset="0.750" stop-color="#ff4100"/><stop offset="0.792" stop-color="#ff3800"/><stop offset="0.833" stop-color="#ff3000"/><stop offset="0.875" stop-color="#ff2900"/><stop offset="0.917" stop-color="#ff2300"/><stop offset="0.958" stop-color="#ff1d00"/><stop offset="1.000" stop-color="#ff1700"/></linearGradient><linearGradient id="B43" gradientUnits="userSpaceOnUse" x1="145" x2="615" y1="0" y2="0"><stop offset="0.000" stop-color="#00ffa3"/><stop offset="0.042" stop-color="#00ffa0"/><stop offset="0.083" stop-color="#00ff9d"/><stop offset="0.125" stop-color="#00ff99"/><stop offset="0.167" stop-color="#00ff94"/><stop offset="0.208" stop-color="#1eff90"/><stop offset="0.250" stop-color="#4cff8b"/><stop offset="0.292" stop-color="#7bff85"/><stop offset="0.333" stop-color="#acff7f"/><stop offset="0.375" stop-color="#e1ff79"/><stop offset="0.417" stop-color="#ffe767"/><stop offset="0.458" stop-color="#ffbd4e"/><stop offset="0.500" stop-color="#ff9e3b"/><stop offset="0.542" stop-color="#ff852d"/><stop offset="0.583" stop-color="#ff7220"/><stop offset="0.625" stop-color="#ff6116"/><stop offset="0.667" stop-color="#ff540e"/><stop offset="0.708" stop-color="#ff4806"/><stop offset="0.750" stop-color="#ff3e00"/><stop offset="0.792" stop-color="#ff3500"/><stop offset="0.833" stop-color="#ff2d00"/><stop offset="0.875" stop-color="#ff2600"/><stop offset="0.917" stop-color="#ff2000"/><stop offset="0.958" stop-color="#ff1a00"/><stop offset="1.000" stop-color="#ff1500"/></linearGradient><linearGradient id="B44" gradientUnits="userSpaceOnUse" x1="145" x2="615" y1="0" y2="0"><stop offset="0.000" stop-color="#00ffaa"/><stop offset="0.042" stop-color="#00ffa6"/><stop offset="0.083" stop-color="#00ffa3"/><stop offset="0.125" stop-color="#00ff9f"/><stop offset="0.167" stop-color="#00ff9b"/><stop offset="0.208" stop-color="#23ff97"/><stop offset="0.250" stop-color="#51ff92"/><stop offset="0.292" stop-color="#81ff8d"/><stop offset="0.333" stop-color="#b4ff87"/><stop offset="0.375" stop-color="#eaff81"/><stop offset="0.417" stop-color="#ffde6a"/><stop offset="0.458" stop-color="#ffb651"/><stop offset="0.500" stop-color="#ff983e"/><stop offset="0.542" stop-color="#ff802f"/><stop offset="0.583" stop-color="#ff6d23"/><stop offset="0.625" stop-color="#ff5d19"/><stop offset="0.667" stop-color="#ff5010"/><stop offset="0.708" stop-color="#ff4508"/><stop offset="0.750" stop-color="#ff3b01"/><stop offset="0.792" stop-color="#ff3200"/><stop offset="0.833" stop-color="#ff2b00"/><stop offset="0.875" stop-color="#ff2400"/><stop offset="0.917" stop-color="#ff1d00"/><stop offset="0.958" stop-color="#ff1800"/><stop offset="1.000" stop-color="#ff1300"/></linearGradient><linearGradient id="B45" gradientUnits="userSpaceOnUse" x1="145" x2="615" y1="0" y2="0"><stop offset="0.000" stop-color="#00ffb0"/><stop offset="0.042" stop-color="#00ffad"/><stop offset="0.083" stop-color="#00ffaa"/><stop offset="0.125" stop-color="#00ffa6"/><stop offset="0.167" stop-color="#00ffa2"/><stop offset="0.208" stop-color="#27ff9e"/><stop offset="0.250" stop-color="#57ff9a"/><stop offset="0.292" stop-color="#88ff95"/><stop offset="0.333" stop-color="#bcff8f"/><stop offset="0.375" stop-color="#f4ff89"/><stop offset="0.417" stop-color="#ffd56d"/><stop offset="0.458" stop-color="#ffaf54"/><stop offset="0.500" stop-color="#ff9241"/><stop offset="0.542" stop-color="#ff7b32"/><stop offset="0.583" stop-color="#ff6826"/><stop offset="0.625" stop-color="#ff591b"/><stop offset="0.667" stop-color="#ff4c13"/><stop offset="0.708" stop-color="#ff410b"/><stop offset="0.750" stop-color="#ff3804"/><stop offset="0.792" stop-color="#ff2f00"/><stop offset="0.833" stop-color="#ff2800"/><stop offset="0.875" stop-color="#ff2100"/><stop offset="0.917" stop-color="#ff1b00"/><stop offset="0.958" stop-color="#ff1500"/><stop offset="1.000" stop-color="#ff1000"/></linearGradient><linearGradient id="B46" gradientUnits="userSpaceOnUse" x1="145" x2="615" y1="0" y2="0"><stop offset="0.000" stop-color="#00ffb6"/><stop offset="0.042" stop-color="#00ffb4"/><stop offset="0.083" stop-color="#00ffb1"/><stop offset="0.125" stop-color="#00ffad"/><stop offset="0.167" stop-color="#00ffaa"/><stop offset="0.208" stop-color="#2cffa6"/><stop offset="0.250" stop-color="#5dffa2"/><stop offset="0.292" stop-color="#8fff9d"/><stop offset="0.333" stop-color="#c5ff98"/><stop offset="0.375" stop-color="#ffff92"/><stop offset="0.417" stop-color="#ffcc70"/><stop offset="0.458" stop-color="#ffa857"/><stop offset="0.500" stop-color="#ff8c44"/><stop offset="0.542" stop-color="#ff7635"/><stop offset="0.583" stop-color="#ff6428"/><stop offset="0.625" stop-color="#ff551e"/><stop offset="0.667" stop-color="#ff4915"/><stop offset="0.708" stop-color="#ff3e0d"/><stop offset="0.750" stop-color="#ff3406"/><stop offset="0.792" stop-color="#ff2c00"/><stop offset="0.833" stop-color="#ff2500"/><stop offset="0.875" stop-color="#ff1e00"/><stop offset="0.917" stop-color="#ff1800"/><stop offset="0.958" stop-color="#ff1300"/><stop offset="1.000" stop-color="#ff0e00"/></linearGradient><linearGradient id="B47" gradientUnits="userSpaceOnUse" x1="145" x2="615" y1="0" y2="0"><stop offset="0.000" stop-color="#00ffbd"/><stop offset="0.042" stop-color="#00ffbb"/><stop offset="0.083" stop-color="#00ffb8"/><stop offset="0.125" stop-color="#00ffb5"/><stop offset="0.167" stop-color="#00ffb2"/><stop offset="0.208" stop-color="#31ffae"/><stop offset="0.250" stop-color="#63ffaa"/><stop offset="0.292" stop-color="#97ffa6"/><stop offset="0.333" stop-color="#ceffa1"/><stop offset="0.375" stop-color="#fff495"/><stop offset="0.417" stop-color="#ffc473"/><stop offset="0.458" stop-color="#ffa15a"/><stop offset="0.500" stop-color="#ff8647"/><stop offset="0.542" stop-color="#ff7137"/><stop offset="0.583" stop-color="#ff5f2b"/><stop offset="0.625" stop-color="#ff5120"/><stop offset="0.667" stop-color="#ff4517"/><stop offset="0.708" stop-color="#ff3a10"/><stop offset="0.750" stop-color="#ff3108"/><stop offset="0.792" stop-color="#ff2902"/><stop offset="0.833" stop-color="#ff2200"/><stop offset="0.875" stop-color="#ff1c00"/><stop offset="0.917" stop-color="#ff1600"/><stop offset="0.958" stop-color="#ff1100"/><stop offset="1.000" stop-color="#ff0c00"/></linearGradient><linearGradient id="B48" gradientUnits="userSpaceOnUse" x1="145" x2="615" y1="0" y2="0"><stop offset="0.000" stop-color="#00ffc4"/><stop offset="0.042" stop-color="#00ffc2"/><stop offset="0.083" stop-color="#00ffbf"/><stop offset="0.125" stop-color="#00ffbd"/><stop offset="0.167" stop-color="#02ffba"/><stop offset="0.208" stop-color="#36ffb6"/><stop offset="0.250" stop-color="#69ffb3"/><stop offset="0.292" stop-color="#9fffaf"/><stop offset="0.333" stop-color="#d8ffaa"/><stop offset="0.375" stop-color="#ffea98"/><stop offset="0.417" stop-color="#ffbc75"/><stop offset="0.458" stop-color="#ff9a5c"/><stop offset="0.500" stop-color="#ff8049"/><stop offset="0.542" stop-color="#ff6b3a"/><stop offset="0.583" stop-color="#ff5b2d"/><stop offset="0.625" stop-color="#ff4d23"/><stop offset="0.667" stop-color="#ff411a"/><stop offset="0.708" stop-color="#ff3712"/><stop offset="0.750" stop-color="#ff2e0b"/><stop offset="0.792" stop-color="#ff2604"/><stop offset="0.833" stop-color="#ff1f00"/><stop offset="0.875" stop-color="#ff1900"/><stop offset="0.917" stop-color="#ff1300"/><stop offset="0.958" stop-color="#ff0e00"/><stop offset="1.000" stop-color="#ff0900"/></linearGradient><linearGradient id="B49" gradientUnits="userSpaceOnUse" x1="145" x2="615" y1="0" y2="0"><stop offset="0.000" stop-color="#00ffcc"/><stop offset="0.042" stop-color="#00ffc9"/><stop offset="0.083" stop-color="#00ffc7"/><stop offset="0.125" stop-color="#00ffc5"/><stop offset="0.167" stop-color="#07ffc2"/><stop offset="0.208" stop-color="#3cffbf"/><stop offset="0.250" stop-color="#70ffbc"/><stop offset="0.292" stop-color="#a7ffb8"/><stop offset="0.333" stop-color="#e2ffb4"/><stop offset="0.375" stop-color="#ffdf9a"/><stop offset="0.417" stop-color="#ffb378"/><stop offset="0.458" stop-color="#ff935f"/><stop offset="0.500" stop-color="#ff7a4c"/><stop offset="0.542" stop-color="#ff663c"/><stop offset="0.583" stop-color="#ff5630"/><stop offset="0.625" stop-color="#ff4925"/><stop offset="0.667" stop-color="#ff3d1c"/><stop offset="0.708" stop-color="#ff3414"/><stop offset="0.750" stop-color="#ff2b0d"/><stop offset="0.792" stop-color="#ff2306"/><stop offset="0.833" stop-color="#ff1d00"/><stop offset="0.875" stop-color="#ff1600"/><stop offset="0.917" stop-color="#ff1100"/><stop offset="0.958" stop-color="#ff0c00"/><stop offset="1.000" stop-color="#ff0700"/></linearGradient><linearGradient id="B50" gradientUnits="userSpaceOnUse" x1="145" x2="615" y1="0" y2="0"><stop offset="0.000" stop-color="#00ffd3"/><stop offset="0.042" stop-color="#00ffd1"/><stop offset="0.083" stop-color="#00ffcf"/><stop offset="0.125" stop-color="#00ffcd"/><stop offset="0.167" stop-color="#0cffcb"/><stop offset="0.208" stop-color="#41ffc8"/><stop offset="0.250" stop-color="#77ffc6"/><stop offset="0.292" stop-color="#b0ffc3"/><stop offset="0.333" stop-color="#edffbf"/><stop offset="0.375" stop-color="#ffd69d"/><stop offset="0.417" stop-color="#ffac7b"/><stop offset="0.458" stop-color="#ff8d62"/><stop offset="0.500" stop-color="#ff754e"/><stop offset="0.542" stop-color="#ff623f"/><stop offset="0.583" stop-color="#ff5232"/><stop offset="0.625" stop-color="#ff4527"/><stop offset="0.667" stop-color="#ff3a1e"/><stop offset="0.708" stop-color="#ff3016"/><stop offset="0.750" stop-color="#ff280f"/><stop offset="0.792" stop-color="#ff2009"/><stop offset="0.833" stop-color="#ff1a02"/><stop offset="0.875" stop-color="#ff1400"/><stop offset="0.917" stop-color="#ff0e00"/><stop offset="0.958" stop-color="#ff0900"/><stop offset="1.000" stop-color="#ff0400"/></linearGradient><linearGradient id="B51" gradientUnits="userSpaceOnUse" x1="145" x2="615" y1="0" y2="0"><stop offset="0.000" stop-color="#00ffdb"/><stop offset="0.042" stop-color="#00ffda"/><stop offset="0.083" stop-color="#00ffd8"/><stop offset="0.125" stop-color="#00ffd6"/><stop offset="0.167" stop-color="#11ffd4"/><stop offset="0.208" stop-color="#47ffd2"/><stop offset="0.250" stop-color="#7effd0"/><stop offset="0.292" stop-color="#b9ffcd"/><stop offset="0.333" stop-color="#f9ffca"/><stop offset="0.375" stop-color="#ffcc9f"/><stop offset="0.417" stop-color="#ffa47d"/><stop offset="0.458" stop-color="#ff8664"/><stop offset="0.500" stop-color="#ff6f51"/><stop offset="0.542" stop-color="#ff5d41"/><stop offset="0.583" stop-color="#ff4e34"/><stop offset="0.625" stop-color="#ff412a"/><stop offset="0.667" stop-color="#ff3620"/><stop offset="0.708" stop-color="#ff2d18"/><stop offset="0.750" stop-color="#ff2511"/><stop offset="0.792" stop-color="#ff1e0b"/><stop offset="0.833" stop-color="#ff1705"/><stop offset="0.875" stop-color="#ff1100"/><stop offset="0.917" stop-color="#ff0c00"/><stop offset="0.958" stop-color="#ff0700"/><stop offset="1.000" stop-color="#ff0200"/></linearGradient><linearGradient id="B52" gradientUnits="userSpaceOnUse" x1="145" x2="615" y1="0" y2="0"><stop offset="0.000" stop-color="#00ffe3"/><stop offset="0.042" stop-color="#00ffe2"/><stop offset="0.083" stop-color="#00ffe1"/><stop offset="0.125" stop-color="#00ffe0"/><stop offset="0.167" stop-color="#16ffde"/><stop offset="0.208" stop-color="#4effdc"/><stop offset="0.250" stop-color="#86ffdb"/><stop offset="0.292" stop-color="#c3ffd9"/><stop offset="0.333" stop-color="#fff9d1"/><stop offset="0.375" stop-color="#ffc2a1"/><stop offset="0.417" stop-color="#ff9c80"/><stop offset="0.458" stop-color="#ff8067"/><stop offset="0.500" stop-color="#ff6a53"/><stop offset="0.542" stop-color="#ff5844"/><stop offset="0.583" stop-color="#ff4937"/><stop offset="0.625" stop-color="#ff3d2c"/><stop offset="0.667" stop-color="#ff3323"/><stop offset="0.708" stop-color="#ff2a1a"/><stop offset="0.750" stop-color="#ff2213"/><stop offset="0.792" stop-color="#ff1b0d"/><stop offset="0.833" stop-color="#ff1407"/><stop offset="0.875" stop-color="#ff0f01"/><stop offset="0.917" stop-color="#ff0900"/><stop offset="0.958" stop-color="#ff0400"/><stop offset="1.000" stop-color="#ff0000"/></linearGradient><linearGradient id="B53" gradientUnits="userSpaceOnUse" x1="145" x2="615" y1="0" y2="0"><stop offset="0.000" stop-color="#00ffec"/><stop offset="0.042" stop-color="#00ffeb"/><stop offset="0.083" stop-color="#00ffea"/><stop offset="0.125" stop-color="#00ffe9"/><stop offset="0.167" stop-color="#1cffe8"/><stop offset="0.208" stop-color="#54ffe7"/><stop offset="0.250" stop-color="#8effe6"/><stop offset="0.292" stop-color="#cdffe5"/><stop offset="0.333" stop-color="#ffedd3"/><stop offset="0.375" stop-color="#ffb9a4"/><stop offset="0.417" stop-color="#ff9582"/><stop offset="0.458" stop-color="#ff7a69"/><stop offset="0.500" stop-color="#ff6456"/><stop offset="0.542" stop-color="#ff5346"/><stop offset="0.583" stop-color="#ff4539"/><stop offset="0.625" stop-color="#ff392e"/><stop offset="0.667" stop-color="#ff2f25"/><stop offset="0.708" stop-color="#ff261c"/><stop offset="0.750" stop-color="#ff1f15"/><stop offset="0.792" stop-color="#ff180f"/><stop offset="0.833" stop-color="#ff1209"/><stop offset="0.875" stop-color="#ff0c03"/><stop offset="0.917" stop-color="#ff0600"/><stop offset="0.958" stop-color="#ff0100"/><stop offset="1.000" stop-color="#ff0000"/></linearGradient><linearGradient id="B54" gradientUnits="userSpaceOnUse" x1="145" x2="615" y1="0" y2="0"><stop offset="0.000" stop-color="#00fff5"/><stop offset="0.042" stop-color="#00fff5"/><stop offset="0.083" stop-color="#00fff4"/><stop offset="0.125" stop-color="#00fff4"/><stop offset="0.167" stop-color="#21fff3"/><stop offset="0.208" stop-color="#5bfff3"/><stop offset="0.250" stop-color="#97fff2"/><stop offset="0.292" stop-color="#d9fff1"/><stop offset="0.333" stop-color="#ffe1d5"/><stop offset="0.375" stop-color="#ffb0a6"/><stop offset="0.417" stop-color="#ff8e84"/><stop offset="0.458" stop-color="#ff736b"/><stop offset="0.500" stop-color="#ff5f58"/><stop offset="0.542" stop-color="#ff4f48"/><stop offset="0.583" stop-color="#ff413b"/><stop offset="0.625" stop-color="#ff3530"/><stop offset="0.667" stop-color="#ff2c27"/><stop offset="0.708" stop-color="#ff231e"/><stop offset="0.750" stop-color="#ff1c17"/><stop offset="0.792" stop-color="#ff1511"/><stop offset="0.833" stop-color="#ff0f0b"/><stop offset="0.875" stop-color="#ff0905"/><stop offset="0.917" stop-color="#ff0400"/><stop offset="0.958" stop-color="#ff0000"/><stop offset="1.000" stop-color="#ff0000"/></linearGradient><linearGradient id="B55" gradientUnits="userSpaceOnUse" x1="145" x2="615" y1="0" y2="0"><stop offset="0.000" stop-color="#00fffe"/><stop offset="0.042" stop-color="#00fffe"/><stop offset="0.083" stop-color="#00ffff"/><stop offset="0.125" stop-color="#00ffff"/><stop offset="0.167" stop-color="#27ffff"/><stop offset="0.208" stop-color="#62ffff"/><stop offset="0.250" stop-color="#a1ffff"/><stop offset="0.292" stop-color="#e4ffff"/><stop offset="0.333" stop-color="#ffd6d6"/><stop offset="0.375" stop-color="#ffa8a8"/><stop offset="0.417" stop-color="#ff8687"/><stop offset="0.458" stop-color="#ff6d6e"/><stop offset="0.500" stop-color="#ff5a5a"/><stop offset="0.542" stop-color="#ff4a4a"/><stop offset="0.583" stop-color="#ff3d3d"/><stop offset="0.625" stop-color="#ff3232"/><stop offset="0.667" stop-color="#ff2829"/><stop offset="0.708" stop-color="#ff2020"/><stop offset="0.750" stop-color="#ff1819"/><stop offset="0.792" stop-color="#ff1212"/><stop offset="0.833" stop-color="#ff0c0d"/><stop offset="0.875" stop-color="#ff0607"/><stop offset="0.917" stop-color="#ff0102"/><stop offset="0.958" stop-color="#ff0000"/><stop offset="1.000" stop-color="#ff0000"/></linearGradient><linearGradient id="B56" gradientUnits="userSpaceOnUse" x1="145" x2="615" y1="0" y2="0"><stop offset="0.000" stop-color="#00f6ff"/><stop offset="0.042" stop-color="#00f6ff"/><stop offset="0.083" stop-color="#00f5ff"/><stop offset="0.125" stop-color="#00f4ff"/><stop offset="0.167" stop-color="#2bf4ff"/><stop offset="0.208" stop-color="#65f3ff"/><stop offset="0.250" stop-color="#a2f2ff"/><stop offset="0.292" stop-color="#e4f1ff"/><stop offset="0.333" stop-color="#ffcbd8"/><stop offset="0.375" stop-color="#ff9faa"/><stop offset="0.417" stop-color="#ff7f89"/><stop offset="0.458" stop-color="#ff6770"/><stop offset="0.500" stop-color="#ff555c"/><stop offset="0.542" stop-color="#ff454c"/><stop offset="0.583" stop-color="#ff393f"/><stop offset="0.625" stop-color="#ff2e34"/><stop offset="0.667" stop-color="#ff252b"/><stop offset="0.708" stop-color="#ff1d22"/><stop offset="0.750" stop-color="#ff151b"/><stop offset="0.792" stop-color="#ff0f14"/><stop offset="0.833" stop-color="#ff090e"/><stop offset="0.875" stop-color="#ff0309"/><stop offset="0.917" stop-color="#ff0004"/><stop offset="0.958" stop-color="#ff0000"/><stop offset="1.000" stop-color="#ff0000"/></linearGradient><linearGradient id="B57" gradientUnits="userSpaceOnUse" x1="145" x2="615" y1="0" y2="0"><stop offset="0.000" stop-color="#00edff"/><stop offset="0.042" stop-color="#00ecff"/><stop offset="0.083" stop-color="#00ebff"/><stop offset="0.125" stop-color="#00eaff"/><stop offset="0.167" stop-color="#2fe9ff"/><stop offset="0.208" stop-color="#67e7ff"/><stop offset="0.250" stop-color="#a3e6ff"/><stop offset="0.292" stop-color="#e4e4ff"/><stop offset="0.333" stop-color="#ffc1da"/><stop offset="0.375" stop-color="#ff97ac"/><stop offset="0.417" stop-color="#ff798b"/><stop offset="0.458" stop-color="#ff6272"/><stop offset="0.500" stop-color="#ff505e"/><stop offset="0.542" stop-color="#ff414f"/><stop offset="0.583" stop-color="#ff3541"/><stop offset="0.625" stop-color="#ff2a36"/><stop offset="0.667" stop-color="#ff212d"/><stop offset="0.708" stop-color="#ff1924"/><stop offset="0.750" stop-color="#ff121d"/><stop offset="0.792" stop-color="#ff0c16"/><stop offset="0.833" stop-color="#ff0610"/><stop offset="0.875" stop-color="#ff000b"/><stop offset="0.917" stop-color="#ff0005"/><stop offset="0.958" stop-color="#ff0000"/><stop offset="1.000" stop-color="#ff0000"/></linearGradient><linearGradient id="B58" gradientUnits="userSpaceOnUse" x1="145" x2="615" y1="0" y2="0"><stop offset="0.000" stop-color="#00e4ff"/><stop offset="0.042" stop-color="#00e3ff"/><stop offset="0.083" stop-color="#00e1ff"/><stop offset="0.125" stop-color="#00e0ff"/><stop offset="0.167" stop-color="#32deff"/><stop offset="0.208" stop-color="#6adcff"/><stop offset="0.250" stop-color="#a4daff"/><stop offset="0.292" stop-color="#e3d7ff"/><stop offset="0.333" stop-color="#ffb7db"/><stop offset="0.375" stop-color="#ff8fae"/><stop offset="0.417" stop-color="#ff728d"/><stop offset="0.458" stop-color="#ff5c74"/><stop offset="0.500" stop-color="#ff4a61"/><stop offset="0.542" stop-color="#ff3c51"/><stop offset="0.583" stop-color="#ff3043"/><stop offset="0.625" stop-color="#ff2638"/><stop offset="0.667" stop-color="#ff1e2e"/><stop offset="0.708" stop-color="#ff1626"/><stop offset="0.750" stop-color="#ff0f1f"/><stop offset="0.792" stop-color="#ff0918"/><stop offset="0.833" stop-color="#ff0312"/><stop offset="0.875" stop-color="#ff000c"/><stop offset="0.917" stop-color="#ff0007"/><stop offset="0.958" stop-color="#ff0002"/><stop offset="1.000" stop-color="#ff0000"/></linearGradient><linearGradient id="B59" gradientUnits="userSpaceOnUse" x1="145" x2="615" y1="0" y2="0"><stop offset="0.000" stop-color="#00dbff"/><stop offset="0.042" stop-color="#00d9ff"/><stop offset="0.083" stop-color="#00d8ff"/><stop offset="0.125" stop-color="#00d6ff"/><stop offset="0.167" stop-color="#36d3ff"/><stop offset="0.208" stop-color="#6cd1ff"/><stop offset="0.250" stop-color="#a5ceff"/><stop offset="0.292" stop-color="#e3cbff"/><stop offset="0.333" stop-color="#ffaddd"/><stop offset="0.375" stop-color="#ff87b0"/><stop offset="0.417" stop-color="#ff6b8f"/><stop offset="0.458" stop-color="#ff5676"/><stop offset="0.500" stop-color="#ff4663"/><stop offset="0.542" stop-color="#ff3853"/><stop offset="0.583" stop-color="#ff2c45"/><stop offset="0.625" stop-color="#ff233a"/><stop offset="0.667" stop-color="#ff1a30"/><stop offset="0.708" stop-color="#ff1328"/><stop offset="0.750" stop-color="#ff0c20"/><stop offset="0.792" stop-color="#ff061a"/><stop offset="0.833" stop-color="#ff0014"/><stop offset="0.875" stop-color="#ff000e"/><stop offset="0.917" stop-color="#ff0009"/><stop offset="0.958" stop-color="#ff0004"/><stop offset="1.000" stop-color="#ff0000"/></linearGradient><linearGradient id="B60" gradientUnits="userSpaceOnUse" x1="145" x2="615" y1="0" y2="0"><stop offset="0.000" stop-color="#00d3ff"/><stop offset="0.042" stop-color="#00d1ff"/><stop offset="0.083" stop-color="#00ceff"/><stop offset="0.125" stop-color="#02ccff"/><stop offset="0.167" stop-color="#39c9ff"/><stop offset="0.208" stop-color="#6ec6ff"/><stop offset="0.250" stop-color="#a6c3ff"/><stop offset="0.292" stop-color="#e3bfff"/><stop offset="0.333" stop-color="#ffa3de"/><stop offset="0.375" stop-color="#ff7fb2"/><stop offset="0.417" stop-color="#ff6591"/><stop offset="0.458" stop-color="#ff5178"/><stop offset="0.500" stop-color="#ff4165"/><stop offset="0.542" stop-color="#ff3355"/><stop offset="0.583" stop-color="#ff2847"/><stop offset="0.625" stop-color="#ff1f3c"/><stop offset="0.667" stop-color="#ff1732"/><stop offset="0.708" stop-color="#ff102a"/><stop offset="0.750" stop-color="#ff0922"/><stop offset="0.792" stop-color="#ff031b"/><stop offset="0.833" stop-color="#ff0015"/><stop offset="0.875" stop-color="#ff0010"/><stop offset="0.917" stop-color="#ff000b"/><stop offset="0.958" stop-color="#ff0006"/><stop offset="1.000" stop-color="#ff0001"/></linearGradient><linearGradient id="B61" gradientUnits="userSpaceOnUse" x1="145" x2="615" y1="0" y2="0"><stop offset="0.000" stop-color="#00caff"/><stop offset="0.042" stop-color="#00c8ff"/><stop offset="0.083" stop-color="#00c5ff"/><stop offset="0.125" stop-color="#07c3ff"/><stop offset="0.167" stop-color="#3cc0ff"/><stop offset="0.208" stop-color="#70bcff"/><stop offset="0.250" stop-color="#a7b8ff"/><stop offset="0.292" stop-color="#e2b4ff"/><stop offset="0.333" stop-color="#ff9adf"/><stop offset="0.375" stop-color="#ff78b3"/><stop offset="0.417" stop-color="#ff5f93"/><stop offset="0.458" stop-color="#ff4b7a"/><stop offset="0.500" stop-color="#ff3c67"/><stop offset="0.542" stop-color="#ff2f57"/><stop offset="0.583" stop-color="#ff2449"/><stop offset="0.625" stop-color="#ff1b3e"/><stop offset="0.667" stop-color="#ff1334"/><stop offset="0.708" stop-color="#ff0c2b"/><stop offset="0.750" stop-color="#ff0624"/><stop offset="0.792" stop-color="#ff001d"/><stop offset="0.833" stop-color="#ff0017"/><stop offset="0.875" stop-color="#ff0011"/><stop offset="0.917" stop-color="#ff000c"/><stop offset="0.958" stop-color="#ff0007"/><stop offset="1.000" stop-color="#ff0003"/></linearGradient><linearGradient id="B62" gradientUnits="userSpaceOnUse" x1="145" x2="615" y1="0" y2="0"><stop offset="0.000" stop-color="#00c2ff"/><stop offset="0.042" stop-color="#00c0ff"/><stop offset="0.083" stop-color="#00bdff"/><stop offset="0.125" stop-color="#0cbaff"/><stop offset="0.167" stop-color="#3fb6ff"/><stop offset="0.208" stop-color="#72b2ff"/><stop offset="0.250" stop-color="#a8aeff"/><stop offset="0.292" stop-color="#e2a9ff"/><stop offset="0.333" stop-color="#ff90e1"/><stop offset="0.375" stop-color="#ff70b5"/><stop offset="0.417" stop-color="#ff5895"/><stop offset="0.458" stop-color="#ff467c"/><stop offset="0.500" stop-color="#ff3769"/><stop offset="0.542" stop-color="#ff2b59"/><stop offset="0.583" stop-color="#ff204b"/><stop offset="0.625" stop-color="#ff1840"/><stop offset="0.667" stop-color="#ff1036"/><stop offset="0.708" stop-color="#ff092d"/><stop offset="0.750" stop-color="#ff0226"/><stop offset="0.792" stop-color="#ff001f"/><stop offset="0.833" stop-color="#ff0019"/><stop offset="0.875" stop-color="#ff0013"/><stop offset="0.917" stop-color="#ff000e"/><stop offset="0.958" stop-color="#ff0009"/><stop offset="1.000" stop-color="#ff0004"/></linearGradient><linearGradient id="B63" gradientUnits="userSpaceOnUse" x1="145" x2="615" y1="0" y2="0"><stop offset="0.000" stop-color="#00bbff"/><stop offset="0.042" stop-color="#00b8ff"/><stop offset="0.083" stop-color="#00b4ff"/><stop offset="0.125" stop-color="#10b1ff"/><stop offset="0.167" stop-color="#42adff"/><stop offset="0.208" stop-color="#74a9ff"/><stop offset="0.250" stop-color="#a9a4ff"/><stop offset="0.292" stop-color="#e29fff"/><stop offset="0.333" stop-color="#ff88e2"/><stop offset="0.375" stop-color="#ff69b7"/><stop offset="0.417" stop-color="#ff5297"/><stop offset="0.458" stop-color="#ff407e"/><stop offset="0.500" stop-color="#ff326b"/><stop offset="0.542" stop-color="#ff265a"/><stop offset="0.583" stop-color="#ff1d4d"/><stop offset="0.625" stop-color="#ff1441"/><stop offset="0.667" stop-color="#ff0c38"/><stop offset="0.708" stop-color="#ff052f"/><stop offset="0.750" stop-color="#ff0027"/><stop offset="0.792" stop-color="#ff0020"/><stop offset="0.833" stop-color="#ff001a"/><stop offset="0.875" stop-color="#ff0015"/><stop offset="0.917" stop-color="#ff000f"/><stop offset="0.958" stop-color="#ff000b"/><stop offset="1.000" stop-color="#ff0006"/></linearGradient><linearGradient id="B64" gradientUnits="userSpaceOnUse" x1="145" x2="615" y1="0" y2="0"><stop offset="0.000" stop-color="#00b3ff"/><stop offset="0.042" stop-color="#00b0ff"/><stop offset="0.083" stop-color="#00acff"/><stop offset="0.125" stop-color="#14a8ff"/><stop offset="0.167" stop-color="#45a4ff"/><stop offset="0.208" stop-color="#769fff"/><stop offset="0.250" stop-color="#aa9aff"/><stop offset="0.292" stop-color="#e295ff"/><stop offset="0.333" stop-color="#ff7fe3"/><stop offset="0.375" stop-color="#ff62b8"/><stop offset="0.417" stop-color="#ff4c99"/><stop offset="0.458" stop-color="#ff3b80"/><stop offset="0.500" stop-color="#ff2e6c"/><stop offset="0.542" stop-color="#ff225c"/><stop offset="0.583" stop-color="#ff194f"/><stop offset="0.625" stop-color="#ff1043"/><stop offset="0.667" stop-color="#ff0939"/><stop offset="0.708" stop-color="#ff0231"/><stop offset="0.750" stop-color="#ff0029"/><stop offset="0.792" stop-color="#ff0022"/><stop offset="0.833" stop-color="#ff001c"/><stop offset="0.875" stop-color="#ff0016"/><stop offset="0.917" stop-color="#ff0011"/><stop offset="0.958" stop-color="#ff000c"/><stop offset="1.000" stop-color="#ff0008"/></linearGradient><linearGradient id="B65" gradientUnits="userSpaceOnUse" x1="145" x2="615" y1="0" y2="0"><stop offset="0.000" stop-color="#00abff"/><stop offset="0.042" stop-color="#00a8ff"/><stop offset="0.083" stop-color="#00a4ff"/><stop offset="0.125" stop-color="#18a0ff"/><stop offset="0.167" stop-color="#479bff"/><stop offset="0.208" stop-color="#7896ff"/><stop offset="0.250" stop-color="#ab91ff"/><stop offset="0.292" stop-color="#e18bff"/><stop offset="0.333" stop-color="#ff76e4"/><stop offset="0.375" stop-color="#ff5bba"/><stop offset="0.417" stop-color="#ff469a"/><stop offset="0.458" stop-color="#ff3682"/><stop offset="0.500" stop-color="#ff296e"/><stop offset="0.542" stop-color="#ff1e5e"/><stop offset="0.583" stop-color="#ff1550"/><stop offset="0.625" stop-color="#ff0c45"/><stop offset="0.667" stop-color="#ff053b"/><stop offset="0.708" stop-color="#ff0032"/><stop offset="0.750" stop-color="#ff002a"/><stop offset="0.792" stop-color="#ff0024"/><stop offset="0.833" stop-color="#ff001d"/><stop offset="0.875" stop-color="#ff0018"/><stop offset="0.917" stop-color="#ff0012"/><stop offset="0.958" stop-color="#ff000e"/><stop offset="1.000" stop-color="#ff0009"/></linearGradient><linearGradient id="B66" gradientUnits="userSpaceOnUse" x1="145" x2="615" y1="0" y2="0"><stop offset="0.000" stop-color="#00a4ff"/><stop offset="0.042" stop-color="#00a0ff"/><stop offset="0.083" stop-color="#009cff"/><stop offset="0.125" stop-color="#1b98ff"/><stop offset="0.167" stop-color="#4a93ff"/><stop offset="0.208" stop-color="#798eff"/><stop offset="0.250" stop-color="#ac88ff"/><stop offset="0.292" stop-color="#e181ff"/><stop offset="0.333" stop-color="#ff6ee6"/><stop offset="0.375" stop-color="#ff54bc"/><stop offset="0.417" stop-color="#ff409c"/><stop offset="0.458" stop-color="#ff3184"/><stop offset="0.500" stop-color="#ff2470"/><stop offset="0.542" stop-color="#ff1a60"/><stop offset="0.583" stop-color="#ff1152"/><stop offset="0.625" stop-color="#ff0947"/><stop offset="0.667" stop-color="#ff013d"/><stop offset="0.708" stop-color="#ff0034"/><stop offset="0.750" stop-color="#ff002c"/><stop offset="0.792" stop-color="#ff0025"/><stop offset="0.833" stop-color="#ff001f"/><stop offset="0.875" stop-color="#ff0019"/><stop offset="0.917" stop-color="#ff0014"/><stop offset="0.958" stop-color="#ff000f"/><stop offset="1.000" stop-color="#ff000a"/></linearGradient><linearGradient id="B67" gradientUnits="userSpaceOnUse" x1="145" x2="615" y1="0" y2="0"><stop offset="0.000" stop-color="#009dff"/><stop offset="0.042" stop-color="#0099ff"/><stop offset="0.083" stop-color="#0095ff"/><stop offset="0.125" stop-color="#1f90ff"/><stop offset="0.167" stop-color="#4c8bff"/><stop offset="0.208" stop-color="#7b85ff"/><stop offset="0.250" stop-color="#ac7fff"/><stop offset="0.292" stop-color="#e178ff"/><stop offset="0.333" stop-color="#ff66e7"/><stop offset="0.375" stop-color="#ff4dbd"/><stop offset="0.417" stop-color="#ff3a9e"/><stop offset="0.458" stop-color="#ff2c85"/><stop offset="0.500" stop-color="#ff2072"/><stop offset="0.542" stop-color="#ff1562"/><stop offset="0.583" stop-color="#ff0d54"/><stop offset="0.625" stop-color="#ff0548"/><stop offset="0.667" stop-color="#ff003e"/><stop offset="0.708" stop-color="#ff0035"/><stop offset="0.750" stop-color="#ff002e"/><stop offset="0.792" stop-color="#ff0027"/><stop offset="0.833" stop-color="#ff0020"/><stop offset="0.875" stop-color="#ff001b"/><stop offset="0.917" stop-color="#ff0015"/><stop offset="0.958" stop-color="#ff0010"/><stop offset="1.000" stop-color="#ff000c"/></linearGradient><linearGradient id="B68" gradientUnits="userSpaceOnUse" x1="145" x2="615" y1="0" y2="0"><stop offset="0.000" stop-color="#0096ff"/><stop offset="0.042" stop-color="#0092ff"/><stop offset="0.083" stop-color="#008dff"/><stop offset="0.125" stop-color="#2288ff"/><stop offset="0.167" stop-color="#4f83ff"/><stop offset="0.208" stop-color="#7d7dff"/><stop offset="0.250" stop-color="#ad77ff"/><stop offset="0.292" stop-color="#e16fff"/><stop offset="0.333" stop-color="#ff5ee8"/><stop offset="0.375" stop-color="#ff47bf"/><stop offset="0.417" stop-color="#ff35a0"/><stop offset="0.458" stop-color="#ff2787"/><stop offset="0.500" stop-color="#ff1b74"/><stop offset="0.542" stop-color="#ff1163"/><stop offset="0.583" stop-color="#ff0956"/><stop offset="0.625" stop-color="#ff004a"/><stop offset="0.667" stop-color="#ff0040"/><stop offset="0.708" stop-color="#ff0037"/><stop offset="0.750" stop-color="#ff002f"/><stop offset="0.792" stop-color="#ff0028"/><stop offset="0.833" stop-color="#ff0022"/><stop offset="0.875" stop-color="#ff001c"/><stop offset="0.917" stop-color="#ff0017"/><stop offset="0.958" stop-color="#ff0012"/><stop offset="1.000" stop-color="#ff000d"/></linearGradient><linearGradient id="B69" gradientUnits="userSpaceOnUse" x1="145" x2="615" y1="0" y2="0"><stop offset="0.000" stop-color="#008fff"/><stop offset="0.042" stop-color="#008bff"/><stop offset="0.083" stop-color="#0086ff"/><stop offset="0.125" stop-color="#2581ff"/><stop offset="0.167" stop-color="#517bff"/><stop offset="0.208" stop-color="#7e75ff"/><stop offset="0.250" stop-color="#ae6eff"/><stop offset="0.292" stop-color="#e167ff"/><stop offset="0.333" stop-color="#ff56e9"/><stop offset="0.375" stop-color="#ff40c0"/><stop offset="0.417" stop-color="#ff2fa1"/><stop offset="0.458" stop-color="#ff2189"/><stop offset="0.500" stop-color="#ff1675"/><stop offset="0.542" stop-color="#ff0d65"/><stop offset="0.583" stop-color="#ff0457"/><stop offset="0.625" stop-color="#ff004c"/><stop offset="0.667" stop-color="#ff0041"/><stop offset="0.708" stop-color="#ff0039"/><stop offset="0.750" stop-color="#ff0031"/><stop offset="0.792" stop-color="#ff002a"/><stop offset="0.833" stop-color="#ff0023"/><stop offset="0.875" stop-color="#ff001d"/><stop offset="0.917" stop-color="#ff0018"/><stop offset="0.958" stop-color="#ff0013"/><stop offset="1.000" stop-color="#ff000f"/></linearGradient><linearGradient id="B70" gradientUnits="userSpaceOnUse" x1="145" x2="615" y1="0" y2="0"><stop offset="0.000" stop-color="#0089ff"/><stop offset="0.042" stop-color="#0084ff"/><stop offset="0.083" stop-color="#007fff"/><stop offset="0.125" stop-color="#287aff"/><stop offset="0.167" stop-color="#5374ff"/><stop offset="0.208" stop-color="#806dff"/><stop offset="0.250" stop-color="#ae66ff"/><stop offset="0.292" stop-color="#e05eff"/><stop offset="0.333" stop-color="#ff4fea"/><stop offset="0.375" stop-color="#ff3ac1"/><stop offset="0.417" stop-color="#ff29a3"/><stop offset="0.458" stop-color="#ff1c8a"/><stop offset="0.500" stop-color="#ff1277"/><stop offset="0.542" stop-color="#ff0867"/><stop offset="0.583" stop-color="#ff0059"/><stop offset="0.625" stop-color="#ff004d"/><stop offset="0.667" stop-color="#ff0043"/><stop offset="0.708" stop-color="#ff003a"/><stop offset="0.750" stop-color="#ff0032"/><stop offset="0.792" stop-color="#ff002b"/><stop offset="0.833" stop-color="#ff0025"/><stop offset="0.875" stop-color="#ff001f"/><stop offset="0.917" stop-color="#ff001a"/><stop offset="0.958" stop-color="#ff0015"/><stop offset="1.000" stop-color="#ff0010"/></linearGradient><linearGradient id="B71" gradientUnits="userSpaceOnUse" x1="145" x2="615" y1="0" y2="0"><stop offset="0.000" stop-color="#0082ff"/><stop offset="0.042" stop-color="#007dff"/><stop offset="0.083" stop-color="#0078ff"/><stop offset="0.125" stop-color="#2b73ff"/><stop offset="0.167" stop-color="#556cff"/><stop offset="0.208" stop-color="#8166ff"/><stop offset="0.250" stop-color="#af5eff"/><stop offset="0.292" stop-color="#e056ff"/><stop offset="0.333" stop-color="#ff47eb"/><stop offset="0.375" stop-color="#ff33c3"/><stop offset="0.417" stop-color="#ff24a4"/><stop offset="0.458" stop-color="#ff178c"/><stop offset="0.500" stop-color="#ff0d79"/><stop offset="0.542" stop-color="#ff0468"/><stop offset="0.583" stop-color="#ff005b"/><stop offset="0.625" stop-color="#ff004f"/><stop offset="0.667" stop-color="#ff0045"/><stop offset="0.708" stop-color="#ff003c"/><stop offset="0.750" stop-color="#ff0034"/><stop offset="0.792" stop-color="#ff002d"/><stop offset="0.833" stop-color="#ff0026"/><stop offset="0.875" stop-color="#ff0020"/><stop offset="0.917" stop-color="#ff001b"/><stop offset="0.958" stop-color="#ff0016"/><stop offset="1.000" stop-color="#ff0011"/></linearGradient><linearGradient id="B72" gradientUnits="userSpaceOnUse" x1="145" x2="615" y1="0" y2="0"><stop offset="0.000" stop-color="#007cff"/><stop offset="0.042" stop-color="#0077ff"/><stop offset="0.083" stop-color="#0272ff"/><stop offset="0.125" stop-color="#2e6cff"/><stop offset="0.167" stop-color="#5765ff"/><stop offset="0.208" stop-color="#825eff"/><stop offset="0.250" stop-color="#b057ff"/><stop offset="0.292" stop-color="#e04eff"/><stop offset="0.333" stop-color="#ff40ec"/><stop offset="0.375" stop-color="#ff2dc4"/><stop offset="0.417" stop-color="#ff1ea6"/><stop offset="0.458" stop-color="#ff128e"/><stop offset="0.500" stop-color="#ff087a"/><stop offset="0.542" stop-color="#ff006a"/><stop offset="0.583" stop-color="#ff005c"/><stop offset="0.625" stop-color="#ff0050"/><stop offset="0.667" stop-color="#ff0046"/><stop offset="0.708" stop-color="#ff003d"/><stop offset="0.750" stop-color="#ff0035"/><stop offset="0.792" stop-color="#ff002e"/><stop offset="0.833" stop-color="#ff0028"/><stop offset="0.875" stop-color="#ff0022"/><stop offset="0.917" stop-color="#ff001c"/><stop offset="0.958" stop-color="#ff0017"/><stop offset="1.000" stop-color="#ff0013"/></linearGradient><linearGradient id="B73" gradientUnits="userSpaceOnUse" x1="145" x2="615" y1="0" y2="0"><stop offset="0.000" stop-color="#0076ff"/><stop offset="0.042" stop-color="#0071ff"/><stop offset="0.083" stop-color="#066bff"/><stop offset="0.125" stop-color="#3065ff"/><stop offset="0.167" stop-color="#595eff"/><stop offset="0.208" stop-color="#8457ff"/><stop offset="0.250" stop-color="#b04fff"/><stop offset="0.292" stop-color="#e046ff"/><stop offset="0.333" stop-color="#ff38ed"/><stop offset="0.375" stop-color="#ff27c5"/><stop offset="0.417" stop-color="#ff19a7"/><stop offset="0.458" stop-color="#ff0d8f"/><stop offset="0.500" stop-color="#ff037c"/><stop offset="0.542" stop-color="#ff006b"/><stop offset="0.583" stop-color="#ff005e"/><stop offset="0.625" stop-color="#ff0052"/><stop offset="0.667" stop-color="#ff0048"/><stop offset="0.708" stop-color="#ff003f"/><stop offset="0.750" stop-color="#ff0037"/><stop offset="0.792" stop-color="#ff002f"/><stop offset="0.833" stop-color="#ff0029"/><stop offset="0.875" stop-color="#ff0023"/><stop offset="0.917" stop-color="#ff001e"/><stop offset="0.958" stop-color="#ff0019"/><stop offset="1.000" stop-color="#ff0014"/></linearGradient><linearGradient id="B74" gradientUnits="userSpaceOnUse" x1="145" x2="615" y1="0" y2="0"><stop offset="0.000" stop-color="#0070ff"/><stop offset="0.042" stop-color="#006aff"/><stop offset="0.083" stop-color="#0a65ff"/><stop offset="0.125" stop-color="#335eff"/><stop offset="0.167" stop-color="#5b57ff"/><stop offset="0.208" stop-color="#8550ff"/><stop offset="0.250" stop-color="#b148ff"/><stop offset="0.292" stop-color="#e03fff"/><stop offset="0.333" stop-color="#ff31ee"/><stop offset="0.375" stop-color="#ff20c7"/><stop offset="0.417" stop-color="#ff13a9"/><stop offset="0.458" stop-color="#ff0891"/><stop offset="0.500" stop-color="#ff007d"/><stop offset="0.542" stop-color="#ff006d"/><stop offset="0.583" stop-color="#ff005f"/><stop offset="0.625" stop-color="#ff0053"/><stop offset="0.667" stop-color="#ff0049"/><stop offset="0.708" stop-color="#ff0040"/><stop offset="0.750" stop-color="#ff0038"/><stop offset="0.792" stop-color="#ff0031"/><stop offset="0.833" stop-color="#ff002a"/><stop offset="0.875" stop-color="#ff0024"/><stop offset="0.917" stop-color="#ff001f"/><stop offset="0.958" stop-color="#ff001a"/><stop offset="1.000" stop-color="#ff0015"/></linearGradient><linearGradient id="B75" gradientUnits="userSpaceOnUse" x1="145" x2="615" y1="0" y2="0"><stop offset="0.000" stop-color="#006aff"/><stop offset="0.042" stop-color="#0064ff"/><stop offset="0.083" stop-color="#0d5eff"/><stop offset="0.125" stop-color="#3558ff"/><stop offset="0.167" stop-color="#5d51ff"/><stop offset="0.208" stop-color="#8649ff"/><stop offset="0.250" stop-color="#b241ff"/><stop offset="0.292" stop-color="#e037ff"/><stop offset="0.333" stop-color="#ff2aef"/><stop offset="0.375" stop-color="#ff1ac8"/><stop offset="0.417" stop-color="#ff0eaa"/><stop offset="0.458" stop-color="#ff0392"/><stop offset="0.500" stop-color="#ff007f"/><stop offset="0.542" stop-color="#ff006f"/><stop offset="0.583" stop-color="#ff0061"/><stop offset="0.625" stop-color="#ff0055"/><stop offset="0.667" stop-color="#ff004b"/><stop offset="0.708" stop-color="#ff0042"/><stop offset="0.750" stop-color="#ff0039"/><stop offset="0.792" stop-color="#ff0032"/><stop offset="0.833" stop-color="#ff002c"/><stop offset="0.875" stop-color="#ff0026"/><stop offset="0.917" stop-color="#ff0020"/><stop offset="0.958" stop-color="#ff001b"/><stop offset="1.000" stop-color="#ff0017"/></linearGradient><linearGradient id="B76" gradientUnits="userSpaceOnUse" x1="145" x2="615" y1="0" y2="0"><stop offset="0.000" stop-color="#0064ff"/><stop offset="0.042" stop-color="#005eff"/><stop offset="0.083" stop-color="#1058ff"/><stop offset="0.125" stop-color="#3851ff"/><stop offset="0.167" stop-color="#5f4aff"/><stop offset="0.208" stop-color="#8842ff"/><stop offset="0.250" stop-color="#b23aff"/><stop offset="0.292" stop-color="#df30ff"/><stop offset="0.333" stop-color="#ff23ef"/><stop offset="0.375" stop-color="#ff14c9"/><stop offset="0.417" stop-color="#ff08ab"/><stop offset="0.458" stop-color="#ff0094"/><stop offset="0.500" stop-color="#ff0080"/><stop offset="0.542" stop-color="#ff0070"/><stop offset="0.583" stop-color="#ff0062"/><stop offset="0.625" stop-color="#ff0056"/><stop offset="0.667" stop-color="#ff004c"/><stop offset="0.708" stop-color="#ff0043"/><stop offset="0.750" stop-color="#ff003b"/><stop offset="0.792" stop-color="#ff0034"/><stop offset="0.833" stop-color="#ff002d"/><stop offset="0.875" stop-color="#ff0027"/><stop offset="0.917" stop-color="#ff0022"/><stop offset="0.958" stop-color="#ff001d"/><stop offset="1.000" stop-color="#ff0018"/></linearGradient><linearGradient id="B77" gradientUnits="userSpaceOnUse" x1="145" x2="615" y1="0" y2="0"><stop offset="0.000" stop-color="#005eff"/><stop offset="0.042" stop-color="#0058ff"/><stop offset="0.083" stop-color="#1352ff"/><stop offset="0.125" stop-color="#3a4bff"/><stop offset="0.167" stop-color="#6144ff"/><stop offset="0.208" stop-color="#893cff"/><stop offset="0.250" stop-color="#b333ff"/><stop offset="0.292" stop-color="#df29ff"/><stop offset="0.333" stop-color="#ff1cf0"/><stop offset="0.375" stop-color="#ff0eca"/><stop offset="0.417" stop-color="#ff02ad"/><stop offset="0.458" stop-color="#ff0095"/><stop offset="0.500" stop-color="#ff0082"/><stop offset="0.542" stop-color="#ff0072"/><stop offset="0.583" stop-color="#ff0064"/><stop offset="0.625" stop-color="#ff0058"/><stop offset="0.667" stop-color="#ff004e"/><stop offset="0.708" stop-color="#ff0044"/><stop offset="0.750" stop-color="#ff003c"/><stop offset="0.792" stop-color="#ff0035"/><stop offset="0.833" stop-color="#ff002e"/><stop offset="0.875" stop-color="#ff0028"/><stop offset="0.917" stop-color="#ff0023"/><stop offset="0.958" stop-color="#ff001e"/><stop offset="1.000" stop-color="#ff0019"/></linearGradient><linearGradient id="B78" gradientUnits="userSpaceOnUse" x1="145" x2="615" y1="0" y2="0"><stop offset="0.000" stop-color="#0059ff"/><stop offset="0.042" stop-color="#0053ff"/><stop offset="0.083" stop-color="#164cff"/><stop offset="0.125" stop-color="#3c45ff"/><stop offset="0.167" stop-color="#623dff"/><stop offset="0.208" stop-color="#8a35ff"/><stop offset="0.250" stop-color="#b32cff"/><stop offset="0.292" stop-color="#df22ff"/><stop offset="0.333" stop-color="#ff15f1"/><stop offset="0.375" stop-color="#ff08cb"/><stop offset="0.417" stop-color="#ff00ae"/><stop offset="0.458" stop-color="#ff0097"/><stop offset="0.500" stop-color="#ff0083"/><stop offset="0.542" stop-color="#ff0073"/><stop offset="0.583" stop-color="#ff0065"/><stop offset="0.625" stop-color="#ff0059"/><stop offset="0.667" stop-color="#ff004f"/><stop offset="0.708" stop-color="#ff0046"/><stop offset="0.750" stop-color="#ff003e"/><stop offset="0.792" stop-color="#ff0036"/><stop offset="0.833" stop-color="#ff0030"/><stop offset="0.875" stop-color="#ff002a"/><stop offset="0.917" stop-color="#ff0024"/><stop offset="0.958" stop-color="#ff001f"/><stop offset="1.000" stop-color="#ff001a"/></linearGradient><linearGradient id="B79" gradientUnits="userSpaceOnUse" x1="145" x2="615" y1="0" y2="0"><stop offset="0.000" stop-color="#0053ff"/><stop offset="0.042" stop-color="#004dff"/><stop offset="0.083" stop-color="#1946ff"/><stop offset="0.125" stop-color="#3f3fff"/><stop offset="0.167" stop-color="#6437ff"/><stop offset="0.208" stop-color="#8b2fff"/><stop offset="0.250" stop-color="#b425ff"/><stop offset="0.292" stop-color="#df1bff"/><stop offset="0.333" stop-color="#ff0ef2"/><stop offset="0.375" stop-color="#ff01cd"/><stop offset="0.417" stop-color="#ff00af"/><stop offset="0.458" stop-color="#ff0098"/><stop offset="0.500" stop-color="#ff0085"/><stop offset="0.542" stop-color="#ff0074"/><stop offset="0.583" stop-color="#ff0067"/><stop offset="0.625" stop-color="#ff005b"/><stop offset="0.667" stop-color="#ff0050"/><stop offset="0.708" stop-color="#ff0047"/><stop offset="0.750" stop-color="#ff003f"/><stop offset="0.792" stop-color="#ff0038"/><stop offset="0.833" stop-color="#ff0031"/><stop offset="0.875" stop-color="#ff002b"/><stop offset="0.917" stop-color="#ff0025"/><stop offset="0.958" stop-color="#ff0020"/><stop offset="1.000" stop-color="#ff001c"/></linearGradient><linearGradient id="B80" gradientUnits="userSpaceOnUse" x1="145" x2="615" y1="0" y2="0"><stop offset="0.000" stop-color="#004eff"/><stop offset="0.042" stop-color="#0047ff"/><stop offset="0.083" stop-color="#1c41ff"/><stop offset="0.125" stop-color="#4139ff"/><stop offset="0.167" stop-color="#6631ff"/><stop offset="0.208" stop-color="#8c28ff"/><stop offset="0.250" stop-color="#b41fff"/><stop offset="0.292" stop-color="#df14ff"/><stop offset="0.333" stop-color="#ff07f3"/><stop offset="0.375" stop-color="#ff00ce"/><stop offset="0.417" stop-color="#ff00b1"/><stop offset="0.458" stop-color="#ff0099"/><stop offset="0.500" stop-color="#ff0086"/><stop offset="0.542" stop-color="#ff0076"/><stop offset="0.583" stop-color="#ff0068"/><stop offset="0.625" stop-color="#ff005c"/><stop offset="0.667" stop-color="#ff0052"/><stop offset="0.708" stop-color="#ff0048"/><stop offset="0.750" stop-color="#ff0040"/><stop offset="0.792" stop-color="#ff0039"/><stop offset="0.833" stop-color="#ff0032"/><stop offset="0.875" stop-color="#ff002c"/><stop offset="0.917" stop-color="#ff0027"/><stop offset="0.958" stop-color="#ff0022"/><stop offset="1.000" stop-color="#ff001d"/></linearGradient><linearGradient id="B81" gradientUnits="userSpaceOnUse" x1="145" x2="615" y1="0" y2="0"><stop offset="0.000" stop-color="#0048ff"/><stop offset="0.042" stop-color="#0042ff"/><stop offset="0.083" stop-color="#1f3bff"/><stop offset="0.125" stop-color="#4333ff"/><stop offset="0.167" stop-color="#672bff"/><stop offset="0.208" stop-color="#8d22ff"/><stop offset="0.250" stop-color="#b518ff"/><stop offset="0.292" stop-color="#df0dff"/><stop offset="0.333" stop-color="#ff00f3"/><stop offset="0.375" stop-color="#ff00cf"/><stop offset="0.417" stop-color="#ff00b2"/><stop offset="0.458" stop-color="#ff009b"/><stop offset="0.500" stop-color="#ff0087"/><stop offset="0.542" stop-color="#ff0077"/><stop offset="0.583" stop-color="#ff0069"/><stop offset="0.625" stop-color="#ff005e"/><stop offset="0.667" stop-color="#ff0053"/><stop offset="0.708" stop-color="#ff004a"/><stop offset="0.750" stop-color="#ff0042"/><stop offset="0.792" stop-color="#ff003a"/><stop offset="0.833" stop-color="#ff0034"/><stop offset="0.875" stop-color="#ff002d"/><stop offset="0.917" stop-color="#ff0028"/><stop offset="0.958" stop-color="#ff0023"/><stop offset="1.000" stop-color="#ff001e"/></linearGradient><linearGradient id="B82" gradientUnits="userSpaceOnUse" x1="145" x2="615" y1="0" y2="0"><stop offset="0.000" stop-color="#0043ff"/><stop offset="0.042" stop-color="#003dff"/><stop offset="0.083" stop-color="#2135ff"/><stop offset="0.125" stop-color="#452eff"/><stop offset="0.167" stop-color="#6925ff"/><stop offset="0.208" stop-color="#8e1cff"/><stop offset="0.250" stop-color="#b512ff"/><stop offset="0.292" stop-color="#df06ff"/><stop offset="0.333" stop-color="#ff00f4"/><stop offset="0.375" stop-color="#ff00d0"/><stop offset="0.417" stop-color="#ff00b3"/><stop offset="0.458" stop-color="#ff009c"/><stop offset="0.500" stop-color="#ff0089"/><stop offset="0.542" stop-color="#ff0079"/><stop offset="0.583" stop-color="#ff006b"/><stop offset="0.625" stop-color="#ff005f"/><stop offset="0.667" stop-color="#ff0054"/><stop offset="0.708" stop-color="#ff004b"/><stop offset="0.750" stop-color="#ff0043"/><stop offset="0.792" stop-color="#ff003b"/><stop offset="0.833" stop-color="#ff0035"/><stop offset="0.875" stop-color="#ff002f"/><stop offset="0.917" stop-color="#ff0029"/><stop offset="0.958" stop-color="#ff0024"/><stop offset="1.000" stop-color="#ff001f"/></linearGradient><linearGradient id="B83" gradientUnits="userSpaceOnUse" x1="145" x2="615" y1="0" y2="0"><stop offset="0.000" stop-color="#003eff"/><stop offset="0.042" stop-color="#0037ff"/><stop offset="0.083" stop-color="#2430ff"/><stop offset="0.125" stop-color="#4728ff"/><stop offset="0.167" stop-color="#6a1fff"/><stop offset="0.208" stop-color="#8f16ff"/><stop offset="0.250" stop-color="#b60bff"/><stop offset="0.292" stop-color="#de00ff"/><stop offset="0.333" stop-color="#ff00f5"/><stop offset="0.375" stop-color="#ff00d1"/><stop offset="0.417" stop-color="#ff00b4"/><stop offset="0.458" stop-color="#ff009d"/><stop offset="0.500" stop-color="#ff008a"/><stop offset="0.542" stop-color="#ff007a"/><stop offset="0.583" stop-color="#ff006c"/><stop offset="0.625" stop-color="#ff0060"/><stop offset="0.667" stop-color="#ff0056"/><stop offset="0.708" stop-color="#ff004c"/><stop offset="0.750" stop-color="#ff0044"/><stop offset="0.792" stop-color="#ff003d"/><stop offset="0.833" stop-color="#ff0036"/><stop offset="0.875" stop-color="#ff0030"/><stop offset="0.917" stop-color="#ff002a"/><stop offset="0.958" stop-color="#ff0025"/><stop offset="1.000" stop-color="#ff0020"/></linearGradient><linearGradient id="B84" gradientUnits="userSpaceOnUse" x1="145" x2="615" y1="0" y2="0"><stop offset="0.000" stop-color="#0039ff"/><stop offset="0.042" stop-color="#0232ff"/><stop offset="0.083" stop-color="#262bff"/><stop offset="0.125" stop-color="#4923ff"/><stop offset="0.167" stop-color="#6c1aff"/><stop offset="0.208" stop-color="#9010ff"/><stop offset="0.250" stop-color="#b604ff"/><stop offset="0.292" stop-color="#de00ff"/><stop offset="0.333" stop-color="#ff00f6"/><stop offset="0.375" stop-color="#ff00d2"/><stop offset="0.417" stop-color="#ff00b5"/><stop offset="0.458" stop-color="#ff009e"/><stop offset="0.500" stop-color="#ff008b"/><stop offset="0.542" stop-color="#ff007b"/><stop offset="0.583" stop-color="#ff006e"/><stop offset="0.625" stop-color="#ff0062"/><stop offset="0.667" stop-color="#ff0057"/><stop offset="0.708" stop-color="#ff004e"/><stop offset="0.750" stop-color="#ff0045"/><stop offset="0.792" stop-color="#ff003e"/><stop offset="0.833" stop-color="#ff0037"/><stop offset="0.875" stop-color="#ff0031"/><stop offset="0.917" stop-color="#ff002b"/><stop offset="0.958" stop-color="#ff0026"/><stop offset="1.000" stop-color="#ff0021"/></linearGradient><linearGradient id="B85" gradientUnits="userSpaceOnUse" x1="145" x2="615" y1="0" y2="0"><stop offset="0.000" stop-color="#0034ff"/><stop offset="0.042" stop-color="#052dff"/><stop offset="0.083" stop-color="#2825ff"/><stop offset="0.125" stop-color="#4b1dff"/><stop offset="0.167" stop-color="#6d14ff"/><stop offset="0.208" stop-color="#910aff"/><stop offset="0.250" stop-color="#b700ff"/><stop offset="0.292" stop-color="#de00ff"/><stop offset="0.333" stop-color="#ff00f6"/><stop offset="0.375" stop-color="#ff00d3"/><stop offset="0.417" stop-color="#ff00b7"/><stop offset="0.458" stop-color="#ff00a0"/><stop offset="0.500" stop-color="#ff008d"/><stop offset="0.542" stop-color="#ff007d"/><stop offset="0.583" stop-color="#ff006f"/><stop offset="0.625" stop-color="#ff0063"/><stop offset="0.667" stop-color="#ff0058"/><stop offset="0.708" stop-color="#ff004f"/><stop offset="0.750" stop-color="#ff0047"/><stop offset="0.792" stop-color="#ff003f"/><stop offset="0.833" stop-color="#ff0038"/><stop offset="0.875" stop-color="#ff0032"/><stop offset="0.917" stop-color="#ff002d"/><stop offset="0.958" stop-color="#ff0027"/><stop offset="1.000" stop-color="#ff0023"/></linearGradient><linearGradient id="B86" gradientUnits="userSpaceOnUse" x1="145" x2="615" y1="0" y2="0"><stop offset="0.000" stop-color="#002fff"/><stop offset="0.042" stop-color="#0828ff"/><stop offset="0.083" stop-color="#2b20ff"/><stop offset="0.125" stop-color="#4c17ff"/><stop offset="0.167" stop-color="#6f0eff"/><stop offset="0.208" stop-color="#9203ff"/><stop offset="0.250" stop-color="#b700ff"/><stop offset="0.292" stop-color="#de00ff"/><stop offset="0.333" stop-color="#ff00f7"/><stop offset="0.375" stop-color="#ff00d4"/><stop offset="0.417" stop-color="#ff00b8"/><stop offset="0.458" stop-color="#ff00a1"/><stop offset="0.500" stop-color="#ff008e"/><stop offset="0.542" stop-color="#ff007e"/><stop offset="0.583" stop-color="#ff0070"/><stop offset="0.625" stop-color="#ff0064"/><stop offset="0.667" stop-color="#ff005a"/><stop offset="0.708" stop-color="#ff0050"/><stop offset="0.750" stop-color="#ff0048"/><stop offset="0.792" stop-color="#ff0040"/><stop offset="0.833" stop-color="#ff003a"/><stop offset="0.875" stop-color="#ff0033"/><stop offset="0.917" stop-color="#ff002e"/><stop offset="0.958" stop-color="#ff0029"/><stop offset="1.000" stop-color="#ff0024"/></linearGradient><linearGradient id="B87" gradientUnits="userSpaceOnUse" x1="145" x2="615" y1="0" y2="0"><stop offset="0.000" stop-color="#002aff"/><stop offset="0.042" stop-color="#0b23ff"/><stop offset="0.083" stop-color="#2d1bff"/><stop offset="0.125" stop-color="#4e12ff"/><stop offset="0.167" stop-color="#7008ff"/><stop offset="0.208" stop-color="#9300ff"/><stop offset="0.250" stop-color="#b700ff"/><stop offset="0.292" stop-color="#de00ff"/><stop offset="0.333" stop-color="#ff00f8"/><stop offset="0.375" stop-color="#ff00d5"/><stop offset="0.417" stop-color="#ff00b9"/><stop offset="0.458" stop-color="#ff00a2"/><stop offset="0.500" stop-color="#ff008f"/><stop offset="0.542" stop-color="#ff007f"/><stop offset="0.583" stop-color="#ff0071"/><stop offset="0.625" stop-color="#ff0065"/><stop offset="0.667" stop-color="#ff005b"/><stop offset="0.708" stop-color="#ff0052"/><stop offset="0.750" stop-color="#ff0049"/><stop offset="0.792" stop-color="#ff0042"/><stop offset="0.833" stop-color="#ff003b"/><stop offset="0.875" stop-color="#ff0035"/><stop offset="0.917" stop-color="#ff002f"/><stop offset="0.958" stop-color="#ff002a"/><stop offset="1.000" stop-color="#ff0025"/></linearGradient><linearGradient id="B88" gradientUnits="userSpaceOnUse" x1="145" x2="615" y1="0" y2="0"><stop offset="0.000" stop-color="#0025ff"/><stop offset="0.042" stop-color="#0e1eff"/><stop offset="0.083" stop-color="#2f16ff"/><stop offset="0.125" stop-color="#500cff"/><stop offset="0.167" stop-color="#7102ff"/><stop offset="0.208" stop-color="#9400ff"/><stop offset="0.250" stop-color="#b800ff"/><stop offset="0.292" stop-color="#de00ff"/><stop offset="0.333" stop-color="#ff00f8"/><stop offset="0.375" stop-color="#ff00d6"/><stop offset="0.417" stop-color="#ff00ba"/><stop offset="0.458" stop-color="#ff00a3"/><stop offset="0.500" stop-color="#ff0090"/><stop offset="0.542" stop-color="#ff0080"/><stop offset="0.583" stop-color="#ff0073"/><stop offset="0.625" stop-color="#ff0067"/><stop offset="0.667" stop-color="#ff005c"/><stop offset="0.708" stop-color="#ff0053"/><stop offset="0.750" stop-color="#ff004a"/><stop offset="0.792" stop-color="#ff0043"/><stop offset="0.833" stop-color="#ff003c"/><stop offset="0.875" stop-color="#ff0036"/><stop offset="0.917" stop-color="#ff0030"/><stop offset="0.958" stop-color="#ff002b"/><stop offset="1.000" stop-color="#ff0026"/></linearGradient><linearGradient id="B89" gradientUnits="userSpaceOnUse" x1="145" x2="615" y1="0" y2="0"><stop offset="0.000" stop-color="#0020ff"/><stop offset="0.042" stop-color="#1119ff"/><stop offset="0.083" stop-color="#3110ff"/><stop offset="0.125" stop-color="#5107ff"/><stop offset="0.167" stop-color="#7200ff"/><stop offset="0.208" stop-color="#9500ff"/><stop offset="0.250" stop-color="#b800ff"/><stop offset="0.292" stop-color="#de00ff"/><stop offset="0.333" stop-color="#ff00f9"/><stop offset="0.375" stop-color="#ff00d7"/><stop offset="0.417" stop-color="#ff00bb"/><stop offset="0.458" stop-color="#ff00a5"/><stop offset="0.500" stop-color="#ff0092"/><stop offset="0.542" stop-color="#ff0082"/><stop offset="0.583" stop-color="#ff0074"/><stop offset="0.625" stop-color="#ff0068"/><stop offset="0.667" stop-color="#ff005d"/><stop offset="0.708" stop-color="#ff0054"/><stop offset="0.750" stop-color="#ff004c"/><stop offset="0.792" stop-color="#ff0044"/><stop offset="0.833" stop-color="#ff003d"/><stop offset="0.875" stop-color="#ff0037"/><stop offset="0.917" stop-color="#ff0031"/><stop offset="0.958" stop-color="#ff002c"/><stop offset="1.000" stop-color="#ff0027"/></linearGradient><linearGradient id="B90" gradientUnits="userSpaceOnUse" x1="145" x2="615" y1="0" y2="0"><stop offset="0.000" stop-color="#001cff"/><stop offset="0.042" stop-color="#1314ff"/><stop offset="0.083" stop-color="#330bff"/><stop offset="0.125" stop-color="#5301ff"/><stop offset="0.167" stop-color="#7400ff"/><stop offset="0.208" stop-color="#9500ff"/><stop offset="0.250" stop-color="#b900ff"/><stop offset="0.292" stop-color="#de00ff"/><stop offset="0.333" stop-color="#ff00fa"/><stop offset="0.375" stop-color="#ff00d7"/><stop offset="0.417" stop-color="#ff00bc"/><stop offset="0.458" stop-color="#ff00a6"/><stop offset="0.500" stop-color="#ff0093"/><stop offset="0.542" stop-color="#ff0083"/><stop offset="0.583" stop-color="#ff0075"/><stop offset="0.625" stop-color="#ff0069"/><stop offset="0.667" stop-color="#ff005f"/><stop offset="0.708" stop-color="#ff0055"/><stop offset="0.750" stop-color="#ff004d"/><stop offset="0.792" stop-color="#ff0045"/><stop offset="0.833" stop-color="#ff003e"/><stop offset="0.875" stop-color="#ff0038"/><stop offset="0.917" stop-color="#ff0032"/><stop offset="0.958" stop-color="#ff002d"/><stop offset="1.000" stop-color="#ff0028"/></linearGradient><linearGradient id="B91" gradientUnits="userSpaceOnUse" x1="145" x2="615" y1="0" y2="0"><stop offset="0.000" stop-color="#0017ff"/><stop offset="0.042" stop-color="#160fff"/><stop offset="0.083" stop-color="#3506ff"/><stop offset="0.125" stop-color="#5500ff"/><stop offset="0.167" stop-color="#7500ff"/><stop offset="0.208" stop-color="#9600ff"/><stop offset="0.250" stop-color="#b900ff"/><stop offset="0.292" stop-color="#dd00ff"/><stop offset="0.333" stop-color="#ff00fa"/><stop offset="0.375" stop-color="#ff00d8"/><stop offset="0.417" stop-color="#ff00bd"/><stop offset="0.458" stop-color="#ff00a7"/><stop offset="0.500" stop-color="#ff0094"/><stop offset="0.542" stop-color="#ff0084"/><stop offset="0.583" stop-color="#ff0076"/><stop offset="0.625" stop-color="#ff006a"/><stop offset="0.667" stop-color="#ff0060"/><stop offset="0.708" stop-color="#ff0056"/><stop offset="0.750" stop-color="#ff004e"/><stop offset="0.792" stop-color="#ff0046"/><stop offset="0.833" stop-color="#ff003f"/><stop offset="0.875" stop-color="#ff0039"/><stop offset="0.917" stop-color="#ff0033"/><stop offset="0.958" stop-color="#ff002e"/><stop offset="1.000" stop-color="#ff0029"/></linearGradient><linearGradient id="B92" gradientUnits="userSpaceOnUse" x1="145" x2="615" y1="0" y2="0"><stop offset="0.000" stop-color="#0012ff"/><stop offset="0.042" stop-color="#180aff"/><stop offset="0.083" stop-color="#3700ff"/><stop offset="0.125" stop-color="#5600ff"/><stop offset="0.167" stop-color="#7600ff"/><stop offset="0.208" stop-color="#9700ff"/><stop offset="0.250" stop-color="#b900ff"/><stop offset="0.292" stop-color="#dd00ff"/><stop offset="0.333" stop-color="#ff00fb"/><stop offset="0.375" stop-color="#ff00d9"/><stop offset="0.417" stop-color="#ff00be"/><stop offset="0.458" stop-color="#ff00a8"/><stop offset="0.500" stop-color="#ff0095"/><stop offset="0.542" stop-color="#ff0085"/><stop offset="0.583" stop-color="#ff0078"/><stop offset="0.625" stop-color="#ff006c"/><stop offset="0.667" stop-color="#ff0061"/><stop offset="0.708" stop-color="#ff0058"/><stop offset="0.750" stop-color="#ff004f"/><stop offset="0.792" stop-color="#ff0047"/><stop offset="0.833" stop-color="#ff0041"/><stop offset="0.875" stop-color="#ff003a"/><stop offset="0.917" stop-color="#ff0034"/><stop offset="0.958" stop-color="#ff002f"/><stop offset="1.000" stop-color="#ff002a"/></linearGradient><linearGradient id="B93" gradientUnits="userSpaceOnUse" x1="145" x2="615" y1="0" y2="0"><stop offset="0.000" stop-color="#000dff"/><stop offset="0.042" stop-color="#1a04ff"/><stop offset="0.083" stop-color="#3900ff"/><stop offset="0.125" stop-color="#5800ff"/><stop offset="0.167" stop-color="#7700ff"/><stop offset="0.208" stop-color="#9800ff"/><stop offset="0.250" stop-color="#ba00ff"/><stop offset="0.292" stop-color="#dd00ff"/><stop offset="0.333" stop-color="#ff00fb"/><stop offset="0.375" stop-color="#ff00da"/><stop offset="0.417" stop-color="#ff00bf"/><stop offset="0.458" stop-color="#ff00a9"/><stop offset="0.500" stop-color="#ff0096"/><stop offset="0.542" stop-color="#ff0086"/><stop offset="0.583" stop-color="#ff0079"/><stop offset="0.625" stop-color="#ff006d"/><stop offset="0.667" stop-color="#ff0062"/><stop offset="0.708" stop-color="#ff0059"/><stop offset="0.750" stop-color="#ff0050"/><stop offset="0.792" stop-color="#ff0049"/><stop offset="0.833" stop-color="#ff0042"/><stop offset="0.875" stop-color="#ff003b"/><stop offset="0.917" stop-color="#ff0036"/><stop offset="0.958" stop-color="#ff0030"/><stop offset="1.000" stop-color="#ff002b"/></linearGradient><linearGradient id="B94" gradientUnits="userSpaceOnUse" x1="145" x2="615" y1="0" y2="0"><stop offset="0.000" stop-color="#0009ff"/><stop offset="0.042" stop-color="#1d00ff"/><stop offset="0.083" stop-color="#3b00ff"/><stop offset="0.125" stop-color="#5900ff"/><stop offset="0.167" stop-color="#7800ff"/><stop offset="0.208" stop-color="#9900ff"/><stop offset="0.250" stop-color="#ba00ff"/><stop offset="0.292" stop-color="#dd00ff"/><stop offset="0.333" stop-color="#ff00fc"/><stop offset="0.375" stop-color="#ff00db"/><stop offset="0.417" stop-color="#ff00c0"/><stop offset="0.458" stop-color="#ff00aa"/><stop offset="0.500" stop-color="#ff0097"/><stop offset="0.542" stop-color="#ff0088"/><stop offset="0.583" stop-color="#ff007a"/><stop offset="0.625" stop-color="#ff006e"/><stop offset="0.667" stop-color="#ff0063"/><stop offset="0.708" stop-color="#ff005a"/><stop offset="0.750" stop-color="#ff0051"/><stop offset="0.792" stop-color="#ff004a"/><stop offset="0.833" stop-color="#ff0043"/><stop offset="0.875" stop-color="#ff003c"/><stop offset="0.917" stop-color="#ff0037"/><stop offset="0.958" stop-color="#ff0031"/><stop offset="1.000" stop-color="#ff002c"/></linearGradient><linearGradient id="B95" gradientUnits="userSpaceOnUse" x1="145" x2="615" y1="0" y2="0"><stop offset="0.000" stop-color="#0003ff"/><stop offset="0.042" stop-color="#1f00ff"/><stop offset="0.083" stop-color="#3d00ff"/><stop offset="0.125" stop-color="#5b00ff"/><stop offset="0.167" stop-color="#7900ff"/><stop offset="0.208" stop-color="#9900ff"/><stop offset="0.250" stop-color="#ba00ff"/><stop offset="0.292" stop-color="#dd00ff"/><stop offset="0.333" stop-color="#ff00fc"/><stop offset="0.375" stop-color="#ff00dc"/><stop offset="0.417" stop-color="#ff00c1"/><stop offset="0.458" stop-color="#ff00ab"/><stop offset="0.500" stop-color="#ff0099"/><stop offset="0.542" stop-color="#ff0089"/><stop offset="0.583" stop-color="#ff007b"/><stop offset="0.625" stop-color="#ff006f"/><stop offset="0.667" stop-color="#ff0064"/><stop offset="0.708" stop-color="#ff005b"/><stop offset="0.750" stop-color="#ff0052"/><stop offset="0.792" stop-color="#ff004b"/><stop offset="0.833" stop-color="#ff0044"/><stop offset="0.875" stop-color="#ff003d"/><stop offset="0.917" stop-color="#ff0038"/><stop offset="0.958" stop-color="#ff0032"/><stop offset="1.000" stop-color="#ff002d"/></linearGradient><linearGradient id="B96" gradientUnits="userSpaceOnUse" x1="145" x2="615" y1="0" y2="0"><stop offset="0.000" stop-color="#0100ff"/><stop offset="0.042" stop-color="#2100ff"/><stop offset="0.083" stop-color="#3e00ff"/><stop offset="0.125" stop-color="#5c00ff"/><stop offset="0.167" stop-color="#7a00ff"/><stop offset="0.208" stop-color="#9a00ff"/><stop offset="0.250" stop-color="#bb00ff"/><stop offset="0.292" stop-color="#dd00ff"/><stop offset="0.333" stop-color="#ff00fd"/><stop offset="0.375" stop-color="#ff00dc"/><stop offset="0.417" stop-color="#ff00c2"/><stop offset="0.458" stop-color="#ff00ac"/><stop offset="0.500" stop-color="#ff009a"/><stop offset="0.542" stop-color="#ff008a"/><stop offset="0.583" stop-color="#ff007c"/><stop offset="0.625" stop-color="#ff0070"/><stop offset="0.667" stop-color="#ff0066"/><stop offset="0.708" stop-color="#ff005c"/><stop offset="0.750" stop-color="#ff0054"/><stop offset="0.792" stop-color="#ff004c"/><stop offset="0.833" stop-color="#ff0045"/><stop offset="0.875" stop-color="#ff003f"/><stop offset="0.917" stop-color="#ff0039"/><stop offset="0.958" stop-color="#ff0033"/><stop offset="1.000" stop-color="#ff002e"/></linearGradient></defs><rect x="11.9" y="6.9" width="745.4" height="506.4" fill="#232323"/><g clip-path="url(#clLoc)"><rect x="15" y="9.9" width="648" height="4.6" fill="url(#D1)"/><rect x="15" y="13.9" width="648" height="4.6" fill="url(#D2)"/><rect x="15" y="17.9" width="648" height="4.6" fill="url(#D3)"/><rect x="15" y="21.9" width="648" height="4.6" fill="url(#D4)"/><rect x="15" y="25.9" width="648" height="4.6" fill="url(#D5)"/><rect x="15" y="29.9" width="648" height="4.6" fill="url(#D6)"/><rect x="15" y="33.9" width="648" height="4.6" fill="url(#D7)"/><rect x="15" y="37.9" width="648" height="4.6" fill="url(#D8)"/><rect x="15" y="41.9" width="648" height="4.6" fill="url(#D9)"/><rect x="15" y="45.9" width="648" height="4.6" fill="url(#D10)"/><rect x="15" y="49.9" width="648" height="4.6" fill="url(#D11)"/><rect x="15" y="53.9" width="648" height="4.6" fill="url(#D12)"/><rect x="15" y="57.9" width="648" height="4.6" fill="url(#D13)"/><rect x="15" y="61.9" width="648" height="4.6" fill="url(#D14)"/><rect x="15" y="65.9" width="648" height="4.6" fill="url(#D15)"/><rect x="15" y="69.9" width="648" height="4.6" fill="url(#D16)"/><rect x="15" y="73.9" width="648" height="4.6" fill="url(#D17)"/><rect x="15" y="77.9" width="648" height="4.6" fill="url(#D18)"/><rect x="15" y="81.9" width="648" height="4.6" fill="url(#D19)"/><rect x="15" y="85.9" width="648" height="4.6" fill="url(#D20)"/><rect x="15" y="89.9" width="648" height="4.6" fill="url(#D21)"/><rect x="15" y="93.9" width="648" height="4.6" fill="url(#D22)"/><rect x="15" y="97.9" width="648" height="4.6" fill="url(#D23)"/><rect x="15" y="101.9" width="648" height="4.6" fill="url(#D24)"/><rect x="15" y="105.9" width="648" height="4.6" fill="url(#D25)"/><rect x="15" y="109.9" width="648" height="4.6" fill="url(#D26)"/><rect x="15" y="113.9" width="648" height="4.6" fill="url(#D27)"/><rect x="15" y="117.9" width="648" height="4.6" fill="url(#D28)"/><rect x="15" y="121.9" width="648" height="4.6" fill="url(#D29)"/><rect x="15" y="125.9" width="648" height="4.6" fill="url(#D30)"/><rect x="15" y="129.9" width="648" height="4.6" fill="url(#D31)"/><rect x="15" y="133.9" width="648" height="4.6" fill="url(#D32)"/><rect x="15" y="137.9" width="648" height="4.6" fill="url(#D33)"/><rect x="15" y="141.9" width="648" height="4.6" fill="url(#D34)"/><rect x="15" y="145.9" width="648" height="4.6" fill="url(#D35)"/><rect x="15" y="149.9" width="648" height="4.6" fill="url(#D36)"/><rect x="15" y="153.9" width="648" height="4.6" fill="url(#D37)"/><rect x="15" y="157.9" width="648" height="4.6" fill="url(#D38)"/><rect x="15" y="161.9" width="648" height="4.6" fill="url(#D39)"/><rect x="15" y="165.9" width="648" height="4.6" fill="url(#D40)"/><rect x="15" y="169.9" width="648" height="4.6" fill="url(#D41)"/><rect x="15" y="173.9" width="648" height="4.6" fill="url(#D42)"/><rect x="15" y="177.9" width="648" height="4.6" fill="url(#D43)"/><rect x="15" y="181.9" width="648" height="4.6" fill="url(#D44)"/><rect x="15" y="185.9" width="648" height="4.6" fill="url(#D45)"/><rect x="15" y="189.9" width="648" height="4.6" fill="url(#D46)"/><rect x="15" y="193.9" width="648" height="4.6" fill="url(#D47)"/><rect x="15" y="197.9" width="648" height="4.6" fill="url(#D48)"/><rect x="15" y="201.9" width="648" height="4.6" fill="url(#D49)"/><rect x="15" y="205.9" width="648" height="4.6" fill="url(#D50)"/><rect x="15" y="209.9" width="648" height="4.6" fill="url(#D51)"/><rect x="15" y="213.9" width="648" height="4.6" fill="url(#D52)"/><rect x="15" y="217.9" width="648" height="4.6" fill="url(#D53)"/><rect x="15" y="221.9" width="648" height="4.6" fill="url(#D54)"/><rect x="15" y="225.9" width="648" height="4.6" fill="url(#D55)"/><rect x="15" y="229.9" width="648" height="4.6" fill="url(#D56)"/><rect x="15" y="233.9" width="648" height="4.6" fill="url(#D57)"/><rect x="15" y="237.9" width="648" height="4.6" fill="url(#D58)"/><rect x="15" y="241.9" width="648" height="4.6" fill="url(#D59)"/><rect x="15" y="245.9" width="648" height="4.6" fill="url(#D60)"/><rect x="15" y="249.9" width="648" height="4.6" fill="url(#D61)"/><rect x="15" y="253.9" width="648" height="4.6" fill="url(#D62)"/><rect x="15" y="257.9" width="648" height="4.6" fill="url(#D63)"/><rect x="15" y="261.9" width="648" height="4.6" fill="url(#D64)"/><rect x="15" y="265.9" width="648" height="4.6" fill="url(#D65)"/><rect x="15" y="269.9" width="648" height="4.6" fill="url(#D66)"/><rect x="15" y="273.9" width="648" height="4.6" fill="url(#D67)"/><rect x="15" y="277.9" width="648" height="4.6" fill="url(#D68)"/><rect x="15" y="281.9" width="648" height="4.6" fill="url(#D69)"/><rect x="15" y="285.9" width="648" height="4.6" fill="url(#D70)"/><rect x="15" y="289.9" width="648" height="4.6" fill="url(#D71)"/><rect x="15" y="293.9" width="648" height="4.6" fill="url(#D72)"/><rect x="15" y="297.9" width="648" height="4.6" fill="url(#D73)"/><rect x="15" y="301.9" width="648" height="4.6" fill="url(#D74)"/><rect x="15" y="305.9" width="648" height="4.6" fill="url(#D75)"/><rect x="15" y="309.9" width="648" height="4.6" fill="url(#D76)"/><rect x="15" y="313.9" width="648" height="4.6" fill="url(#D77)"/><rect x="15" y="317.9" width="648" height="4.6" fill="url(#D78)"/><rect x="15" y="321.9" width="648" height="4.6" fill="url(#D79)"/><rect x="15" y="325.9" width="648" height="4.6" fill="url(#D80)"/><rect x="15" y="329.9" width="648" height="4.6" fill="url(#D81)"/><rect x="15" y="333.9" width="648" height="4.6" fill="url(#D82)"/><rect x="15" y="337.9" width="648" height="4.6" fill="url(#D83)"/><rect x="15" y="341.9" width="648" height="4.6" fill="url(#D84)"/><rect x="15" y="345.9" width="648" height="4.6" fill="url(#D85)"/><rect x="15" y="349.9" width="648" height="4.6" fill="url(#D86)"/><rect x="15" y="353.9" width="648" height="4.6" fill="url(#D87)"/><rect x="15" y="357.9" width="648" height="4.6" fill="url(#D88)"/><rect x="15" y="361.9" width="648" height="4.6" fill="url(#D89)"/><rect x="15" y="365.9" width="648" height="4.6" fill="url(#D90)"/><rect x="15" y="369.9" width="648" height="4.6" fill="url(#D91)"/><rect x="15" y="373.9" width="648" height="4.6" fill="url(#D92)"/><rect x="15" y="377.9" width="648" height="4.6" fill="url(#D93)"/><rect x="15" y="381.9" width="648" height="4.6" fill="url(#D94)"/><rect x="15" y="385.9" width="648" height="4.6" fill="url(#D95)"/><rect x="15" y="389.9" width="648" height="4.6" fill="url(#D96)"/><rect x="15" y="393.9" width="648" height="4.6" fill="url(#D97)"/><rect x="15" y="397.9" width="648" height="4.6" fill="url(#D98)"/><rect x="15" y="401.9" width="648" height="4.6" fill="url(#D99)"/><rect x="15" y="405.9" width="648" height="4.6" fill="url(#D100)"/><rect x="15" y="409.9" width="648" height="4.6" fill="url(#D101)"/><rect x="15" y="413.9" width="648" height="4.6" fill="url(#D102)"/><rect x="15" y="417.9" width="648" height="4.6" fill="url(#D103)"/><rect x="15" y="421.9" width="648" height="4.6" fill="url(#D104)"/><rect x="15" y="425.9" width="648" height="4.6" fill="url(#D105)"/><rect x="15" y="429.9" width="648" height="4.6" fill="url(#D106)"/><rect x="15" y="433.9" width="648" height="4.6" fill="url(#D107)"/><rect x="15" y="437.9" width="648" height="4.6" fill="url(#D108)"/><rect x="15" y="441.9" width="648" height="4.6" fill="url(#D109)"/><rect x="15" y="445.9" width="648" height="4.6" fill="url(#D110)"/><rect x="15" y="449.9" width="648" height="4.6" fill="url(#D111)"/><rect x="15" y="453.9" width="648" height="4.6" fill="url(#D112)"/><rect x="15" y="457.9" width="648" height="4.6" fill="url(#D113)"/><rect x="15" y="461.9" width="648" height="4.6" fill="url(#D114)"/><rect x="15" y="465.9" width="648" height="4.6" fill="url(#D115)"/><rect x="15" y="469.9" width="648" height="4.6" fill="url(#D116)"/><rect x="15" y="473.9" width="648" height="4.6" fill="url(#D117)"/><rect x="15" y="477.9" width="648" height="4.6" fill="url(#D118)"/><rect x="15" y="481.9" width="648" height="4.6" fill="url(#D119)"/><rect x="15" y="485.9" width="648" height="4.6" fill="url(#D120)"/><rect x="15" y="489.9" width="648" height="4.6" fill="url(#D121)"/><rect x="15" y="493.9" width="648" height="4.6" fill="url(#D122)"/><rect x="15" y="497.9" width="648" height="4.6" fill="url(#D123)"/><rect x="15" y="501.9" width="648" height="4.6" fill="url(#D124)"/><rect x="15" y="505.9" width="648" height="4.6" fill="url(#D125)"/><rect x="15" y="509.9" width="648" height="4.6" fill="url(#D126)"/></g><g clip-path="url(#clTri)"><rect x="145" y="96.7" width="470" height="4.6" fill="url(#B1)"/><rect x="145" y="100.7" width="470" height="4.6" fill="url(#B2)"/><rect x="145" y="104.7" width="470" height="4.6" fill="url(#B3)"/><rect x="145" y="108.7" width="470" height="4.6" fill="url(#B4)"/><rect x="145" y="112.7" width="470" height="4.6" fill="url(#B5)"/><rect x="145" y="116.7" width="470" height="4.6" fill="url(#B6)"/><rect x="145" y="120.7" width="470" height="4.6" fill="url(#B7)"/><rect x="145" y="124.7" width="470" height="4.6" fill="url(#B8)"/><rect x="145" y="128.7" width="470" height="4.6" fill="url(#B9)"/><rect x="145" y="132.7" width="470" height="4.6" fill="url(#B10)"/><rect x="145" y="136.7" width="470" height="4.6" fill="url(#B11)"/><rect x="145" y="140.7" width="470" height="4.6" fill="url(#B12)"/><rect x="145" y="144.7" width="470" height="4.6" fill="url(#B13)"/><rect x="145" y="148.7" width="470" height="4.6" fill="url(#B14)"/><rect x="145" y="152.7" width="470" height="4.6" fill="url(#B15)"/><rect x="145" y="156.7" width="470" height="4.6" fill="url(#B16)"/><rect x="145" y="160.7" width="470" height="4.6" fill="url(#B17)"/><rect x="145" y="164.7" width="470" height="4.6" fill="url(#B18)"/><rect x="145" y="168.7" width="470" height="4.6" fill="url(#B19)"/><rect x="145" y="172.7" width="470" height="4.6" fill="url(#B20)"/><rect x="145" y="176.7" width="470" height="4.6" fill="url(#B21)"/><rect x="145" y="180.7" width="470" height="4.6" fill="url(#B22)"/><rect x="145" y="184.7" width="470" height="4.6" fill="url(#B23)"/><rect x="145" y="188.7" width="470" height="4.6" fill="url(#B24)"/><rect x="145" y="192.7" width="470" height="4.6" fill="url(#B25)"/><rect x="145" y="196.7" width="470" height="4.6" fill="url(#B26)"/><rect x="145" y="200.7" width="470" height="4.6" fill="url(#B27)"/><rect x="145" y="204.7" width="470" height="4.6" fill="url(#B28)"/><rect x="145" y="208.7" width="470" height="4.6" fill="url(#B29)"/><rect x="145" y="212.7" width="470" height="4.6" fill="url(#B30)"/><rect x="145" y="216.7" width="470" height="4.6" fill="url(#B31)"/><rect x="145" y="220.7" width="470" height="4.6" fill="url(#B32)"/><rect x="145" y="224.7" width="470" height="4.6" fill="url(#B33)"/><rect x="145" y="228.7" width="470" height="4.6" fill="url(#B34)"/><rect x="145" y="232.7" width="470" height="4.6" fill="url(#B35)"/><rect x="145" y="236.7" width="470" height="4.6" fill="url(#B36)"/><rect x="145" y="240.7" width="470" height="4.6" fill="url(#B37)"/><rect x="145" y="244.7" width="470" height="4.6" fill="url(#B38)"/><rect x="145" y="248.7" width="470" height="4.6" fill="url(#B39)"/><rect x="145" y="252.7" width="470" height="4.6" fill="url(#B40)"/><rect x="145" y="256.7" width="470" height="4.6" fill="url(#B41)"/><rect x="145" y="260.7" width="470" height="4.6" fill="url(#B42)"/><rect x="145" y="264.7" width="470" height="4.6" fill="url(#B43)"/><rect x="145" y="268.7" width="470" height="4.6" fill="url(#B44)"/><rect x="145" y="272.7" width="470" height="4.6" fill="url(#B45)"/><rect x="145" y="276.7" width="470" height="4.6" fill="url(#B46)"/><rect x="145" y="280.7" width="470" height="4.6" fill="url(#B47)"/><rect x="145" y="284.7" width="470" height="4.6" fill="url(#B48)"/><rect x="145" y="288.7" width="470" height="4.6" fill="url(#B49)"/><rect x="145" y="292.7" width="470" height="4.6" fill="url(#B50)"/><rect x="145" y="296.7" width="470" height="4.6" fill="url(#B51)"/><rect x="145" y="300.7" width="470" height="4.6" fill="url(#B52)"/><rect x="145" y="304.7" width="470" height="4.6" fill="url(#B53)"/><rect x="145" y="308.7" width="470" height="4.6" fill="url(#B54)"/><rect x="145" y="312.7" width="470" height="4.6" fill="url(#B55)"/><rect x="145" y="316.7" width="470" height="4.6" fill="url(#B56)"/><rect x="145" y="320.7" width="470" height="4.6" fill="url(#B57)"/><rect x="145" y="324.7" width="470" height="4.6" fill="url(#B58)"/><rect x="145" y="328.7" width="470" height="4.6" fill="url(#B59)"/><rect x="145" y="332.7" width="470" height="4.6" fill="url(#B60)"/><rect x="145" y="336.7" width="470" height="4.6" fill="url(#B61)"/><rect x="145" y="340.7" width="470" height="4.6" fill="url(#B62)"/><rect x="145" y="344.7" width="470" height="4.6" fill="url(#B63)"/><rect x="145" y="348.7" width="470" height="4.6" fill="url(#B64)"/><rect x="145" y="352.7" width="470" height="4.6" fill="url(#B65)"/><rect x="145" y="356.7" width="470" height="4.6" fill="url(#B66)"/><rect x="145" y="360.7" width="470" height="4.6" fill="url(#B67)"/><rect x="145" y="364.7" width="470" height="4.6" fill="url(#B68)"/><rect x="145" y="368.7" width="470" height="4.6" fill="url(#B69)"/><rect x="145" y="372.7" width="470" height="4.6" fill="url(#B70)"/><rect x="145" y="376.7" width="470" height="4.6" fill="url(#B71)"/><rect x="145" y="380.7" width="470" height="4.6" fill="url(#B72)"/><rect x="145" y="384.7" width="470" height="4.6" fill="url(#B73)"/><rect x="145" y="388.7" width="470" height="4.6" fill="url(#B74)"/><rect x="145" y="392.7" width="470" height="4.6" fill="url(#B75)"/><rect x="145" y="396.7" width="470" height="4.6" fill="url(#B76)"/><rect x="145" y="400.7" width="470" height="4.6" fill="url(#B77)"/><rect x="145" y="404.7" width="470" height="4.6" fill="url(#B78)"/><rect x="145" y="408.7" width="470" height="4.6" fill="url(#B79)"/><rect x="145" y="412.7" width="470" height="4.6" fill="url(#B80)"/><rect x="145" y="416.7" width="470" height="4.6" fill="url(#B81)"/><rect x="145" y="420.7" width="470" height="4.6" fill="url(#B82)"/><rect x="145" y="424.7" width="470" height="4.6" fill="url(#B83)"/><rect x="145" y="428.7" width="470" height="4.6" fill="url(#B84)"/><rect x="145" y="432.7" width="470" height="4.6" fill="url(#B85)"/><rect x="145" y="436.7" width="470" height="4.6" fill="url(#B86)"/><rect x="145" y="440.7" width="470" height="4.6" fill="url(#B87)"/><rect x="145" y="444.7" width="470" height="4.6" fill="url(#B88)"/><rect x="145" y="448.7" width="470" height="4.6" fill="url(#B89)"/><rect x="145" y="452.7" width="470" height="4.6" fill="url(#B90)"/><rect x="145" y="456.7" width="470" height="4.6" fill="url(#B91)"/><rect x="145" y="460.7" width="470" height="4.6" fill="url(#B92)"/><rect x="145" y="464.7" width="470" height="4.6" fill="url(#B93)"/><rect x="145" y="468.7" width="470" height="4.6" fill="url(#B94)"/><rect x="145" y="472.7" width="470" height="4.6" fill="url(#B95)"/><rect x="145" y="476.7" width="470" height="4.6" fill="url(#B96)"/></g><path d="M11.9 6.9H757.3V513.3H11.9Z" fill="none" stroke="#9a9a9a" stroke-width="1.6"/><path d="M11.9 513.3v6" stroke="#ccc" stroke-width="1.4"/><path d="M5.9 513.3h6" stroke="#ccc" stroke-width="1.4"/><path d="M100.5 513.3v6" stroke="#ccc" stroke-width="1.4"/><path d="M5.9 452.9h6" stroke="#ccc" stroke-width="1.4"/><path d="M189.2 513.3v6" stroke="#ccc" stroke-width="1.4"/><path d="M5.9 392.5h6" stroke="#ccc" stroke-width="1.4"/><path d="M277.8 513.3v6" stroke="#ccc" stroke-width="1.4"/><path d="M5.9 332.2h6" stroke="#ccc" stroke-width="1.4"/><path d="M366.4 513.3v6" stroke="#ccc" stroke-width="1.4"/><path d="M5.9 271.8h6" stroke="#ccc" stroke-width="1.4"/><path d="M455.1 513.3v6" stroke="#ccc" stroke-width="1.4"/><path d="M5.9 211.4h6" stroke="#ccc" stroke-width="1.4"/><path d="M543.7 513.3v6" stroke="#ccc" stroke-width="1.4"/><path d="M5.9 151.0h6" stroke="#ccc" stroke-width="1.4"/><path d="M632.3 513.3v6" stroke="#ccc" stroke-width="1.4"/><path d="M5.9 90.6h6" stroke="#ccc" stroke-width="1.4"/><path d="M720.9 513.3v6" stroke="#ccc" stroke-width="1.4"/><path d="M5.9 30.3h6" stroke="#ccc" stroke-width="1.4"/><rect x="238.8" y="87.6" width="16" height="15" fill="none" stroke="#fff" stroke-width="1.6"/><rect x="246.1" y="136.1" width="16" height="15" fill="none" stroke="#fff" stroke-width="1.6"/><rect x="256.2" y="176.6" width="16" height="15" fill="none" stroke="#fff" stroke-width="1.6"/><rect x="263.5" y="218.3" width="16" height="15" fill="none" stroke="#fff" stroke-width="1.6"/><rect x="271.4" y="261.7" width="16" height="15" fill="none" stroke="#fff" stroke-width="1.6"/><rect x="180.2" y="304.0" width="16" height="15" fill="none" stroke="#fff" stroke-width="1.6"/><rect x="199.9" y="305.1" width="16" height="15" fill="none" stroke="#fff" stroke-width="1.6"/><rect x="220.2" y="305.1" width="16" height="15" fill="none" stroke="#fff" stroke-width="1.6"/><rect x="239.9" y="305.1" width="16" height="15" fill="none" stroke="#fff" stroke-width="1.6"/><rect x="259.6" y="305.1" width="16" height="15" fill="none" stroke="#fff" stroke-width="1.6"/><rect x="345.2" y="306.8" width="16" height="15" fill="none" stroke="#fff" stroke-width="1.6"/><rect x="406.1" y="308.5" width="16" height="15" fill="none" stroke="#fff" stroke-width="1.6"/><rect x="473.1" y="309.6" width="16" height="15" fill="none" stroke="#fff" stroke-width="1.6"/><rect x="532.8" y="310.7" width="16" height="15" fill="none" stroke="#fff" stroke-width="1.6"/><rect x="606.6" y="311.3" width="16" height="15" fill="none" stroke="#fff" stroke-width="1.6"/><rect x="251.7" y="337.8" width="16" height="15" fill="none" stroke="#fff" stroke-width="1.6"/><rect x="223.5" y="371.6" width="16" height="15" fill="none" stroke="#fff" stroke-width="1.6"/><rect x="194.8" y="402.0" width="16" height="15" fill="none" stroke="#fff" stroke-width="1.6"/><rect x="166.6" y="434.1" width="16" height="15" fill="none" stroke="#fff" stroke-width="1.6"/><rect x="135.1" y="467.9" width="16" height="15" fill="none" stroke="#fff" stroke-width="1.6"/><rect x="284.4" y="328.2" width="16" height="15" fill="none" stroke="#fff" stroke-width="1.6"/><rect x="288.9" y="349.0" width="16" height="15" fill="none" stroke="#fff" stroke-width="1.6"/><rect x="292.8" y="369.9" width="16" height="15" fill="none" stroke="#fff" stroke-width="1.6"/><rect x="296.2" y="390.7" width="16" height="15" fill="none" stroke="#fff" stroke-width="1.6"/><rect x="301.3" y="413.3" width="16" height="15" fill="none" stroke="#fff" stroke-width="1.6"/><rect x="304.0" y="280.8" width="16" height="15" fill="none" stroke="#fff" stroke-width="1.6"/><rect x="324.7" y="257.4" width="16" height="15" fill="none" stroke="#fff" stroke-width="1.6"/><rect x="346.5" y="233.0" width="16" height="15" fill="none" stroke="#fff" stroke-width="1.6"/><rect x="368.5" y="208.1" width="16" height="15" fill="none" stroke="#fff" stroke-width="1.6"/><rect x="391.9" y="181.7" width="16" height="15" fill="none" stroke="#fff" stroke-width="1.6"/><rect x="281.0" y="307.1" width="16" height="15" fill="none" stroke="#000" stroke-width="1.6"/><ellipse cx="247.9" cy="95.1" rx="5" ry="4.6" fill="#109c10" stroke="#111" stroke-width="1.1"/><ellipse cx="261.4" cy="123.2" rx="5" ry="4.6" fill="#58a858" stroke="#111" stroke-width="1.1"/><ellipse cx="268.2" cy="166.1" rx="5" ry="4.6" fill="#70b070" stroke="#111" stroke-width="1.1"/><ellipse cx="276.6" cy="213.4" rx="5" ry="4.6" fill="#88b888" stroke="#111" stroke-width="1.1"/><ellipse cx="287.3" cy="266.9" rx="5" ry="4.6" fill="#a0bca0" stroke="#111" stroke-width="1.1"/><ellipse cx="185.4" cy="310.8" rx="5" ry="4.6" fill="#10b8b8" stroke="#111" stroke-width="1.1"/><ellipse cx="206.2" cy="310.8" rx="5" ry="4.6" fill="#50b0b0" stroke="#111" stroke-width="1.1"/><ellipse cx="229.3" cy="310.8" rx="5" ry="4.6" fill="#78b0b0" stroke="#111" stroke-width="1.1"/><ellipse cx="250.7" cy="310.8" rx="5" ry="4.6" fill="#98b8b8" stroke="#111" stroke-width="1.1"/><ellipse cx="273.2" cy="310.8" rx="5" ry="4.6" fill="#b0b8b8" stroke="#111" stroke-width="1.1"/><ellipse cx="350.4" cy="312.0" rx="5" ry="4.6" fill="#b08888" stroke="#111" stroke-width="1.1"/><ellipse cx="412.4" cy="313.7" rx="5" ry="4.6" fill="#b87878" stroke="#111" stroke-width="1.1"/><ellipse cx="487.9" cy="314.8" rx="5" ry="4.6" fill="#b86060" stroke="#111" stroke-width="1.1"/><ellipse cx="555.5" cy="317.6" rx="5" ry="4.6" fill="#bc4848" stroke="#111" stroke-width="1.1"/><ellipse cx="611.3" cy="320.4" rx="5" ry="4.6" fill="#b81010" stroke="#111" stroke-width="1.1"/><ellipse cx="262.5" cy="345.8" rx="5" ry="4.6" fill="#9c98c0" stroke="#111" stroke-width="1.1"/><ellipse cx="226.5" cy="384.1" rx="5" ry="4.6" fill="#8888c8" stroke="#111" stroke-width="1.1"/><ellipse cx="193.2" cy="421.3" rx="5" ry="4.6" fill="#6a6ac0" stroke="#111" stroke-width="1.1"/><ellipse cx="162.3" cy="455.1" rx="5" ry="4.6" fill="#5050c0" stroke="#111" stroke-width="1.1"/><ellipse cx="138.0" cy="482.7" rx="5" ry="4.6" fill="#1010c8" stroke="#111" stroke-width="1.1"/><ellipse cx="295.2" cy="331.7" rx="5" ry="4.6" fill="#b8a0b8" stroke="#111" stroke-width="1.1"/><ellipse cx="297.5" cy="354.2" rx="5" ry="4.6" fill="#c090c0" stroke="#111" stroke-width="1.1"/><ellipse cx="300.3" cy="381.3" rx="5" ry="4.6" fill="#c070c0" stroke="#111" stroke-width="1.1"/><ellipse cx="301.4" cy="404.9" rx="5" ry="4.6" fill="#c050c0" stroke="#111" stroke-width="1.1"/><ellipse cx="303.1" cy="426.9" rx="5" ry="4.6" fill="#b810b8" stroke="#111" stroke-width="1.1"/><ellipse cx="317.9" cy="288.7" rx="5" ry="4.6" fill="#b0b098" stroke="#111" stroke-width="1.1"/><ellipse cx="339.9" cy="263.9" rx="5" ry="4.6" fill="#b8b880" stroke="#111" stroke-width="1.1"/><ellipse cx="367.0" cy="234.6" rx="5" ry="4.6" fill="#b8b868" stroke="#111" stroke-width="1.1"/><ellipse cx="392.7" cy="207.1" rx="5" ry="4.6" fill="#b8b848" stroke="#111" stroke-width="1.1"/><ellipse cx="410.5" cy="194.7" rx="5" ry="4.6" fill="#c0b820" stroke="#111" stroke-width="1.1"/><ellipse cx="289.6" cy="309.2" rx="5" ry="4.6" fill="#fff" stroke="#111" stroke-width="1.1"/><rect x="495.2" y="10.3" width="258.0" height="196.7" fill="#2a2a2a"/><defs><linearGradient id="insB" gradientUnits="userSpaceOnUse" x1="498.2" y1="13.3" x2="750.2" y2="204.0"><stop offset="0" stop-color="#b0ff00"/><stop offset=".5" stop-color="#ffff00"/><stop offset="1" stop-color="#ffb000"/></linearGradient><linearGradient id="insD" gradientUnits="userSpaceOnUse" x1="498.2" y1="13.3" x2="750.2" y2="204.0"><stop offset="0" stop-color="#6a9600"/><stop offset=".5" stop-color="#949400"/><stop offset="1" stop-color="#9a7000"/></linearGradient><clipPath id="insC"><rect x="498.2" y="13.3" width="252.0" height="190.7"/></clipPath></defs><g clip-path="url(#insC)"><rect x="498.2" y="13.3" width="252.0" height="190.7" fill="#232323"/><path d="M498.2 13.3L625.2 13.3L750.2 106.8L750.2 204.0L498.2 204.0Z" fill="url(#insD)"/><path d="M498.0 24.6L750.0 192.2L750.2 204.0L498.2 204.0Z" fill="url(#insB)"/><rect x="614.5" y="100.4" width="16" height="15" fill="none" stroke="#fff" stroke-width="1.6"/><ellipse cx="681.4" cy="138.8" rx="5" ry="4.6" fill="#c8c020" stroke="#111" stroke-width="1.1"/></g><rect x="498.2" y="13.3" width="252.0" height="190.7" fill="none" stroke="#999" stroke-width="2"/></svg>
<div class="t" style="left:662.3px;width:1000px;text-align:center;top:673.6px;font-size:15px;line-height:15px;color:#ddd;letter-spacing:0.7px;font-weight:normal;">0</div>
<div class="t" style="left:155.7px;width:1000px;text-align:right;top:657.6px;font-size:15px;line-height:15px;color:#ddd;letter-spacing:0.8px;font-weight:normal;">0</div>
<div class="t" style="left:750.9px;width:1000px;text-align:center;top:673.6px;font-size:15px;line-height:15px;color:#ddd;letter-spacing:0.7px;font-weight:normal;">0,1</div>
<div class="t" style="left:155.7px;width:1000px;text-align:right;top:597.2px;font-size:15px;line-height:15px;color:#ddd;letter-spacing:0.8px;font-weight:normal;">0,1</div>
<div class="t" style="left:839.5px;width:1000px;text-align:center;top:673.6px;font-size:15px;line-height:15px;color:#ddd;letter-spacing:0.7px;font-weight:normal;">0,2</div>
<div class="t" style="left:155.7px;width:1000px;text-align:right;top:536.8px;font-size:15px;line-height:15px;color:#ddd;letter-spacing:0.8px;font-weight:normal;">0,2</div>
<div class="t" style="left:928.1px;width:1000px;text-align:center;top:673.6px;font-size:15px;line-height:15px;color:#ddd;letter-spacing:0.7px;font-weight:normal;">0,3</div>
<div class="t" style="left:155.7px;width:1000px;text-align:right;top:476.5px;font-size:15px;line-height:15px;color:#ddd;letter-spacing:0.8px;font-weight:normal;">0,3</div>
<div class="t" style="left:1016.8px;width:1000px;text-align:center;top:673.6px;font-size:15px;line-height:15px;color:#ddd;letter-spacing:0.7px;font-weight:normal;">0,4</div>
<div class="t" style="left:155.7px;width:1000px;text-align:right;top:416.1px;font-size:15px;line-height:15px;color:#ddd;letter-spacing:0.8px;font-weight:normal;">0,4</div>
<div class="t" style="left:1105.4px;width:1000px;text-align:center;top:673.6px;font-size:15px;line-height:15px;color:#ddd;letter-spacing:0.7px;font-weight:normal;">0,5</div>
<div class="t" style="left:155.7px;width:1000px;text-align:right;top:355.7px;font-size:15px;line-height:15px;color:#ddd;letter-spacing:0.8px;font-weight:normal;">0,5</div>
<div class="t" style="left:1194.0px;width:1000px;text-align:center;top:673.6px;font-size:15px;line-height:15px;color:#ddd;letter-spacing:0.7px;font-weight:normal;">0,6</div>
<div class="t" style="left:155.7px;width:1000px;text-align:right;top:295.3px;font-size:15px;line-height:15px;color:#ddd;letter-spacing:0.8px;font-weight:normal;">0,6</div>
<div class="t" style="left:1282.7px;width:1000px;text-align:center;top:673.6px;font-size:15px;line-height:15px;color:#ddd;letter-spacing:0.7px;font-weight:normal;">0,7</div>
<div class="t" style="left:155.7px;width:1000px;text-align:right;top:234.9px;font-size:15px;line-height:15px;color:#ddd;letter-spacing:0.8px;font-weight:normal;">0,7</div>
<div class="t" style="left:1371.3px;width:1000px;text-align:center;top:673.6px;font-size:15px;line-height:15px;color:#ddd;letter-spacing:0.7px;font-weight:normal;">0,8</div>
<div class="t" style="left:155.7px;width:1000px;text-align:right;top:174.6px;font-size:15px;line-height:15px;color:#ddd;letter-spacing:0.8px;font-weight:normal;">0,8</div>
<div class="t" style="left:18.0px;top:735.7px;font-size:29.5px;line-height:29.5px;color:#eee;letter-spacing:2.5px;font-weight:normal;">Current Reading</div>
<div class="t" style="left:17.0px;top:782.6px;font-size:26.5px;line-height:26.5px;color:#eee;letter-spacing:1.25px;font-weight:normal;">x: 0,4497</div>
<div class="t" style="left:17.0px;top:824.6px;font-size:26.5px;line-height:26.5px;color:#eee;letter-spacing:1.25px;font-weight:normal;">y: 0,5277</div>
<div class="t" style="left:17.0px;top:867.0px;font-size:26.5px;line-height:26.5px;color:#eee;letter-spacing:1.25px;font-weight:normal;">fL: 62</div>
<div class="t" style="left:17.0px;top:908.2px;font-size:26.5px;line-height:26.5px;color:#eee;letter-spacing:1.25px;font-weight:normal;">cd/m²: 212,43</div>
<svg width="340" height="230" style="left:370px;top:720px"><defs><linearGradient id="rbR" x1="0" y1="0" x2="0" y2="1"><stop offset="0" stop-color="#ff5050"/><stop offset=".12" stop-color="#ff0000"/><stop offset=".55" stop-color="#f00000"/><stop offset="1" stop-color="#900000"/></linearGradient><linearGradient id="rbG" x1="0" y1="0" x2="0" y2="1"><stop offset="0" stop-color="#20a020"/><stop offset=".3" stop-color="#008000"/><stop offset="1" stop-color="#005000"/></linearGradient><linearGradient id="rbB" x1="0" y1="0" x2="0" y2="1"><stop offset="0" stop-color="#4040ff"/><stop offset=".2" stop-color="#0000ff"/><stop offset=".6" stop-color="#0000e8"/><stop offset="1" stop-color="#0000a0"/></linearGradient></defs><rect x="36.8" y="20.4" width="291.4" height="185.8" fill="#232323"/><path d="M30.8 206.2H328.2" stroke="#9a9a9a" stroke-width="1.5"/><path d="M30.8 159.8H328.2" stroke="#9a9a9a" stroke-width="1.5"/><path d="M30.8 113.3H328.2" stroke="#9a9a9a" stroke-width="1.5"/><path d="M30.8 66.8H328.2" stroke="#9a9a9a" stroke-width="1.5"/><path d="M30.8 20.4H328.2" stroke="#9a9a9a" stroke-width="1.5"/><path d="M36.8 20.4H328.2V206.2H36.8Z" fill="none" stroke="#9a9a9a" stroke-width="1.6"/><path d="M36.8 206.2v6M328.2 206.2v6" stroke="#bbb" stroke-width="1.5"/><rect x="66.8" y="47.8" width="76.9" height="65.5" fill="url(#rbR)" stroke="#000" stroke-width="1.3"/><rect x="143.7" y="95.6" width="78.0" height="17.7" fill="url(#rbG)" stroke="#000" stroke-width="1.3"/><rect x="223.2" y="113.3" width="77.2" height="29.7" fill="url(#rbB)" stroke="#000" stroke-width="1.3"/></svg>
<div class="t" style="left:37.5px;width:1000px;text-align:center;top:721.1px;font-size:15px;line-height:15px;color:#ddd;letter-spacing:0.5px;font-weight:normal;">RGB Balance</div>
<div class="t" style="left:-598.0px;width:1000px;text-align:right;top:918.9px;font-size:15.5px;line-height:15.5px;color:#ddd;letter-spacing:1.0px;font-weight:normal;">-20</div>
<div class="t" style="left:-598.0px;width:1000px;text-align:right;top:872.4px;font-size:15.5px;line-height:15.5px;color:#ddd;letter-spacing:1.0px;font-weight:normal;">-10</div>
<div class="t" style="left:-598.0px;width:1000px;text-align:right;top:826.0px;font-size:15.5px;line-height:15.5px;color:#ddd;letter-spacing:1.0px;font-weight:normal;">0</div>
<div class="t" style="left:-598.0px;width:1000px;text-align:right;top:779.5px;font-size:15.5px;line-height:15.5px;color:#ddd;letter-spacing:1.0px;font-weight:normal;">10</div>
<div class="t" style="left:-598.0px;width:1000px;text-align:right;top:733.1px;font-size:15.5px;line-height:15.5px;color:#ddd;letter-spacing:1.0px;font-weight:normal;">20</div>
<div class="t" style="left:53.1px;width:1000px;text-align:center;top:929.8px;font-size:15px;line-height:15px;color:#ddd;letter-spacing:0.2px;font-weight:normal;">100%</div>
<div style="position:absolute;left:724px;top:716.4px;width:828.4000000000001px;height:31px;background:linear-gradient(#2c2c2c 0,#2c2c2c 50%,#141414 50%,#101010 100%);"></div>
<div style="position:absolute;left:724px;top:716.4px;width:22px;height:31px;background:#000;"></div>
<div class="t" style="left:937.0px;top:722.8px;font-size:18px;line-height:18px;color:#eee;letter-spacing:3.0px;font-weight:normal;-webkit-text-stroke:0.5px #eee;">20%</div>
<div class="t" style="left:1062.0px;top:722.8px;font-size:18px;line-height:18px;color:#eee;letter-spacing:3.0px;font-weight:normal;-webkit-text-stroke:0.5px #eee;">40%</div>
<div class="t" style="left:1186.7px;top:722.8px;font-size:18px;line-height:18px;color:#eee;letter-spacing:3.0px;font-weight:normal;-webkit-text-stroke:0.5px #eee;">60%</div>
<div class="t" style="left:1310.7px;top:722.8px;font-size:18px;line-height:18px;color:#eee;letter-spacing:3.0px;font-weight:normal;-webkit-text-stroke:0.5px #eee;">80%</div>
<div class="t" style="left:1436.0px;top:722.8px;font-size:18px;line-height:18px;color:#eee;letter-spacing:3.0px;font-weight:normal;-webkit-text-stroke:0.5px #eee;">100%</div>
<div style="position:absolute;left:724px;top:747.4px;width:828.4000000000001px;height:29.3px;background:#444;"></div>
<div style="position:absolute;left:724px;top:747.4px;width:21.5px;height:29.3px;background:#2c2c2c;"></div>
<div class="t" style="left:753.4px;top:751.6px;font-size:21px;line-height:21px;color:#f4f4f4;letter-spacing:1.45px;font-weight:normal;-webkit-text-stroke:0.3px #f4f4f4;">x: CIE31</div>
<div class="t" style="left:937.0px;top:751.6px;font-size:21px;line-height:21px;color:#f4f4f4;letter-spacing:2.6px;font-weight:normal;-webkit-text-stroke:0.3px #f4f4f4;">0,3453</div>
<div class="t" style="left:1062.0px;top:751.6px;font-size:21px;line-height:21px;color:#f4f4f4;letter-spacing:2.6px;font-weight:normal;-webkit-text-stroke:0.3px #f4f4f4;">0,3701</div>
<div class="t" style="left:1186.7px;top:751.6px;font-size:21px;line-height:21px;color:#f4f4f4;letter-spacing:2.6px;font-weight:normal;-webkit-text-stroke:0.3px #f4f4f4;">0,4006</div>
<div class="t" style="left:1310.7px;top:751.6px;font-size:21px;line-height:21px;color:#f4f4f4;letter-spacing:2.6px;font-weight:normal;-webkit-text-stroke:0.3px #f4f4f4;">0,4297</div>
<div class="t" style="left:1436.0px;top:751.6px;font-size:21px;line-height:21px;color:#f4f4f4;letter-spacing:2.6px;font-weight:normal;-webkit-text-stroke:0.3px #f4f4f4;">0,4497</div>
<div style="position:absolute;left:724px;top:776.6px;width:828.4000000000001px;height:29.3px;background:#7e7e7e;"></div>
<div style="position:absolute;left:724px;top:776.6px;width:21.5px;height:29.3px;background:#2c2c2c;"></div>
<div class="t" style="left:753.4px;top:780.9px;font-size:21px;line-height:21px;color:#f4f4f4;letter-spacing:1.45px;font-weight:normal;-webkit-text-stroke:0.3px #f4f4f4;">y: CIE31</div>
<div class="t" style="left:937.0px;top:780.9px;font-size:21px;line-height:21px;color:#f4f4f4;letter-spacing:2.6px;font-weight:normal;-webkit-text-stroke:0.3px #f4f4f4;">0,3719</div>
<div class="t" style="left:1062.0px;top:780.9px;font-size:21px;line-height:21px;color:#f4f4f4;letter-spacing:2.6px;font-weight:normal;-webkit-text-stroke:0.3px #f4f4f4;">0,4130</div>
<div class="t" style="left:1186.7px;top:780.9px;font-size:21px;line-height:21px;color:#f4f4f4;letter-spacing:2.6px;font-weight:normal;-webkit-text-stroke:0.3px #f4f4f4;">0,4615</div>
<div class="t" style="left:1310.7px;top:780.9px;font-size:21px;line-height:21px;color:#f4f4f4;letter-spacing:2.6px;font-weight:normal;-webkit-text-stroke:0.3px #f4f4f4;">0,5071</div>
<div class="t" style="left:1436.0px;top:780.9px;font-size:21px;line-height:21px;color:#f4f4f4;letter-spacing:2.6px;font-weight:normal;-webkit-text-stroke:0.3px #f4f4f4;">0,5277</div>
<div style="position:absolute;left:724px;top:805.9px;width:828.4000000000001px;height:29.3px;background:#444;"></div>
<div style="position:absolute;left:724px;top:805.9px;width:21.5px;height:29.3px;background:#2c2c2c;"></div>
<div class="t" style="left:753.4px;top:810.1px;font-size:21px;line-height:21px;color:#f4f4f4;letter-spacing:1.45px;font-weight:normal;-webkit-text-stroke:0.3px #f4f4f4;">Y</div>
<div class="t" style="left:937.0px;top:810.1px;font-size:21px;line-height:21px;color:#f4f4f4;letter-spacing:2.6px;font-weight:normal;-webkit-text-stroke:0.3px #f4f4f4;">212,0777</div>
<div class="t" style="left:1062.0px;top:810.1px;font-size:21px;line-height:21px;color:#f4f4f4;letter-spacing:2.6px;font-weight:normal;-webkit-text-stroke:0.3px #f4f4f4;">210,2883</div>
<div class="t" style="left:1186.7px;top:810.1px;font-size:21px;line-height:21px;color:#f4f4f4;letter-spacing:2.6px;font-weight:normal;-webkit-text-stroke:0.3px #f4f4f4;">208,0786</div>
<div class="t" style="left:1310.7px;top:810.1px;font-size:21px;line-height:21px;color:#f4f4f4;letter-spacing:2.6px;font-weight:normal;-webkit-text-stroke:0.3px #f4f4f4;">207,9813</div>
<div class="t" style="left:1436.0px;top:810.1px;font-size:21px;line-height:21px;color:#f4f4f4;letter-spacing:2.6px;font-weight:normal;-webkit-text-stroke:0.3px #f4f4f4;">212,4254</div>
<div style="position:absolute;left:724px;top:835.1px;width:828.4000000000001px;height:29.3px;background:#7e7e7e;"></div>
<div style="position:absolute;left:724px;top:835.1px;width:21.5px;height:29.3px;background:#2c2c2c;"></div>
<div class="t" style="left:753.4px;top:839.4px;font-size:21px;line-height:21px;color:#f4f4f4;letter-spacing:2.0px;font-weight:normal;-webkit-text-stroke:0.3px #f4f4f4;">Target x:CIE31</div>
<div class="t" style="left:937.0px;top:839.4px;font-size:21px;line-height:21px;color:#f4f4f4;letter-spacing:2.6px;font-weight:normal;-webkit-text-stroke:0.3px #f4f4f4;">0,3386</div>
<div class="t" style="left:1062.0px;top:839.4px;font-size:21px;line-height:21px;color:#f4f4f4;letter-spacing:2.6px;font-weight:normal;-webkit-text-stroke:0.3px #f4f4f4;">0,3620</div>
<div class="t" style="left:1186.7px;top:839.4px;font-size:21px;line-height:21px;color:#f4f4f4;letter-spacing:2.6px;font-weight:normal;-webkit-text-stroke:0.3px #f4f4f4;">0,3865</div>
<div class="t" style="left:1310.7px;top:839.4px;font-size:21px;line-height:21px;color:#f4f4f4;letter-spacing:2.6px;font-weight:normal;-webkit-text-stroke:0.3px #f4f4f4;">0,4114</div>
<div class="t" style="left:1436.0px;top:839.4px;font-size:21px;line-height:21px;color:#f4f4f4;letter-spacing:2.6px;font-weight:normal;-webkit-text-stroke:0.3px #f4f4f4;">0,4378</div>
<div style="position:absolute;left:724px;top:864.4px;width:828.4000000000001px;height:29.3px;background:#444;"></div>
<div style="position:absolute;left:724px;top:864.4px;width:21.5px;height:29.3px;background:#2c2c2c;"></div>
<div class="t" style="left:753.4px;top:868.6px;font-size:21px;line-height:21px;color:#f4f4f4;letter-spacing:2.0px;font-weight:normal;-webkit-text-stroke:0.3px #f4f4f4;">Target y:CIE31</div>
<div class="t" style="left:937.0px;top:868.6px;font-size:21px;line-height:21px;color:#f4f4f4;letter-spacing:2.6px;font-weight:normal;-webkit-text-stroke:0.3px #f4f4f4;">0,3718</div>
<div class="t" style="left:1062.0px;top:868.6px;font-size:21px;line-height:21px;color:#f4f4f4;letter-spacing:2.6px;font-weight:normal;-webkit-text-stroke:0.3px #f4f4f4;">0,4105</div>
<div class="t" style="left:1186.7px;top:868.6px;font-size:21px;line-height:21px;color:#f4f4f4;letter-spacing:2.6px;font-weight:normal;-webkit-text-stroke:0.3px #f4f4f4;">0,4510</div>
<div class="t" style="left:1310.7px;top:868.6px;font-size:21px;line-height:21px;color:#f4f4f4;letter-spacing:2.6px;font-weight:normal;-webkit-text-stroke:0.3px #f4f4f4;">0,4922</div>
<div class="t" style="left:1436.0px;top:868.6px;font-size:21px;line-height:21px;color:#f4f4f4;letter-spacing:2.6px;font-weight:normal;-webkit-text-stroke:0.3px #f4f4f4;">0,5359</div>
<div style="position:absolute;left:724px;top:893.6px;width:828.4000000000001px;height:29.3px;background:#7e7e7e;"></div>
<div style="position:absolute;left:724px;top:893.6px;width:21.5px;height:29.3px;background:#2c2c2c;"></div>
<div class="t" style="left:753.4px;top:897.9px;font-size:21px;line-height:21px;color:#f4f4f4;letter-spacing:2.6px;font-weight:normal;-webkit-text-stroke:0.3px #f4f4f4;">Target Y</div>
<div class="t" style="left:937.0px;top:897.9px;font-size:21px;line-height:21px;color:#f4f4f4;letter-spacing:2.6px;font-weight:normal;-webkit-text-stroke:0.3px #f4f4f4;">210,2610</div>
<div class="t" style="left:1062.0px;top:897.9px;font-size:21px;line-height:21px;color:#f4f4f4;letter-spacing:2.6px;font-weight:normal;-webkit-text-stroke:0.3px #f4f4f4;">206,5159</div>
<div class="t" style="left:1186.7px;top:897.9px;font-size:21px;line-height:21px;color:#f4f4f4;letter-spacing:2.6px;font-weight:normal;-webkit-text-stroke:0.3px #f4f4f4;">203,3899</div>
<div class="t" style="left:1310.7px;top:897.9px;font-size:21px;line-height:21px;color:#f4f4f4;letter-spacing:2.6px;font-weight:normal;-webkit-text-stroke:0.3px #f4f4f4;">200,8121</div>
<div class="t" style="left:1436.0px;top:897.9px;font-size:21px;line-height:21px;color:#f4f4f4;letter-spacing:2.6px;font-weight:normal;-webkit-text-stroke:0.3px #f4f4f4;">198,5649</div>
<div style="position:absolute;left:0px;top:950px;width:1920px;height:80px;background:#333;"></div>
<div style="position:absolute;left:2px;top:950px;width:1916px;height:2px;background:#333;"></div>
<svg width="1920" height="80" style="left:0;top:950px"><defs><linearGradient id="btg" x1="0" y1="0" x2="0" y2="1"><stop offset="0" stop-color="#a8a8a8"/><stop offset=".55" stop-color="#7c7c7c"/><stop offset="1" stop-color="#5a5a5a"/></linearGradient><linearGradient id="btg2" x1="0" y1="0" x2="0" y2="1"><stop offset="0" stop-color="#a0a0a0"/><stop offset=".5" stop-color="#8a8a8a"/><stop offset="1" stop-color="#585858"/></linearGradient><linearGradient id="btc" x1="0" y1="0" x2="0" y2="1"><stop offset="0" stop-color="#5a5a5a"/><stop offset="1" stop-color="#a8a8a8"/></linearGradient><linearGradient id="bdk" x1="0" y1="0" x2="0" y2="1"><stop offset="0" stop-color="#4a4a4a"/><stop offset="1" stop-color="#202020"/></linearGradient><linearGradient id="btn3" x1="0" y1="0" x2="0" y2="1"><stop offset="0" stop-color="#b4b4b4"/><stop offset=".5" stop-color="#8e8e8e"/><stop offset="1" stop-color="#6a6a6a"/></linearGradient></defs><rect x="0" y="0" width="1920" height="2.5" fill="#333"/><rect x="0" y="2.5" width="1920" height="78" fill="#2c2c2c"/><rect x="1.2" y="2.4" width="56" height="76" rx="6" fill="url(#btg)"/><circle cx="29.6" cy="14" r="9.5" fill="url(#btc)"/><path d="M23.8 16.3h11.6l-5.8-5.6z" fill="#222"/><rect x="7.3" y="35.2" width="44" height="37" rx="5" fill="#ffff00" stroke="#c8c800" stroke-width="1"/><rect x="1012" y="3" width="503" height="75" fill="url(#bdk)"/><rect x="65.2" y="2.4" width="187.8" height="76" rx="5" fill="url(#btg2)"/><rect x="71.5" y="9" width="175.5" height="44.7" rx="5" fill="#c0c0a0" stroke="rgba(0,0,0,.25)" stroke-width="1"/><rect x="255.2" y="2.4" width="187.8" height="76" rx="5" fill="url(#btg2)"/><rect x="261.5" y="9" width="175.5" height="44.7" rx="5" fill="#c0c080" stroke="rgba(0,0,0,.25)" stroke-width="1"/><rect x="445.2" y="2.4" width="187.8" height="76" rx="5" fill="url(#btg2)"/><rect x="451.5" y="9" width="175.5" height="44.7" rx="5" fill="#c2c066" stroke="rgba(0,0,0,.25)" stroke-width="1"/><rect x="635.2" y="2.4" width="187.8" height="76" rx="5" fill="url(#btg2)"/><rect x="641.5" y="9" width="175.5" height="44.7" rx="5" fill="#c2c044" stroke="rgba(0,0,0,.25)" stroke-width="1"/><rect x="825.2" y="2.4" width="187.8" height="76" rx="4" fill="#2a2a2a"/><rect x="831.5" y="9" width="175.5" height="44.7" rx="5" fill="#c0bc00" stroke="rgba(0,0,0,.25)" stroke-width="1"/><path d="M65.5 3.5H1515V78.5H65.5Z" fill="none" stroke="#fff" stroke-width="1.2" stroke-dasharray="1.2 2"/><rect x="1516.4" y="2.7" width="59.7" height="76.3" rx="6" fill="url(#btn3)"/><path d="M1517 25.5H1576" stroke="#555" stroke-width="1.2"/><circle cx="1546.4" cy="13.6" r="9.2" fill="url(#btc)"/><path d="M1540.6 16h11.6l-5.8-5.5z" fill="#222"/><rect x="1527.5" y="34.5" width="37" height="37" rx="6" fill="#8c8c8c" stroke="#222" stroke-width="2.6"/><rect x="1537.6" y="44.2" width="17.5" height="16.8" fill="#050505"/><rect x="1537.6" y="44.2" width="17.5" height="8" fill="#222"/><rect x="1577.7" y="2" width="282.2" height="37.8" rx="1" fill="url(#btn3)"/><path d="M1635.2 2V40" stroke="#4a4a4a" stroke-width="1.3"/><path d="M1691 2V40" stroke="#4a4a4a" stroke-width="1.3"/><path d="M1747.9 2V40" stroke="#4a4a4a" stroke-width="1.3"/><path d="M1804 2V40" stroke="#4a4a4a" stroke-width="1.3"/><defs><linearGradient id="dkr" x1="0" y1="0" x2="0" y2="1"><stop offset="0" stop-color="#3e3e3e"/><stop offset="1" stop-color="#232323"/></linearGradient><linearGradient id="dkc" x1="0" y1="0" x2="0" y2="1"><stop offset="0" stop-color="#262626"/><stop offset="1" stop-color="#3a3a3a"/></linearGradient></defs><path d="M1859.9 2H1912a6 6 0 0 1 6 6V40H1859.9Z" fill="url(#dkr)"/><ellipse cx="1890.5" cy="21.3" rx="11.8" ry="12.3" fill="url(#dkc)"/><circle cx="1606" cy="21.3" r="11.8" fill="url(#btc)" opacity=".9"/><circle cx="1663" cy="21.3" r="11.8" fill="url(#btc)" opacity=".9"/><circle cx="1719.9" cy="21.3" r="11.8" fill="url(#btc)" opacity=".9"/><circle cx="1776" cy="21.3" r="11.8" fill="url(#btc)" opacity=".9"/><circle cx="1832" cy="21.3" r="11.8" fill="url(#btc)" opacity=".9"/><rect x="1601.3" y="16.4" width="9.5" height="9.5" fill="#2a2a2a"/><path d="M1659.5 15.2v12.6l10-6.3z" fill="#1e1e1e"/><path d="M1715.5 15.5h-2.6v12.3h2.6M1724.5 15.5h2.6v12.3h-2.6" fill="none" stroke="#2a2a2a" stroke-width="2.2"/><rect x="1716.6" y="20.6" width="1.8" height="1.8" fill="#2a2a2a"/><rect x="1719.2" y="20.6" width="1.8" height="1.8" fill="#2a2a2a"/><rect x="1721.8" y="20.6" width="1.8" height="1.8" fill="#2a2a2a"/><path d="M1776 21.3c-2.8-3.6-7.6-3.6-7.6 0s4.8 3.6 7.6 0 7.6-3.6 7.6 0-4.8 3.6-7.6 0z" fill="none" stroke="#2a2a2a" stroke-width="2.3"/><path d="M1826.5 20a6 6 0 0 1 10-3.5M1837.5 22.6a6 6 0 0 1-10 3.5" fill="none" stroke="#2a2a2a" stroke-width="2.2"/><path d="M1838.5 13.5v5h-5z M1825.5 29.3v-5h5z" fill="#2a2a2a"/><rect x="1577.7" y="41.4" width="170.2" height="37.6" rx="4" fill="url(#btn3)"/><rect x="1748.7" y="41.4" width="171.3" height="37.6" rx="4" fill="url(#btn3)"/><circle cx="1616" cy="60" r="11.5" fill="url(#btc)" opacity=".8"/><circle cx="1882.4" cy="60" r="11.5" fill="url(#btc)" opacity=".8"/><path d="M1615.5 54.2l-5.2 5.6 5.2 5.6M1620.8 54.2l-5.2 5.6 5.2 5.6" fill="none" stroke="#2a2a2a" stroke-width="1.6"/><path d="M1877.5 54.2l5.2 5.6-5.2 5.6M1882.8 54.2l5.2 5.6-5.2 5.6" fill="none" stroke="#2a2a2a" stroke-width="1.6"/></svg>
<div class="t" style="left:-341.0px;width:1000px;text-align:center;top:1013.2px;font-size:12.5px;line-height:12.5px;color:#2a2a2a;letter-spacing:0px;font-weight:bold;">20%</div>
<div class="t" style="left:-151.0px;width:1000px;text-align:center;top:1013.2px;font-size:12.5px;line-height:12.5px;color:#2a2a2a;letter-spacing:0px;font-weight:bold;">40%</div>
<div class="t" style="left:39.0px;width:1000px;text-align:center;top:1013.2px;font-size:12.5px;line-height:12.5px;color:#2a2a2a;letter-spacing:0px;font-weight:bold;">60%</div>
<div class="t" style="left:229.0px;width:1000px;text-align:center;top:1013.2px;font-size:12.5px;line-height:12.5px;color:#2a2a2a;letter-spacing:0px;font-weight:bold;">80%</div>
<div class="t" style="left:419.0px;width:1000px;text-align:center;top:1013.2px;font-size:12.5px;line-height:12.5px;color:#fff;letter-spacing:0px;font-weight:bold;">100%</div>
<div class="t" style="left:1181.2px;width:1000px;text-align:center;top:996.5px;font-size:27px;line-height:27px;color:#333;letter-spacing:0.3px;font-weight:bold;">Back</div>
<div class="t" style="left:1316.1px;width:1000px;text-align:center;top:996.5px;font-size:27px;line-height:27px;color:#333;letter-spacing:1.2px;font-weight:bold;">Next</div>
</body></html>
